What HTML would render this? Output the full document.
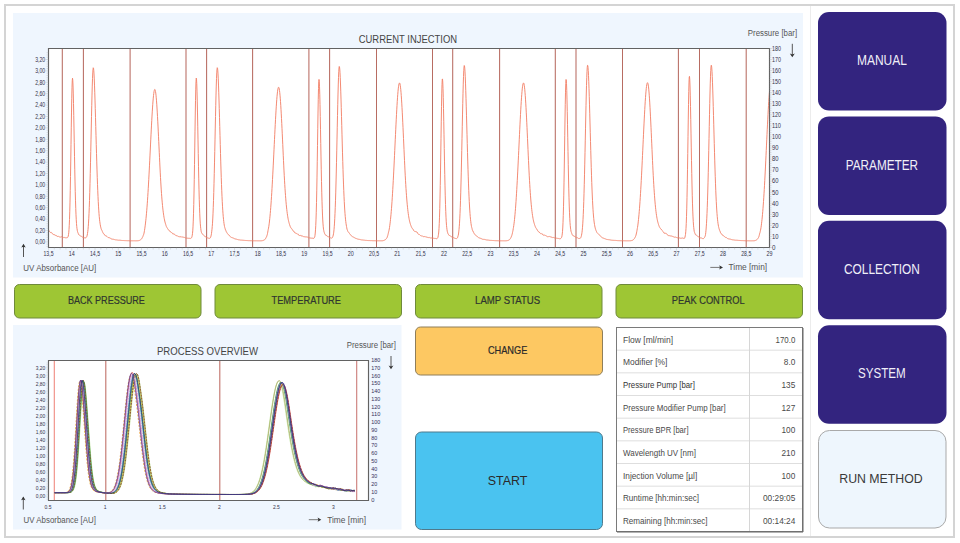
<!DOCTYPE html><html><head><meta charset="utf-8"><style>
html,body{margin:0;padding:0;background:#fff;width:960px;height:543px;overflow:hidden}
svg{position:absolute;left:0;top:0;display:block}
text{font-family:"Liberation Sans", sans-serif}
</style></head><body>
<svg width="960" height="543" viewBox="0 0 960 543">
<rect x="5" y="5" width="949" height="532" fill="#fff" stroke="#d4d4d4" stroke-width="2"/>
<line x1="810.5" y1="6" x2="810.5" y2="536" stroke="#ececec" stroke-width="1"/>
<rect x="13" y="13" width="790" height="264.5" fill="#eff6fe"/>
<rect x="13" y="325" width="388.5" height="204.5" fill="#eff6fe"/>
<rect x="48.5" y="48.5" width="721.0" height="199.0" fill="#fff"/>
<clipPath id="ct"><rect x="48.5" y="48.5" width="721.0" height="199.0"/></clipPath>
<line x1="62.3" y1="48.5" x2="62.3" y2="247.5" stroke="#b86c62" stroke-width="1.05"/>
<line x1="83.4" y1="48.5" x2="83.4" y2="247.5" stroke="#b86c62" stroke-width="1.05"/>
<line x1="130.1" y1="48.5" x2="130.1" y2="247.5" stroke="#b86c62" stroke-width="1.05"/>
<line x1="186.0" y1="48.5" x2="186.0" y2="247.5" stroke="#b86c62" stroke-width="1.05"/>
<line x1="206.6" y1="48.5" x2="206.6" y2="247.5" stroke="#b86c62" stroke-width="1.05"/>
<line x1="252.6" y1="48.5" x2="252.6" y2="247.5" stroke="#b86c62" stroke-width="1.05"/>
<line x1="308.9" y1="48.5" x2="308.9" y2="247.5" stroke="#b86c62" stroke-width="1.05"/>
<line x1="329.6" y1="48.5" x2="329.6" y2="247.5" stroke="#b86c62" stroke-width="1.05"/>
<line x1="376.5" y1="48.5" x2="376.5" y2="247.5" stroke="#b86c62" stroke-width="1.05"/>
<line x1="432.5" y1="48.5" x2="432.5" y2="247.5" stroke="#b86c62" stroke-width="1.05"/>
<line x1="452.7" y1="48.5" x2="452.7" y2="247.5" stroke="#b86c62" stroke-width="1.05"/>
<line x1="499.6" y1="48.5" x2="499.6" y2="247.5" stroke="#b86c62" stroke-width="1.05"/>
<line x1="555.3" y1="48.5" x2="555.3" y2="247.5" stroke="#b86c62" stroke-width="1.05"/>
<line x1="576.0" y1="48.5" x2="576.0" y2="247.5" stroke="#b86c62" stroke-width="1.05"/>
<line x1="622.5" y1="48.5" x2="622.5" y2="247.5" stroke="#b86c62" stroke-width="1.05"/>
<line x1="678.4" y1="48.5" x2="678.4" y2="247.5" stroke="#b86c62" stroke-width="1.05"/>
<line x1="699.5" y1="48.5" x2="699.5" y2="247.5" stroke="#b86c62" stroke-width="1.05"/>
<line x1="746.2" y1="48.5" x2="746.2" y2="247.5" stroke="#b86c62" stroke-width="1.05"/>
<path d="M48.50,229.82 L48.75,230.36 L49.00,230.67 L49.25,230.99 L49.50,231.52 L49.75,231.92 L50.00,232.17 L50.25,232.19 L50.50,232.56 L50.75,232.58 L51.00,232.64 L51.25,232.48 L51.50,232.66 L51.75,232.83 L52.00,232.90 L52.25,233.43 L52.50,233.58 L52.75,234.12 L53.00,234.43 L53.25,234.55 L53.50,234.42 L53.75,234.34 L54.00,234.72 L54.25,234.80 L54.50,234.71 L54.75,234.83 L55.00,235.20 L55.25,235.36 L55.50,235.28 L55.75,235.10 L56.00,235.40 L56.25,235.55 L56.50,235.65 L56.75,235.96 L57.00,236.21 L57.25,236.58 L57.50,236.43 L57.75,236.46 L58.00,236.61 L58.25,236.41 L58.50,236.43 L58.75,236.57 L59.00,236.78 L59.25,236.89 L59.50,236.89 L59.75,237.00 L60.00,237.21 L60.25,237.15 L60.50,237.08 L60.75,237.03 L61.00,236.94 L61.25,236.91 L61.50,236.70 L61.75,236.82 L62.00,236.89 L62.25,237.13 L62.50,237.31 L62.75,237.56 L63.00,237.64 L63.25,237.52 L63.50,237.63 L63.75,237.44 L64.00,237.49 L64.25,237.40 L64.50,237.51 L64.75,237.70 L65.00,237.70 L65.25,237.73 L65.50,237.79 L65.75,237.79 L66.00,237.84 L66.25,237.71 L66.50,237.72 L66.75,237.80 L67.00,237.68 L67.25,237.64 L67.50,237.55 L67.75,237.27 L68.00,236.87 L68.25,236.06 L68.50,234.71 L68.75,232.82 L69.00,229.58 L69.25,225.33 L69.50,219.50 L69.75,211.83 L70.00,202.13 L70.25,190.31 L70.50,176.50 L70.75,161.04 L71.00,144.56 L71.25,127.89 L71.50,112.07 L71.75,98.23 L72.00,87.42 L72.25,80.55 L72.50,78.21 L72.75,79.96 L73.00,85.05 L73.25,93.07 L73.50,103.46 L73.75,115.62 L74.00,128.91 L74.25,142.65 L74.50,156.25 L74.75,169.20 L75.00,181.09 L75.25,191.68 L75.50,200.81 L75.75,208.48 L76.00,214.74 L76.25,219.72 L76.50,223.64 L76.75,226.62 L77.00,228.69 L77.25,230.22 L77.50,231.47 L77.75,232.26 L78.00,232.92 L78.25,233.44 L78.50,234.05 L78.75,234.65 L79.00,234.79 L79.25,235.14 L79.50,235.29 L79.75,235.51 L80.00,235.68 L80.25,235.77 L80.50,235.98 L80.75,236.00 L81.00,236.08 L81.25,236.31 L81.50,236.37 L81.75,236.50 L82.00,236.67 L82.25,236.88 L82.50,237.11 L82.75,237.32 L83.00,237.53 L83.25,237.60 L83.50,237.66 L83.75,237.73 L84.00,237.84 L84.25,237.77 L84.50,237.77 L84.75,237.84 L85.00,237.84 L85.25,237.89 L85.50,237.87 L85.75,237.77 L86.00,237.71 L86.25,237.46 L86.50,237.15 L86.75,236.63 L87.00,235.88 L87.25,235.00 L87.50,233.54 L87.75,231.65 L88.00,229.51 L88.25,226.68 L88.50,223.11 L88.75,218.81 L89.00,213.65 L89.25,207.57 L89.50,200.51 L89.75,192.46 L90.00,183.45 L90.25,173.53 L90.50,162.84 L90.75,151.54 L91.00,139.85 L91.25,128.04 L91.50,116.43 L91.75,105.34 L92.00,95.12 L92.25,86.11 L92.50,78.63 L92.75,72.94 L93.00,69.27 L93.25,67.75 L93.50,68.24 L93.75,70.31 L94.00,73.90 L94.25,78.91 L94.50,85.12 L94.75,92.23 L95.00,100.08 L95.25,108.50 L95.50,117.33 L95.75,126.40 L96.00,135.53 L96.25,144.58 L96.50,153.40 L96.75,161.88 L97.00,169.92 L97.25,177.44 L97.50,184.38 L97.75,190.73 L98.00,196.47 L98.25,201.60 L98.50,206.15 L98.75,210.14 L99.00,213.61 L99.25,216.62 L99.50,219.20 L99.75,221.39 L100.00,223.15 L100.25,224.71 L100.50,226.11 L100.75,227.18 L101.00,228.31 L101.25,228.90 L101.50,229.70 L101.75,230.23 L102.00,230.53 L102.25,231.32 L102.50,231.65 L102.75,232.39 L103.00,232.79 L103.25,233.21 L103.50,233.79 L103.75,233.88 L104.00,234.24 L104.25,234.28 L104.50,234.81 L104.75,235.04 L105.00,235.15 L105.25,235.58 L105.50,235.67 L105.75,235.98 L106.00,235.96 L106.25,236.12 L106.50,236.12 L106.75,236.27 L107.00,236.51 L107.25,236.77 L107.50,236.90 L107.75,237.18 L108.00,237.53 L108.25,237.52 L108.50,237.60 L108.75,237.67 L109.00,237.74 L109.25,237.69 L109.50,237.77 L109.75,237.91 L110.00,238.02 L110.25,238.16 L110.50,238.23 L110.75,238.52 L111.00,238.66 L111.25,238.82 L111.50,238.98 L111.75,239.06 L112.00,239.22 L112.25,239.22 L112.50,239.17 L112.75,239.22 L113.00,239.26 L113.25,239.27 L113.50,239.32 L113.75,239.34 L114.00,239.46 L114.25,239.48 L114.50,239.57 L114.75,239.63 L115.00,239.67 L115.25,239.76 L115.50,239.79 L115.75,239.88 L116.00,239.85 L116.25,239.89 L116.50,239.92 L116.75,239.93 L117.00,239.97 L117.25,240.02 L117.50,240.07 L117.75,240.12 L118.00,240.15 L118.25,240.18 L118.50,240.21 L118.75,240.22 L119.00,240.22 L119.25,240.20 L119.50,240.23 L119.75,240.25 L120.00,240.27 L120.25,240.27 L120.50,240.29 L120.75,240.35 L121.00,240.37 L121.25,240.40 L121.50,240.43 L121.75,240.48 L122.00,240.51 L122.25,240.52 L122.50,240.51 L122.75,240.50 L123.00,240.52 L123.25,240.52 L123.50,240.54 L123.75,240.53 L124.00,240.56 L124.25,240.59 L124.50,240.59 L124.75,240.59 L125.00,240.60 L125.25,240.61 L125.50,240.61 L125.75,240.61 L126.00,240.62 L126.25,240.63 L126.50,240.64 L126.75,240.67 L127.00,240.67 L127.25,240.70 L127.50,240.70 L127.75,240.71 L128.00,240.70 L128.25,240.70 L128.50,240.70 L128.75,240.69 L129.00,240.70 L129.25,240.71 L129.50,240.73 L129.75,240.73 L130.00,240.74 L130.25,240.75 L130.50,240.74 L130.75,240.74 L131.00,240.74 L131.25,240.74 L131.50,240.75 L131.75,240.77 L132.00,240.77 L132.25,240.77 L132.50,240.78 L132.75,240.79 L133.00,240.79 L133.25,240.80 L133.50,240.79 L133.75,240.79 L134.00,240.79 L134.25,240.79 L134.50,240.79 L134.75,240.80 L135.00,240.80 L135.25,240.81 L135.50,240.82 L135.75,240.81 L136.00,240.81 L136.25,240.79 L136.50,240.78 L136.75,240.77 L137.00,240.77 L137.25,240.76 L137.50,240.75 L137.75,240.73 L138.00,240.71 L138.25,240.68 L138.50,240.63 L138.75,240.58 L139.00,240.52 L139.25,240.46 L139.50,240.37 L139.75,240.30 L140.00,240.16 L140.25,240.02 L140.50,239.85 L140.75,239.65 L141.00,239.40 L141.25,239.16 L141.50,238.89 L141.75,238.55 L142.00,238.20 L142.25,237.67 L142.50,237.33 L142.75,236.75 L143.00,236.24 L143.25,235.45 L143.50,234.89 L143.75,234.15 L144.00,233.15 L144.25,231.92 L144.50,230.42 L144.75,228.84 L145.00,227.00 L145.25,225.16 L145.50,223.05 L145.75,220.84 L146.00,218.50 L146.25,215.97 L146.50,213.24 L146.75,210.31 L147.00,207.17 L147.25,203.82 L147.50,200.26 L147.75,196.49 L148.00,192.53 L148.25,188.38 L148.50,184.04 L148.75,179.54 L149.00,174.88 L149.25,170.09 L149.50,165.19 L149.75,160.20 L150.00,155.14 L150.25,150.04 L150.50,144.94 L150.75,139.86 L151.00,134.85 L151.25,129.93 L151.50,125.13 L151.75,120.51 L152.00,116.08 L152.25,111.89 L152.50,107.97 L152.75,104.35 L153.00,101.07 L153.25,98.15 L153.50,95.61 L153.75,93.49 L154.00,91.80 L154.25,90.55 L154.50,89.76 L154.75,89.44 L155.00,89.59 L155.25,90.25 L155.50,91.42 L155.75,93.08 L156.00,95.22 L156.25,97.80 L156.50,100.82 L156.75,104.24 L157.00,108.02 L157.25,112.13 L157.50,116.54 L157.75,121.20 L158.00,126.08 L158.25,131.13 L158.50,136.31 L158.75,141.59 L159.00,146.91 L159.25,152.25 L159.50,157.57 L159.75,162.84 L160.00,167.97 L160.25,172.87 L160.50,177.50 L160.75,181.89 L161.00,186.01 L161.25,189.88 L161.50,193.49 L161.75,196.85 L162.00,199.96 L162.25,202.84 L162.50,205.50 L162.75,207.93 L163.00,210.16 L163.25,212.20 L163.50,214.06 L163.75,215.74 L164.00,217.27 L164.25,218.66 L164.50,219.91 L164.75,221.05 L165.00,222.07 L165.25,223.00 L165.50,223.82 L165.75,224.59 L166.00,225.43 L166.25,226.21 L166.50,226.74 L166.75,227.24 L167.00,227.61 L167.25,228.00 L167.50,228.46 L167.75,228.76 L168.00,229.27 L168.25,229.58 L168.50,229.89 L168.75,230.08 L169.00,230.22 L169.25,230.75 L169.50,230.73 L169.75,230.93 L170.00,231.48 L170.25,231.80 L170.50,231.80 L170.75,231.90 L171.00,231.99 L171.25,232.43 L171.50,232.57 L171.75,232.57 L172.00,232.89 L172.25,233.01 L172.50,233.31 L172.75,233.71 L173.00,233.47 L173.25,233.92 L173.50,234.07 L173.75,234.19 L174.00,234.38 L174.25,234.17 L174.50,234.62 L174.75,234.56 L175.00,234.75 L175.25,234.91 L175.50,235.10 L175.75,235.42 L176.00,235.52 L176.25,235.60 L176.50,235.68 L176.75,235.59 L177.00,235.62 L177.25,235.72 L177.50,235.91 L177.75,236.16 L178.00,236.20 L178.25,236.38 L178.50,236.57 L178.75,236.46 L179.00,236.52 L179.25,236.64 L179.50,236.72 L179.75,236.60 L180.00,236.57 L180.25,236.79 L180.50,236.67 L180.75,236.58 L181.00,236.58 L181.25,236.85 L181.50,237.00 L181.75,236.97 L182.00,237.04 L182.25,237.03 L182.50,237.00 L182.75,237.08 L183.00,237.11 L183.25,237.17 L183.50,237.27 L183.75,237.39 L184.00,237.54 L184.25,237.52 L184.50,237.45 L184.75,237.50 L185.00,237.59 L185.25,237.76 L185.50,237.89 L185.75,238.01 L186.00,238.24 L186.25,238.22 L186.50,238.19 L186.75,238.15 L187.00,238.18 L187.25,238.24 L187.50,238.22 L187.75,238.19 L188.00,238.35 L188.25,238.35 L188.50,238.30 L188.75,238.24 L189.00,238.24 L189.25,238.33 L189.50,238.30 L189.75,238.31 L190.00,238.30 L190.25,238.37 L190.50,238.40 L190.75,238.41 L191.00,238.23 L191.25,238.04 L191.50,237.81 L191.75,237.30 L192.00,236.51 L192.25,235.22 L192.50,233.34 L192.75,230.87 L193.00,226.82 L193.25,221.12 L193.50,213.81 L193.75,204.49 L194.00,193.05 L194.25,179.57 L194.50,164.35 L194.75,147.95 L195.00,131.19 L195.25,115.06 L195.50,100.68 L195.75,89.15 L196.00,81.40 L196.25,78.11 L196.50,79.15 L196.75,83.60 L197.00,91.10 L197.25,101.09 L197.50,112.98 L197.75,126.13 L198.00,139.88 L198.25,153.59 L198.50,166.75 L198.75,178.91 L199.00,189.80 L199.25,199.26 L199.50,207.24 L199.75,213.79 L200.00,219.03 L200.25,223.16 L200.50,226.14 L200.75,228.47 L201.00,230.32 L201.25,231.73 L201.50,232.56 L201.75,232.94 L202.00,233.52 L202.25,233.85 L202.50,234.04 L202.75,234.09 L203.00,234.44 L203.25,234.84 L203.50,235.15 L203.75,235.44 L204.00,235.71 L204.25,235.95 L204.50,236.19 L204.75,236.32 L205.00,236.53 L205.25,236.58 L205.50,236.80 L205.75,236.98 L206.00,237.14 L206.25,237.30 L206.50,237.40 L206.75,237.48 L207.00,237.55 L207.25,237.69 L207.50,237.80 L207.75,237.91 L208.00,237.93 L208.25,238.01 L208.50,238.18 L208.75,238.27 L209.00,238.26 L209.25,238.26 L209.50,238.35 L209.75,238.36 L210.00,238.10 L210.25,237.90 L210.50,237.53 L210.75,236.89 L211.00,235.92 L211.25,234.93 L211.50,233.34 L211.75,231.23 L212.00,229.19 L212.25,226.49 L212.50,223.22 L212.75,218.97 L213.00,213.80 L213.25,207.71 L213.50,200.64 L213.75,192.58 L214.00,183.55 L214.25,173.63 L214.50,162.92 L214.75,151.60 L215.00,139.90 L215.25,128.07 L215.50,116.44 L215.75,105.34 L216.00,95.10 L216.25,86.08 L216.50,78.59 L216.75,72.90 L217.00,69.22 L217.25,67.69 L217.50,68.18 L217.75,70.25 L218.00,73.84 L218.25,78.85 L218.50,85.07 L218.75,92.19 L219.00,100.04 L219.25,108.48 L219.50,117.32 L219.75,126.40 L220.00,135.54 L220.25,144.60 L220.50,153.43 L220.75,161.92 L221.00,169.96 L221.25,177.49 L221.50,184.45 L221.75,190.80 L222.00,196.54 L222.25,201.68 L222.50,206.23 L222.75,210.23 L223.00,213.70 L223.25,216.71 L223.50,219.29 L223.75,221.53 L224.00,223.44 L224.25,225.12 L224.50,226.41 L224.75,227.48 L225.00,228.27 L225.25,229.06 L225.50,229.91 L225.75,230.36 L226.00,230.98 L226.25,231.60 L226.50,232.05 L226.75,232.51 L227.00,232.82 L227.25,233.30 L227.50,233.64 L227.75,234.07 L228.00,234.33 L228.25,234.44 L228.50,234.92 L228.75,235.01 L229.00,235.26 L229.25,235.37 L229.50,235.80 L229.75,236.03 L230.00,236.20 L230.25,236.57 L230.50,236.72 L230.75,236.96 L231.00,237.05 L231.25,237.37 L231.50,237.46 L231.75,237.52 L232.00,237.66 L232.25,237.70 L232.50,237.79 L232.75,237.84 L233.00,237.99 L233.25,238.03 L233.50,238.16 L233.75,238.38 L234.00,238.52 L234.25,238.54 L234.50,238.66 L234.75,238.86 L235.00,238.93 L235.25,238.97 L235.50,238.96 L235.75,239.04 L236.00,239.09 L236.25,239.11 L236.50,239.22 L236.75,239.28 L237.00,239.36 L237.25,239.47 L237.50,239.51 L237.75,239.57 L238.00,239.64 L238.25,239.68 L238.50,239.76 L238.75,239.79 L239.00,239.80 L239.25,239.85 L239.50,239.88 L239.75,239.90 L240.00,239.90 L240.25,239.99 L240.50,240.05 L240.75,240.08 L241.00,240.08 L241.25,240.10 L241.50,240.13 L241.75,240.13 L242.00,240.14 L242.25,240.18 L242.50,240.23 L242.75,240.26 L243.00,240.29 L243.25,240.29 L243.50,240.31 L243.75,240.33 L244.00,240.34 L244.25,240.36 L244.50,240.38 L244.75,240.41 L245.00,240.43 L245.25,240.44 L245.50,240.46 L245.75,240.47 L246.00,240.47 L246.25,240.50 L246.50,240.52 L246.75,240.53 L247.00,240.54 L247.25,240.56 L247.50,240.59 L247.75,240.59 L248.00,240.61 L248.25,240.63 L248.50,240.63 L248.75,240.65 L249.00,240.64 L249.25,240.65 L249.50,240.65 L249.75,240.65 L250.00,240.67 L250.25,240.68 L250.50,240.68 L250.75,240.69 L251.00,240.71 L251.25,240.70 L251.50,240.71 L251.75,240.70 L252.00,240.72 L252.25,240.72 L252.50,240.73 L252.75,240.75 L253.00,240.74 L253.25,240.74 L253.50,240.76 L253.75,240.77 L254.00,240.77 L254.25,240.77 L254.50,240.79 L254.75,240.79 L255.00,240.79 L255.25,240.78 L255.50,240.78 L255.75,240.78 L256.00,240.79 L256.25,240.79 L256.50,240.79 L256.75,240.80 L257.00,240.80 L257.25,240.80 L257.50,240.81 L257.75,240.81 L258.00,240.81 L258.25,240.80 L258.50,240.81 L258.75,240.81 L259.00,240.80 L259.25,240.81 L259.50,240.81 L259.75,240.82 L260.00,240.81 L260.25,240.80 L260.50,240.80 L260.75,240.79 L261.00,240.78 L261.25,240.76 L261.50,240.74 L261.75,240.73 L262.00,240.70 L262.25,240.66 L262.50,240.62 L262.75,240.57 L263.00,240.50 L263.25,240.41 L263.50,240.32 L263.75,240.16 L264.00,240.02 L264.25,239.91 L264.50,239.75 L264.75,239.57 L265.00,239.28 L265.25,239.12 L265.50,238.74 L265.75,238.18 L266.00,237.76 L266.25,237.30 L266.50,236.91 L266.75,236.16 L267.00,235.40 L267.25,234.68 L267.50,233.52 L267.75,232.13 L268.00,230.67 L268.25,229.32 L268.50,228.16 L268.75,226.75 L269.00,225.05 L269.25,223.19 L269.50,221.01 L269.75,218.68 L270.00,216.15 L270.25,213.43 L270.50,210.49 L270.75,207.34 L271.00,203.99 L271.25,200.42 L271.50,196.64 L271.75,192.66 L272.00,188.49 L272.25,184.12 L272.50,179.59 L272.75,174.89 L273.00,170.06 L273.25,165.10 L273.50,160.05 L273.75,154.93 L274.00,149.77 L274.25,144.59 L274.50,139.43 L274.75,134.33 L275.00,129.32 L275.25,124.42 L275.50,119.69 L275.75,115.16 L276.00,110.86 L276.25,106.82 L276.50,103.09 L276.75,99.68 L277.00,96.65 L277.25,93.99 L277.50,91.76 L277.75,89.95 L278.00,88.59 L278.25,87.70 L278.50,87.27 L278.75,87.33 L279.00,87.90 L279.25,88.98 L279.50,90.57 L279.75,92.64 L280.00,95.17 L280.25,98.15 L280.50,101.54 L280.75,105.30 L281.00,109.41 L281.25,113.83 L281.50,118.51 L281.75,123.42 L282.00,128.51 L282.25,133.74 L282.50,139.08 L282.75,144.47 L283.00,149.89 L283.25,155.29 L283.50,160.65 L283.75,165.90 L284.00,170.91 L284.25,175.68 L284.50,180.18 L284.75,184.42 L285.00,188.40 L285.25,192.13 L285.50,195.59 L285.75,198.81 L286.00,201.79 L286.25,204.54 L286.50,207.06 L286.75,209.37 L287.00,211.49 L287.25,213.41 L287.50,215.17 L287.75,216.76 L288.00,218.20 L288.25,219.50 L288.50,220.68 L288.75,221.73 L289.00,222.67 L289.25,223.53 L289.50,224.41 L289.75,225.14 L290.00,225.94 L290.25,226.55 L290.50,227.04 L290.75,227.62 L291.00,228.07 L291.25,228.36 L291.50,228.45 L291.75,228.74 L292.00,229.25 L292.25,229.60 L292.50,229.72 L292.75,230.08 L293.00,230.60 L293.25,230.95 L293.50,231.25 L293.75,231.32 L294.00,232.06 L294.25,231.99 L294.50,232.21 L294.75,232.61 L295.00,232.61 L295.25,233.20 L295.50,232.98 L295.75,233.27 L296.00,233.46 L296.25,233.51 L296.50,233.58 L296.75,233.59 L297.00,233.82 L297.25,234.03 L297.50,233.90 L297.75,234.06 L298.00,234.32 L298.25,234.24 L298.50,234.68 L298.75,234.87 L299.00,235.39 L299.25,235.64 L299.50,235.53 L299.75,235.74 L300.00,235.41 L300.25,235.50 L300.50,235.35 L300.75,235.31 L301.00,235.66 L301.25,235.78 L301.50,235.99 L301.75,235.91 L302.00,236.06 L302.25,236.07 L302.50,236.13 L302.75,236.18 L303.00,236.38 L303.25,236.49 L303.50,236.59 L303.75,236.68 L304.00,236.74 L304.25,236.74 L304.50,236.66 L304.75,236.81 L305.00,236.81 L305.25,236.85 L305.50,236.84 L305.75,236.93 L306.00,236.93 L306.25,236.87 L306.50,236.90 L306.75,237.07 L307.00,237.05 L307.25,236.99 L307.50,237.16 L307.75,237.34 L308.00,237.56 L308.25,237.47 L308.50,237.69 L308.75,237.75 L309.00,237.92 L309.25,237.93 L309.50,237.80 L309.75,237.91 L310.00,237.94 L310.25,238.07 L310.50,237.99 L310.75,238.05 L311.00,238.12 L311.25,238.17 L311.50,238.17 L311.75,238.17 L312.00,238.20 L312.25,238.20 L312.50,238.27 L312.75,238.22 L313.00,238.29 L313.25,238.28 L313.50,238.39 L313.75,238.37 L314.00,238.27 L314.25,237.99 L314.50,237.41 L314.75,236.81 L315.00,235.32 L315.25,233.05 L315.50,229.83 L315.75,225.65 L316.00,219.87 L316.25,212.25 L316.50,202.60 L316.75,190.86 L317.00,177.13 L317.25,161.76 L317.50,145.38 L317.75,128.81 L318.00,113.09 L318.25,99.33 L318.50,88.58 L318.75,81.75 L319.00,79.42 L319.25,81.16 L319.50,86.22 L319.75,94.19 L320.00,104.51 L320.25,116.59 L320.50,129.78 L320.75,143.44 L321.00,156.95 L321.25,169.81 L321.50,181.63 L321.75,192.14 L322.00,201.21 L322.25,208.82 L322.50,215.04 L322.75,219.99 L323.00,223.92 L323.25,226.81 L323.50,229.18 L323.75,230.57 L324.00,231.72 L324.25,232.42 L324.50,233.21 L324.75,233.86 L325.00,234.39 L325.25,234.52 L325.50,235.02 L325.75,235.30 L326.00,235.25 L326.25,235.35 L326.50,235.44 L326.75,235.83 L327.00,235.95 L327.25,236.06 L327.50,236.35 L327.75,236.57 L328.00,236.48 L328.25,236.64 L328.50,236.77 L328.75,237.00 L329.00,237.14 L329.25,237.24 L329.50,237.55 L329.75,237.55 L330.00,237.59 L330.25,237.67 L330.50,237.91 L330.75,237.94 L331.00,238.03 L331.25,238.12 L331.50,238.14 L331.75,238.13 L332.00,237.89 L332.25,237.72 L332.50,237.33 L332.75,236.76 L333.00,236.12 L333.25,235.06 L333.50,233.80 L333.75,232.11 L334.00,229.70 L334.25,226.78 L334.50,223.09 L334.75,218.66 L335.00,213.47 L335.25,207.34 L335.50,200.23 L335.75,192.12 L336.00,183.04 L336.25,173.06 L336.50,162.29 L336.75,150.90 L337.00,139.12 L337.25,127.23 L337.50,115.53 L337.75,104.35 L338.00,94.06 L338.25,84.98 L338.50,77.44 L338.75,71.72 L339.00,68.02 L339.25,66.48 L339.50,66.98 L339.75,69.07 L340.00,72.68 L340.25,77.73 L340.50,83.99 L340.75,91.15 L341.00,99.07 L341.25,107.56 L341.50,116.46 L341.75,125.61 L342.00,134.82 L342.25,143.94 L342.50,152.83 L342.75,161.38 L343.00,169.49 L343.25,177.07 L343.50,184.07 L343.75,190.47 L344.00,196.26 L344.25,201.43 L344.50,206.01 L344.75,210.04 L345.00,213.54 L345.25,216.57 L345.50,219.17 L345.75,221.40 L346.00,223.37 L346.25,225.03 L346.50,226.41 L346.75,227.82 L347.00,229.08 L347.25,229.82 L347.50,230.47 L347.75,231.20 L348.00,231.81 L348.25,231.95 L348.50,232.21 L348.75,232.47 L349.00,232.75 L349.25,233.15 L349.50,233.54 L349.75,233.88 L350.00,234.25 L350.25,234.51 L350.50,234.77 L350.75,234.94 L351.00,235.08 L351.25,235.55 L351.50,235.79 L351.75,236.13 L352.00,236.27 L352.25,236.52 L352.50,236.71 L352.75,236.79 L353.00,236.91 L353.25,236.97 L353.50,237.20 L353.75,237.30 L354.00,237.45 L354.25,237.51 L354.50,237.69 L354.75,237.86 L355.00,237.99 L355.25,238.16 L355.50,238.27 L355.75,238.39 L356.00,238.51 L356.25,238.53 L356.50,238.64 L356.75,238.65 L357.00,238.73 L357.25,238.90 L357.50,238.95 L357.75,239.14 L358.00,239.18 L358.25,239.25 L358.50,239.27 L358.75,239.25 L359.00,239.36 L359.25,239.38 L359.50,239.39 L359.75,239.46 L360.00,239.51 L360.25,239.60 L360.50,239.63 L360.75,239.70 L361.00,239.79 L361.25,239.80 L361.50,239.90 L361.75,239.91 L362.00,239.92 L362.25,239.91 L362.50,239.95 L362.75,240.00 L363.00,239.98 L363.25,240.05 L363.50,240.07 L363.75,240.09 L364.00,240.11 L364.25,240.11 L364.50,240.21 L364.75,240.22 L365.00,240.27 L365.25,240.32 L365.50,240.35 L365.75,240.38 L366.00,240.38 L366.25,240.38 L366.50,240.40 L366.75,240.40 L367.00,240.42 L367.25,240.46 L367.50,240.49 L367.75,240.53 L368.00,240.53 L368.25,240.55 L368.50,240.55 L368.75,240.54 L369.00,240.55 L369.25,240.56 L369.50,240.57 L369.75,240.59 L370.00,240.61 L370.25,240.64 L370.50,240.61 L370.75,240.62 L371.00,240.62 L371.25,240.61 L371.50,240.62 L371.75,240.63 L372.00,240.64 L372.25,240.65 L372.50,240.68 L372.75,240.70 L373.00,240.70 L373.25,240.70 L373.50,240.72 L373.75,240.70 L374.00,240.70 L374.25,240.70 L374.50,240.71 L374.75,240.71 L375.00,240.71 L375.25,240.73 L375.50,240.73 L375.75,240.73 L376.00,240.72 L376.25,240.74 L376.50,240.75 L376.75,240.75 L377.00,240.77 L377.25,240.78 L377.50,240.79 L377.75,240.78 L378.00,240.79 L378.25,240.79 L378.50,240.79 L378.75,240.79 L379.00,240.80 L379.25,240.80 L379.50,240.79 L379.75,240.80 L380.00,240.80 L380.25,240.79 L380.50,240.79 L380.75,240.79 L381.00,240.78 L381.25,240.77 L381.50,240.77 L381.75,240.77 L382.00,240.76 L382.25,240.74 L382.50,240.73 L382.75,240.71 L383.00,240.67 L383.25,240.62 L383.50,240.54 L383.75,240.48 L384.00,240.38 L384.25,240.27 L384.50,240.14 L384.75,240.03 L385.00,239.94 L385.25,239.75 L385.50,239.56 L385.75,239.38 L386.00,239.16 L386.25,238.83 L386.50,238.39 L386.75,238.05 L387.00,237.70 L387.25,236.98 L387.50,236.20 L387.75,235.47 L388.00,234.59 L388.25,233.48 L388.50,232.25 L388.75,231.31 L389.00,230.35 L389.25,229.03 L389.50,227.56 L389.75,225.75 L390.00,223.86 L390.25,221.77 L390.50,219.51 L390.75,217.03 L391.00,214.35 L391.25,211.46 L391.50,208.36 L391.75,205.04 L392.00,201.50 L392.25,197.75 L392.50,193.78 L392.75,189.61 L393.00,185.24 L393.25,180.68 L393.50,175.95 L393.75,171.06 L394.00,166.04 L394.25,160.91 L394.50,155.68 L394.75,150.40 L395.00,145.08 L395.25,139.76 L395.50,134.48 L395.75,129.26 L396.00,124.15 L396.25,119.19 L396.50,114.40 L396.75,109.83 L397.00,105.51 L397.25,101.49 L397.50,97.78 L397.75,94.43 L398.00,91.46 L398.25,88.90 L398.50,86.78 L398.75,85.10 L399.00,83.90 L399.25,83.17 L399.50,82.93 L399.75,83.19 L400.00,83.99 L400.25,85.31 L400.50,87.15 L400.75,89.47 L401.00,92.26 L401.25,95.49 L401.50,99.13 L401.75,103.15 L402.00,107.50 L402.25,112.16 L402.50,117.07 L402.75,122.19 L403.00,127.49 L403.25,132.92 L403.50,138.43 L403.75,143.99 L404.00,149.56 L404.25,155.10 L404.50,160.58 L404.75,165.89 L405.00,170.95 L405.25,175.74 L405.50,180.28 L405.75,184.54 L406.00,188.55 L406.25,192.28 L406.50,195.76 L406.75,198.99 L407.00,201.97 L407.25,204.72 L407.50,207.24 L407.75,209.55 L408.00,211.66 L408.25,213.59 L408.50,215.33 L408.75,216.92 L409.00,218.35 L409.25,219.65 L409.50,220.83 L409.75,221.87 L410.00,222.84 L410.25,223.71 L410.50,224.53 L410.75,225.26 L411.00,225.84 L411.25,226.53 L411.50,226.99 L411.75,227.60 L412.00,227.83 L412.25,228.37 L412.50,228.79 L412.75,228.84 L413.00,229.28 L413.25,229.57 L413.50,230.37 L413.75,230.52 L414.00,230.73 L414.25,231.08 L414.50,231.26 L414.75,231.39 L415.00,231.33 L415.25,231.38 L415.50,231.78 L415.75,231.58 L416.00,231.89 L416.25,231.82 L416.50,231.80 L416.75,232.07 L417.00,232.11 L417.25,232.71 L417.50,232.65 L417.75,233.36 L418.00,233.71 L418.25,234.04 L418.50,234.31 L418.75,234.53 L419.00,234.80 L419.25,234.55 L419.50,234.80 L419.75,234.75 L420.00,235.03 L420.25,235.26 L420.50,235.52 L420.75,235.67 L421.00,235.76 L421.25,235.92 L421.50,235.88 L421.75,235.75 L422.00,235.65 L422.25,235.80 L422.50,236.00 L422.75,236.25 L423.00,236.40 L423.25,236.48 L423.50,236.55 L423.75,236.68 L424.00,236.44 L424.25,236.44 L424.50,236.57 L424.75,236.65 L425.00,236.67 L425.25,236.63 L425.50,236.91 L425.75,236.85 L426.00,236.78 L426.25,236.92 L426.50,237.04 L426.75,237.07 L427.00,237.10 L427.25,237.31 L427.50,237.27 L427.75,237.47 L428.00,237.53 L428.25,237.58 L428.50,237.56 L428.75,237.56 L429.00,237.64 L429.25,237.49 L429.50,237.62 L429.75,237.67 L430.00,237.72 L430.25,237.82 L430.50,237.93 L430.75,237.92 L431.00,237.84 L431.25,237.92 L431.50,237.94 L431.75,237.88 L432.00,237.79 L432.25,237.85 L432.50,238.07 L432.75,238.08 L433.00,238.08 L433.25,238.05 L433.50,238.19 L433.75,238.35 L434.00,238.24 L434.25,238.29 L434.50,238.39 L434.75,238.56 L435.00,238.52 L435.25,238.46 L435.50,238.48 L435.75,238.52 L436.00,238.62 L436.25,238.64 L436.50,238.66 L436.75,238.76 L437.00,238.71 L437.25,238.46 L437.50,238.20 L437.75,237.76 L438.00,237.08 L438.25,235.77 L438.50,234.20 L438.75,232.01 L439.00,228.45 L439.25,223.66 L439.50,217.16 L439.75,208.70 L440.00,198.14 L440.25,185.49 L440.50,170.96 L440.75,154.99 L441.00,138.32 L441.25,121.85 L441.50,106.68 L441.75,93.92 L442.00,84.59 L442.25,79.48 L442.50,78.92 L442.75,82.03 L443.00,88.36 L443.25,97.39 L443.50,108.55 L443.75,121.24 L444.00,134.78 L444.25,148.53 L444.50,161.92 L444.75,174.48 L445.00,185.87 L445.25,195.88 L445.50,204.42 L445.75,211.51 L446.00,217.23 L446.25,221.77 L446.50,225.29 L446.75,227.77 L447.00,229.72 L447.25,231.24 L447.50,232.15 L447.75,232.92 L448.00,233.78 L448.25,234.26 L448.50,234.47 L448.75,235.03 L449.00,235.13 L449.25,235.54 L449.50,235.44 L449.75,235.69 L450.00,235.88 L450.25,235.88 L450.50,236.24 L450.75,236.17 L451.00,236.32 L451.25,236.56 L451.50,236.72 L451.75,236.86 L452.00,236.96 L452.25,237.28 L452.50,237.39 L452.75,237.47 L453.00,237.56 L453.25,237.59 L453.50,237.63 L453.75,237.72 L454.00,237.84 L454.25,237.99 L454.50,238.17 L454.75,238.20 L455.00,238.34 L455.25,238.35 L455.50,238.50 L455.75,238.48 L456.00,238.45 L456.25,238.70 L456.50,238.65 L456.75,238.55 L457.00,238.29 L457.25,238.01 L457.50,237.70 L457.75,236.94 L458.00,236.15 L458.25,235.24 L458.50,233.99 L458.75,231.92 L459.00,229.63 L459.25,226.72 L459.50,223.19 L459.75,218.90 L460.00,213.66 L460.25,207.48 L460.50,200.31 L460.75,192.14 L461.00,182.98 L461.25,172.92 L461.50,162.06 L461.75,150.59 L462.00,138.72 L462.25,126.74 L462.50,114.95 L462.75,103.69 L463.00,93.31 L463.25,84.17 L463.50,76.57 L463.75,70.80 L464.00,67.07 L464.25,65.52 L464.50,66.01 L464.75,68.11 L465.00,71.74 L465.25,76.82 L465.50,83.12 L465.75,90.33 L466.00,98.29 L466.25,106.85 L466.50,115.82 L466.75,125.02 L467.00,134.30 L467.25,143.49 L467.50,152.45 L467.75,161.06 L468.00,169.22 L468.25,176.85 L468.50,183.91 L468.75,190.35 L469.00,196.18 L469.25,201.39 L469.50,206.00 L469.75,210.05 L470.00,213.57 L470.25,216.62 L470.50,219.23 L470.75,221.48 L471.00,223.45 L471.25,225.11 L471.50,226.61 L471.75,227.56 L472.00,228.37 L472.25,229.51 L472.50,230.17 L472.75,230.80 L473.00,230.98 L473.25,231.99 L473.50,232.30 L473.75,232.79 L474.00,233.23 L474.25,233.67 L474.50,234.12 L474.75,234.35 L475.00,234.77 L475.25,234.89 L475.50,235.16 L475.75,235.38 L476.00,235.62 L476.25,235.70 L476.50,235.89 L476.75,236.15 L477.00,236.37 L477.25,236.44 L477.50,236.74 L477.75,237.05 L478.00,237.15 L478.25,237.40 L478.50,237.55 L478.75,237.75 L479.00,237.77 L479.25,237.82 L479.50,238.00 L479.75,238.07 L480.00,238.11 L480.25,238.23 L480.50,238.37 L480.75,238.38 L481.00,238.47 L481.25,238.56 L481.50,238.71 L481.75,238.81 L482.00,238.95 L482.25,239.12 L482.50,239.21 L482.75,239.25 L483.00,239.27 L483.25,239.32 L483.50,239.33 L483.75,239.40 L484.00,239.38 L484.25,239.37 L484.50,239.45 L484.75,239.48 L485.00,239.54 L485.25,239.54 L485.50,239.66 L485.75,239.80 L486.00,239.82 L486.25,239.89 L486.50,239.93 L486.75,240.00 L487.00,240.03 L487.25,240.02 L487.50,240.04 L487.75,240.05 L488.00,240.10 L488.25,240.11 L488.50,240.13 L488.75,240.20 L489.00,240.25 L489.25,240.31 L489.50,240.32 L489.75,240.35 L490.00,240.36 L490.25,240.38 L490.50,240.40 L490.75,240.39 L491.00,240.40 L491.25,240.40 L491.50,240.42 L491.75,240.43 L492.00,240.43 L492.25,240.45 L492.50,240.49 L492.75,240.50 L493.00,240.52 L493.25,240.51 L493.50,240.53 L493.75,240.55 L494.00,240.56 L494.25,240.59 L494.50,240.60 L494.75,240.63 L495.00,240.64 L495.25,240.65 L495.50,240.67 L495.75,240.67 L496.00,240.67 L496.25,240.68 L496.50,240.68 L496.75,240.68 L497.00,240.69 L497.25,240.69 L497.50,240.71 L497.75,240.72 L498.00,240.73 L498.25,240.74 L498.50,240.74 L498.75,240.74 L499.00,240.74 L499.25,240.74 L499.50,240.74 L499.75,240.75 L500.00,240.77 L500.25,240.77 L500.50,240.78 L500.75,240.78 L501.00,240.78 L501.25,240.78 L501.50,240.78 L501.75,240.79 L502.00,240.79 L502.25,240.79 L502.50,240.80 L502.75,240.80 L503.00,240.80 L503.25,240.80 L503.50,240.81 L503.75,240.81 L504.00,240.82 L504.25,240.82 L504.50,240.82 L504.75,240.81 L505.00,240.81 L505.25,240.80 L505.50,240.80 L505.75,240.78 L506.00,240.77 L506.25,240.74 L506.50,240.72 L506.75,240.70 L507.00,240.66 L507.25,240.62 L507.50,240.59 L507.75,240.53 L508.00,240.46 L508.25,240.36 L508.50,240.28 L508.75,240.14 L509.00,239.98 L509.25,239.85 L509.50,239.62 L509.75,239.37 L510.00,239.09 L510.25,238.77 L510.50,238.31 L510.75,237.81 L511.00,237.44 L511.25,236.92 L511.50,236.10 L511.75,235.55 L512.00,234.72 L512.25,233.86 L512.50,232.63 L512.75,231.41 L513.00,230.27 L513.25,228.61 L513.50,227.30 L513.75,225.58 L514.00,223.75 L514.25,221.77 L514.50,219.52 L514.75,217.04 L515.00,214.36 L515.25,211.47 L515.50,208.37 L515.75,205.05 L516.00,201.51 L516.25,197.76 L516.50,193.79 L516.75,189.62 L517.00,185.25 L517.25,180.69 L517.50,175.96 L517.75,171.07 L518.00,166.05 L518.25,160.92 L518.50,155.69 L518.75,150.41 L519.00,145.09 L519.25,139.77 L519.50,134.49 L519.75,129.27 L520.00,124.16 L520.25,119.20 L520.50,114.41 L520.75,109.84 L521.00,105.52 L521.25,101.49 L521.50,97.79 L521.75,94.44 L522.00,91.47 L522.25,88.91 L522.50,86.79 L522.75,85.11 L523.00,83.91 L523.25,83.18 L523.50,82.94 L523.75,83.20 L524.00,84.00 L524.25,85.32 L524.50,87.15 L524.75,89.48 L525.00,92.27 L525.25,95.50 L525.50,99.14 L525.75,103.16 L526.00,107.51 L526.25,112.16 L526.50,117.08 L526.75,122.20 L527.00,127.50 L527.25,132.92 L527.50,138.44 L527.75,144.00 L528.00,149.57 L528.25,155.11 L528.50,160.59 L528.75,165.90 L529.00,170.95 L529.25,175.75 L529.50,180.28 L529.75,184.55 L530.00,188.55 L530.25,192.29 L530.50,195.77 L530.75,199.00 L531.00,201.98 L531.25,204.73 L531.50,207.25 L531.75,209.56 L532.00,211.67 L532.25,213.59 L532.50,215.34 L532.75,216.92 L533.00,218.36 L533.25,219.66 L533.50,220.83 L533.75,221.89 L534.00,222.77 L534.25,223.61 L534.50,224.44 L534.75,225.23 L535.00,225.86 L535.25,226.50 L535.50,227.16 L535.75,227.70 L536.00,228.09 L536.25,228.55 L536.50,228.76 L536.75,228.95 L537.00,229.49 L537.25,230.10 L537.50,230.52 L537.75,230.63 L538.00,230.94 L538.25,231.38 L538.50,231.82 L538.75,231.76 L539.00,231.84 L539.25,232.04 L539.50,232.59 L539.75,232.61 L540.00,232.78 L540.25,233.17 L540.50,233.43 L540.75,233.81 L541.00,233.79 L541.25,233.79 L541.50,233.88 L541.75,233.64 L542.00,233.83 L542.25,233.97 L542.50,234.04 L542.75,234.64 L543.00,234.77 L543.25,235.20 L543.50,235.22 L543.75,235.16 L544.00,235.27 L544.25,235.21 L544.50,235.08 L544.75,235.15 L545.00,235.11 L545.25,235.35 L545.50,235.46 L545.75,235.57 L546.00,235.66 L546.25,235.84 L546.50,236.06 L546.75,236.26 L547.00,236.45 L547.25,236.50 L547.50,236.73 L547.75,236.66 L548.00,236.67 L548.25,236.59 L548.50,236.61 L548.75,236.56 L549.00,236.45 L549.25,236.45 L549.50,236.55 L549.75,236.47 L550.00,236.59 L550.25,236.65 L550.50,236.88 L550.75,236.84 L551.00,236.95 L551.25,237.13 L551.50,237.05 L551.75,237.17 L552.00,237.20 L552.25,237.54 L552.50,237.59 L552.75,237.51 L553.00,237.63 L553.25,237.55 L553.50,237.49 L553.75,237.45 L554.00,237.56 L554.25,237.74 L554.50,237.75 L554.75,237.91 L555.00,237.98 L555.25,237.96 L555.50,237.94 L555.75,238.05 L556.00,238.14 L556.25,238.13 L556.50,238.22 L556.75,238.34 L557.00,238.40 L557.25,238.37 L557.50,238.39 L557.75,238.45 L558.00,238.51 L558.25,238.48 L558.50,238.49 L558.75,238.55 L559.00,238.67 L559.25,238.74 L559.50,238.73 L559.75,238.75 L560.00,238.72 L560.25,238.67 L560.50,238.56 L560.75,238.50 L561.00,238.31 L561.25,238.03 L561.50,237.59 L561.75,236.90 L562.00,235.79 L562.25,233.95 L562.50,231.65 L562.75,227.97 L563.00,222.67 L563.25,215.68 L563.50,206.83 L563.75,195.88 L564.00,182.87 L564.25,168.06 L564.50,151.94 L564.75,135.27 L565.00,119.03 L565.25,104.30 L565.50,92.19 L565.75,83.68 L566.00,79.48 L566.25,79.75 L566.50,83.51 L566.75,90.41 L567.00,99.88 L567.25,111.37 L567.50,124.23 L567.75,137.82 L568.00,151.50 L568.25,164.72 L568.50,177.03 L568.75,188.12 L569.00,197.80 L569.25,206.02 L569.50,212.80 L569.75,218.26 L570.00,222.54 L570.25,225.57 L570.50,228.06 L570.75,229.68 L571.00,231.23 L571.25,232.23 L571.50,232.57 L571.75,233.51 L572.00,234.13 L572.25,234.76 L572.50,235.10 L572.75,235.24 L573.00,235.62 L573.25,235.96 L573.50,235.92 L573.75,235.87 L574.00,235.82 L574.25,236.24 L574.50,236.39 L574.75,236.29 L575.00,236.66 L575.25,236.97 L575.50,237.21 L575.75,237.35 L576.00,237.46 L576.25,237.60 L576.50,237.60 L576.75,237.56 L577.00,237.65 L577.25,237.64 L577.50,237.77 L577.75,237.96 L578.00,238.14 L578.25,238.34 L578.50,238.42 L578.75,238.50 L579.00,238.53 L579.25,238.52 L579.50,238.44 L579.75,238.40 L580.00,238.42 L580.25,238.30 L580.50,237.97 L580.75,237.58 L581.00,237.15 L581.25,236.42 L581.50,235.26 L581.75,233.87 L582.00,232.39 L582.25,230.20 L582.50,227.26 L582.75,223.90 L583.00,219.74 L583.25,214.67 L583.50,208.67 L583.75,201.69 L584.00,193.71 L584.25,184.73 L584.50,174.83 L584.75,164.10 L585.00,152.72 L585.25,140.89 L585.50,128.89 L585.75,117.01 L586.00,105.60 L586.25,95.00 L586.50,85.57 L586.75,77.63 L587.00,71.46 L587.25,67.30 L587.50,65.31 L587.75,65.44 L588.00,67.22 L588.25,70.57 L588.50,75.37 L588.75,81.47 L589.00,88.52 L589.25,96.37 L589.50,104.83 L589.75,113.75 L590.00,122.94 L590.25,132.23 L590.50,141.47 L590.75,150.50 L591.00,159.21 L591.25,167.48 L591.50,175.24 L591.75,182.43 L592.00,189.02 L592.25,194.98 L592.50,200.32 L592.75,205.06 L593.00,209.22 L593.25,212.85 L593.50,216.00 L593.75,218.70 L594.00,221.01 L594.25,222.91 L594.50,224.53 L594.75,225.87 L595.00,227.12 L595.25,228.16 L595.50,229.09 L595.75,229.76 L596.00,230.50 L596.25,231.15 L596.50,231.59 L596.75,232.29 L597.00,232.50 L597.25,232.96 L597.50,233.23 L597.75,233.39 L598.00,233.73 L598.25,233.92 L598.50,234.20 L598.75,234.24 L599.00,234.51 L599.25,234.74 L599.50,234.94 L599.75,235.26 L600.00,235.54 L600.25,235.87 L600.50,236.07 L600.75,236.36 L601.00,236.64 L601.25,236.93 L601.50,237.11 L601.75,237.45 L602.00,237.61 L602.25,237.82 L602.50,237.87 L602.75,237.81 L603.00,238.05 L603.25,238.10 L603.50,238.22 L603.75,238.23 L604.00,238.34 L604.25,238.52 L604.50,238.57 L604.75,238.58 L605.00,238.70 L605.25,238.84 L605.50,238.91 L605.75,239.00 L606.00,239.08 L606.25,239.29 L606.50,239.35 L606.75,239.39 L607.00,239.45 L607.25,239.53 L607.50,239.52 L607.75,239.55 L608.00,239.61 L608.25,239.63 L608.50,239.67 L608.75,239.68 L609.00,239.72 L609.25,239.74 L609.50,239.75 L609.75,239.84 L610.00,239.89 L610.25,239.93 L610.50,239.97 L610.75,240.02 L611.00,240.06 L611.25,240.12 L611.50,240.17 L611.75,240.19 L612.00,240.24 L612.25,240.26 L612.50,240.27 L612.75,240.27 L613.00,240.27 L613.25,240.30 L613.50,240.34 L613.75,240.35 L614.00,240.36 L614.25,240.36 L614.50,240.38 L614.75,240.39 L615.00,240.39 L615.25,240.40 L615.50,240.42 L615.75,240.45 L616.00,240.47 L616.25,240.48 L616.50,240.51 L616.75,240.54 L617.00,240.56 L617.25,240.59 L617.50,240.60 L617.75,240.61 L618.00,240.63 L618.25,240.63 L618.50,240.65 L618.75,240.63 L619.00,240.65 L619.25,240.66 L619.50,240.65 L619.75,240.67 L620.00,240.68 L620.25,240.69 L620.50,240.69 L620.75,240.71 L621.00,240.72 L621.25,240.72 L621.50,240.71 L621.75,240.72 L622.00,240.73 L622.25,240.72 L622.50,240.71 L622.75,240.73 L623.00,240.74 L623.25,240.74 L623.50,240.73 L623.75,240.74 L624.00,240.75 L624.25,240.75 L624.50,240.75 L624.75,240.76 L625.00,240.77 L625.25,240.77 L625.50,240.78 L625.75,240.79 L626.00,240.80 L626.25,240.80 L626.50,240.80 L626.75,240.80 L627.00,240.81 L627.25,240.81 L627.50,240.81 L627.75,240.81 L628.00,240.81 L628.25,240.81 L628.50,240.80 L628.75,240.80 L629.00,240.79 L629.25,240.79 L629.50,240.78 L629.75,240.77 L630.00,240.76 L630.25,240.75 L630.50,240.71 L630.75,240.67 L631.00,240.64 L631.25,240.61 L631.50,240.57 L631.75,240.50 L632.00,240.46 L632.25,240.39 L632.50,240.30 L632.75,240.12 L633.00,239.96 L633.25,239.80 L633.50,239.53 L633.75,239.28 L634.00,238.97 L634.25,238.74 L634.50,238.33 L634.75,237.89 L635.00,237.50 L635.25,237.01 L635.50,236.50 L635.75,235.84 L636.00,235.10 L636.25,233.97 L636.50,232.94 L636.75,231.76 L637.00,230.28 L637.25,228.78 L637.50,227.50 L637.75,225.90 L638.00,224.03 L638.25,221.82 L638.50,219.48 L638.75,217.00 L639.00,214.32 L639.25,211.42 L639.50,208.31 L639.75,204.98 L640.00,201.44 L640.25,197.68 L640.50,193.70 L640.75,189.52 L641.00,185.14 L641.25,180.58 L641.50,175.84 L641.75,170.94 L642.00,165.91 L642.25,160.77 L642.50,155.53 L642.75,150.24 L643.00,144.91 L643.25,139.58 L643.50,134.29 L643.75,129.06 L644.00,123.94 L644.25,118.97 L644.50,114.17 L644.75,109.59 L645.00,105.27 L645.25,101.23 L645.50,97.52 L645.75,94.16 L646.00,91.19 L646.25,88.62 L646.50,86.49 L646.75,84.82 L647.00,83.61 L647.25,82.88 L647.50,82.64 L647.75,82.90 L648.00,83.70 L648.25,85.03 L648.50,86.86 L648.75,89.19 L649.00,91.98 L649.25,95.22 L649.50,98.87 L649.75,102.89 L650.00,107.26 L650.25,111.92 L650.50,116.84 L650.75,121.98 L651.00,127.28 L651.25,132.72 L651.50,138.24 L651.75,143.82 L652.00,149.40 L652.25,154.95 L652.50,160.43 L652.75,165.75 L653.00,170.82 L653.25,175.63 L653.50,180.17 L653.75,184.45 L654.00,188.46 L654.25,192.20 L654.50,195.69 L654.75,198.92 L655.00,201.91 L655.25,204.67 L655.50,207.20 L655.75,209.51 L656.00,211.63 L656.25,213.56 L656.50,215.31 L656.75,216.89 L657.00,218.33 L657.25,219.63 L657.50,220.81 L657.75,221.86 L658.00,222.76 L658.25,223.60 L658.50,224.47 L658.75,225.21 L659.00,225.88 L659.25,226.52 L659.50,227.21 L659.75,227.48 L660.00,227.86 L660.25,228.23 L660.50,228.59 L660.75,228.89 L661.00,228.97 L661.25,229.46 L661.50,229.49 L661.75,229.91 L662.00,230.15 L662.25,230.48 L662.50,230.82 L662.75,231.30 L663.00,231.80 L663.25,231.98 L663.50,232.23 L663.75,232.72 L664.00,233.19 L664.25,233.27 L664.50,233.19 L664.75,233.33 L665.00,233.44 L665.25,233.42 L665.50,233.39 L665.75,233.33 L666.00,233.57 L666.25,233.48 L666.50,233.80 L666.75,233.91 L667.00,234.33 L667.25,234.63 L667.50,234.78 L667.75,235.23 L668.00,235.27 L668.25,235.51 L668.50,235.39 L668.75,235.69 L669.00,235.79 L669.25,235.68 L669.50,235.79 L669.75,235.72 L670.00,235.92 L670.25,235.94 L670.50,235.85 L670.75,235.97 L671.00,235.99 L671.25,236.12 L671.50,236.02 L671.75,236.02 L672.00,236.16 L672.25,236.26 L672.50,236.48 L672.75,236.43 L673.00,236.58 L673.25,236.55 L673.50,236.78 L673.75,236.98 L674.00,237.01 L674.25,237.13 L674.50,237.11 L674.75,237.19 L675.00,237.15 L675.25,237.08 L675.50,237.12 L675.75,237.19 L676.00,237.30 L676.25,237.41 L676.50,237.43 L676.75,237.60 L677.00,237.68 L677.25,237.69 L677.50,237.80 L677.75,237.77 L678.00,237.82 L678.25,237.79 L678.50,237.69 L678.75,237.74 L679.00,237.78 L679.25,237.87 L679.50,237.92 L679.75,238.02 L680.00,238.08 L680.25,238.14 L680.50,238.24 L680.75,238.29 L681.00,238.26 L681.25,238.20 L681.50,238.19 L681.75,238.21 L682.00,238.14 L682.25,238.03 L682.50,238.02 L682.75,238.11 L683.00,238.20 L683.25,238.27 L683.50,238.32 L683.75,238.48 L684.00,238.51 L684.25,238.41 L684.50,238.29 L684.75,237.76 L685.00,237.02 L685.25,235.83 L685.50,234.44 L685.75,231.81 L686.00,228.44 L686.25,223.51 L686.50,216.73 L686.75,208.13 L687.00,197.41 L687.25,184.57 L687.50,169.81 L687.75,153.60 L688.00,136.66 L688.25,119.94 L688.50,104.54 L688.75,91.58 L689.00,82.11 L689.25,76.91 L689.50,76.34 L689.75,79.50 L690.00,85.93 L690.25,95.10 L690.50,106.45 L690.75,119.34 L691.00,133.10 L691.25,147.07 L691.50,160.68 L691.75,173.45 L692.00,185.02 L692.25,195.20 L692.50,203.88 L692.75,211.08 L693.00,216.90 L693.25,221.51 L693.50,225.14 L693.75,227.72 L694.00,229.87 L694.25,231.46 L694.50,232.28 L694.75,232.86 L695.00,233.59 L695.25,234.34 L695.50,234.65 L695.75,234.78 L696.00,234.78 L696.25,235.17 L696.50,235.28 L696.75,235.48 L697.00,235.61 L697.25,235.79 L697.50,236.22 L697.75,236.41 L698.00,236.67 L698.25,236.71 L698.50,236.84 L698.75,237.00 L699.00,237.11 L699.25,237.23 L699.50,237.20 L699.75,237.44 L700.00,237.64 L700.25,237.82 L700.50,237.97 L700.75,237.87 L701.00,238.03 L701.25,238.06 L701.50,238.01 L701.75,238.07 L702.00,238.21 L702.25,238.44 L702.50,238.51 L702.75,238.64 L703.00,238.74 L703.25,238.72 L703.50,238.51 L703.75,238.35 L704.00,238.16 L704.25,237.84 L704.50,237.47 L704.75,237.05 L705.00,236.48 L705.25,235.83 L705.50,234.65 L705.75,232.63 L706.00,230.20 L706.25,226.95 L706.50,223.29 L706.75,218.83 L707.00,213.58 L707.25,207.39 L707.50,200.21 L707.75,192.02 L708.00,182.85 L708.25,172.77 L708.50,161.90 L708.75,150.40 L709.00,138.52 L709.25,126.51 L709.50,114.70 L709.75,103.42 L710.00,93.03 L710.25,83.87 L710.50,76.26 L710.75,70.48 L711.00,66.74 L711.25,65.19 L711.50,65.68 L711.75,67.78 L712.00,71.42 L712.25,76.51 L712.50,82.82 L712.75,90.04 L713.00,98.02 L713.25,106.59 L713.50,115.58 L713.75,124.80 L714.00,134.09 L714.25,143.30 L714.50,152.28 L714.75,160.90 L715.00,169.08 L715.25,176.73 L715.50,183.80 L715.75,190.26 L716.00,196.09 L716.25,201.31 L716.50,205.93 L716.75,209.99 L717.00,213.52 L717.25,216.57 L717.50,219.19 L717.75,221.44 L718.00,223.36 L718.25,224.95 L718.50,226.41 L718.75,227.43 L719.00,228.46 L719.25,229.19 L719.50,230.10 L719.75,230.65 L720.00,231.01 L720.25,231.88 L720.50,232.77 L720.75,232.94 L721.00,233.31 L721.25,233.55 L721.50,234.03 L721.75,234.30 L722.00,234.26 L722.25,234.88 L722.50,235.02 L722.75,235.39 L723.00,235.42 L723.25,235.51 L723.50,235.81 L723.75,236.03 L724.00,236.10 L724.25,236.32 L724.50,236.58 L724.75,236.97 L725.00,237.16 L725.25,237.18 L725.50,237.44 L725.75,237.51 L726.00,237.58 L726.25,237.50 L726.50,237.66 L726.75,237.91 L727.00,238.14 L727.25,238.30 L727.50,238.55 L727.75,238.70 L728.00,238.86 L728.25,238.82 L728.50,238.80 L728.75,238.93 L729.00,238.93 L729.25,239.01 L729.50,238.98 L729.75,239.10 L730.00,239.15 L730.25,239.15 L730.50,239.24 L730.75,239.31 L731.00,239.43 L731.25,239.47 L731.50,239.57 L731.75,239.64 L732.00,239.71 L732.25,239.74 L732.50,239.75 L732.75,239.83 L733.00,239.84 L733.25,239.88 L733.50,239.88 L733.75,239.94 L734.00,239.98 L734.25,240.00 L734.50,240.06 L734.75,240.08 L735.00,240.11 L735.25,240.16 L735.50,240.18 L735.75,240.18 L736.00,240.17 L736.25,240.19 L736.50,240.21 L736.75,240.22 L737.00,240.23 L737.25,240.26 L737.50,240.30 L737.75,240.32 L738.00,240.36 L738.25,240.36 L738.50,240.41 L738.75,240.42 L739.00,240.42 L739.25,240.45 L739.50,240.45 L739.75,240.47 L740.00,240.48 L740.25,240.50 L740.50,240.52 L740.75,240.54 L741.00,240.56 L741.25,240.58 L741.50,240.58 L741.75,240.59 L742.00,240.60 L742.25,240.60 L742.50,240.60 L742.75,240.60 L743.00,240.62 L743.25,240.63 L743.50,240.64 L743.75,240.66 L744.00,240.65 L744.25,240.67 L744.50,240.68 L744.75,240.69 L745.00,240.69 L745.25,240.69 L745.50,240.71 L745.75,240.72 L746.00,240.72 L746.25,240.73 L746.50,240.73 L746.75,240.74 L747.00,240.74 L747.25,240.74 L747.50,240.75 L747.75,240.75 L748.00,240.76 L748.25,240.76 L748.50,240.78 L748.75,240.78 L749.00,240.78 L749.25,240.79 L749.50,240.80 L749.75,240.82 L750.00,240.81 L750.25,240.82 L750.50,240.82 L750.75,240.82 L751.00,240.82 L751.25,240.82 L751.50,240.82 L751.75,240.82 L752.00,240.81 L752.25,240.80 L752.50,240.79 L752.75,240.79 L753.00,240.78 L753.25,240.78 L753.50,240.77 L753.75,240.75 L754.00,240.73 L754.25,240.70 L754.50,240.68 L754.75,240.63 L755.00,240.56 L755.25,240.49 L755.50,240.42 L755.75,240.32 L756.00,240.19 L756.25,240.07 L756.50,239.90 L756.75,239.72 L757.00,239.52 L757.25,239.23 L757.50,239.01 L757.75,238.69 L758.00,238.48 L758.25,238.10 L758.50,237.52 L758.75,237.13 L759.00,236.22 L759.25,235.32 L759.50,234.21 L759.75,233.15 L760.00,232.49 L760.25,231.39 L760.50,230.29 L760.75,229.06 L761.00,227.61 L761.25,225.85 L761.50,223.79 L761.75,221.74 L762.00,219.52 L762.25,217.04 L762.50,214.36 L762.75,211.47 L763.00,208.37 L763.25,205.05 L763.50,201.51 L763.75,197.76 L764.00,193.79 L764.25,189.62 L764.50,185.25 L764.75,180.69 L765.00,175.96 L765.25,171.07 L765.50,166.05 L765.75,160.92 L766.00,155.69 L766.25,150.41 L766.50,145.09 L766.75,139.77 L767.00,134.49 L767.25,129.27 L767.50,124.16 L767.75,119.20 L768.00,114.41 L768.25,109.84 L768.50,105.52 L768.75,101.49 L769.00,97.79 L769.25,94.44 L769.50,91.47 L769.75,88.91" fill="none" stroke="#f2836a" stroke-width="0.95" clip-path="url(#ct)"/>
<path d="M48.5,247.5 L48.5,48.5 L769.5,48.5 L769.5,247.5 Z" fill="none" stroke="#626262" stroke-width="1.15"/>
<path d="M46.5,246.46 H48.5 M46.5,244.18 H48.5 M45.5,241.90 H48.5 M46.5,239.62 H48.5 M46.5,237.34 H48.5 M46.5,235.06 H48.5 M46.5,232.78 H48.5 M45.5,230.50 H48.5 M46.5,228.22 H48.5 M46.5,225.94 H48.5 M46.5,223.66 H48.5 M46.5,221.38 H48.5 M45.5,219.10 H48.5 M46.5,216.82 H48.5 M46.5,214.54 H48.5 M46.5,212.26 H48.5 M46.5,209.98 H48.5 M45.5,207.70 H48.5 M46.5,205.42 H48.5 M46.5,203.14 H48.5 M46.5,200.86 H48.5 M46.5,198.58 H48.5 M45.5,196.30 H48.5 M46.5,194.02 H48.5 M46.5,191.74 H48.5 M46.5,189.46 H48.5 M46.5,187.18 H48.5 M45.5,184.90 H48.5 M46.5,182.62 H48.5 M46.5,180.34 H48.5 M46.5,178.06 H48.5 M46.5,175.78 H48.5 M45.5,173.50 H48.5 M46.5,171.22 H48.5 M46.5,168.94 H48.5 M46.5,166.66 H48.5 M46.5,164.38 H48.5 M45.5,162.10 H48.5 M46.5,159.82 H48.5 M46.5,157.54 H48.5 M46.5,155.26 H48.5 M46.5,152.98 H48.5 M45.5,150.70 H48.5 M46.5,148.42 H48.5 M46.5,146.14 H48.5 M46.5,143.86 H48.5 M46.5,141.58 H48.5 M45.5,139.30 H48.5 M46.5,137.02 H48.5 M46.5,134.74 H48.5 M46.5,132.46 H48.5 M46.5,130.18 H48.5 M45.5,127.90 H48.5 M46.5,125.62 H48.5 M46.5,123.34 H48.5 M46.5,121.06 H48.5 M46.5,118.78 H48.5 M45.5,116.50 H48.5 M46.5,114.22 H48.5 M46.5,111.94 H48.5 M46.5,109.66 H48.5 M46.5,107.38 H48.5 M45.5,105.10 H48.5 M46.5,102.82 H48.5 M46.5,100.54 H48.5 M46.5,98.26 H48.5 M46.5,95.98 H48.5 M45.5,93.70 H48.5 M46.5,91.42 H48.5 M46.5,89.14 H48.5 M46.5,86.86 H48.5 M46.5,84.58 H48.5 M45.5,82.30 H48.5 M46.5,80.02 H48.5 M46.5,77.74 H48.5 M46.5,75.46 H48.5 M46.5,73.18 H48.5 M45.5,70.90 H48.5 M46.5,68.62 H48.5 M46.5,66.34 H48.5 M46.5,64.06 H48.5 M46.5,61.78 H48.5 M45.5,59.50 H48.5 M46.5,57.22 H48.5 M46.5,54.94 H48.5 M46.5,52.66 H48.5 M769.5,247.50 h3 M769.5,245.29 h2 M769.5,243.08 h2 M769.5,240.87 h2 M769.5,238.66 h2 M769.5,236.44 h3 M769.5,234.23 h2 M769.5,232.02 h2 M769.5,229.81 h2 M769.5,227.60 h2 M769.5,225.39 h3 M769.5,223.18 h2 M769.5,220.97 h2 M769.5,218.76 h2 M769.5,216.54 h2 M769.5,214.33 h3 M769.5,212.12 h2 M769.5,209.91 h2 M769.5,207.70 h2 M769.5,205.49 h2 M769.5,203.28 h3 M769.5,201.07 h2 M769.5,198.86 h2 M769.5,196.64 h2 M769.5,194.43 h2 M769.5,192.22 h3 M769.5,190.01 h2 M769.5,187.80 h2 M769.5,185.59 h2 M769.5,183.38 h2 M769.5,181.17 h3 M769.5,178.96 h2 M769.5,176.74 h2 M769.5,174.53 h2 M769.5,172.32 h2 M769.5,170.11 h3 M769.5,167.90 h2 M769.5,165.69 h2 M769.5,163.48 h2 M769.5,161.27 h2 M769.5,159.06 h3 M769.5,156.84 h2 M769.5,154.63 h2 M769.5,152.42 h2 M769.5,150.21 h2 M769.5,148.00 h3 M769.5,145.79 h2 M769.5,143.58 h2 M769.5,141.37 h2 M769.5,139.16 h2 M769.5,136.94 h3 M769.5,134.73 h2 M769.5,132.52 h2 M769.5,130.31 h2 M769.5,128.10 h2 M769.5,125.89 h3 M769.5,123.68 h2 M769.5,121.47 h2 M769.5,119.26 h2 M769.5,117.04 h2 M769.5,114.83 h3 M769.5,112.62 h2 M769.5,110.41 h2 M769.5,108.20 h2 M769.5,105.99 h2 M769.5,103.78 h3 M769.5,101.57 h2 M769.5,99.36 h2 M769.5,97.14 h2 M769.5,94.93 h2 M769.5,92.72 h3 M769.5,90.51 h2 M769.5,88.30 h2 M769.5,86.09 h2 M769.5,83.88 h2 M769.5,81.67 h3 M769.5,79.46 h2 M769.5,77.24 h2 M769.5,75.03 h2 M769.5,72.82 h2 M769.5,70.61 h3 M769.5,68.40 h2 M769.5,66.19 h2 M769.5,63.98 h2 M769.5,61.77 h2 M769.5,59.56 h3 M769.5,57.34 h2 M769.5,55.13 h2 M769.5,52.92 h2 M769.5,50.71 h2 M769.5,48.50 h3 M48.50,247.5 v3 M54.31,247.5 v2 M60.13,247.5 v2 M65.94,247.5 v2 M71.76,247.5 v3 M77.57,247.5 v2 M83.39,247.5 v2 M89.20,247.5 v2 M95.02,247.5 v3 M100.83,247.5 v2 M106.65,247.5 v2 M112.46,247.5 v2 M118.27,247.5 v3 M124.09,247.5 v2 M129.90,247.5 v2 M135.72,247.5 v2 M141.53,247.5 v3 M147.35,247.5 v2 M153.16,247.5 v2 M158.98,247.5 v2 M164.79,247.5 v3 M170.60,247.5 v2 M176.42,247.5 v2 M182.23,247.5 v2 M188.05,247.5 v3 M193.86,247.5 v2 M199.68,247.5 v2 M205.49,247.5 v2 M211.31,247.5 v3 M217.12,247.5 v2 M222.94,247.5 v2 M228.75,247.5 v2 M234.56,247.5 v3 M240.38,247.5 v2 M246.19,247.5 v2 M252.01,247.5 v2 M257.82,247.5 v3 M263.64,247.5 v2 M269.45,247.5 v2 M275.27,247.5 v2 M281.08,247.5 v3 M286.90,247.5 v2 M292.71,247.5 v2 M298.52,247.5 v2 M304.34,247.5 v3 M310.15,247.5 v2 M315.97,247.5 v2 M321.78,247.5 v2 M327.60,247.5 v3 M333.41,247.5 v2 M339.23,247.5 v2 M345.04,247.5 v2 M350.85,247.5 v3 M356.67,247.5 v2 M362.48,247.5 v2 M368.30,247.5 v2 M374.11,247.5 v3 M379.93,247.5 v2 M385.74,247.5 v2 M391.56,247.5 v2 M397.37,247.5 v3 M403.19,247.5 v2 M409.00,247.5 v2 M414.81,247.5 v2 M420.63,247.5 v3 M426.44,247.5 v2 M432.26,247.5 v2 M438.07,247.5 v2 M443.89,247.5 v3 M449.70,247.5 v2 M455.52,247.5 v2 M461.33,247.5 v2 M467.15,247.5 v3 M472.96,247.5 v2 M478.77,247.5 v2 M484.59,247.5 v2 M490.40,247.5 v3 M496.22,247.5 v2 M502.03,247.5 v2 M507.85,247.5 v2 M513.66,247.5 v3 M519.48,247.5 v2 M525.29,247.5 v2 M531.10,247.5 v2 M536.92,247.5 v3 M542.73,247.5 v2 M548.55,247.5 v2 M554.36,247.5 v2 M560.18,247.5 v3 M565.99,247.5 v2 M571.81,247.5 v2 M577.62,247.5 v2 M583.44,247.5 v3 M589.25,247.5 v2 M595.06,247.5 v2 M600.88,247.5 v2 M606.69,247.5 v3 M612.51,247.5 v2 M618.32,247.5 v2 M624.14,247.5 v2 M629.95,247.5 v3 M635.77,247.5 v2 M641.58,247.5 v2 M647.40,247.5 v2 M653.21,247.5 v3 M659.02,247.5 v2 M664.84,247.5 v2 M670.65,247.5 v2 M676.47,247.5 v3 M682.28,247.5 v2 M688.10,247.5 v2 M693.91,247.5 v2 M699.73,247.5 v3 M705.54,247.5 v2 M711.35,247.5 v2 M717.17,247.5 v2 M722.98,247.5 v3 M728.80,247.5 v2 M734.61,247.5 v2 M740.43,247.5 v2 M746.24,247.5 v3 M752.06,247.5 v2 M757.87,247.5 v2 M763.69,247.5 v2 M769.50,247.5 v3" stroke="#a0a0a0" stroke-width="0.5" fill="none" opacity="0.6"/>
<text x="45.20" y="244.20" font-size="6.5" fill="#34324a" text-anchor="end" textLength="10.00" lengthAdjust="spacingAndGlyphs" >0,00</text>
<text x="45.20" y="232.80" font-size="6.5" fill="#34324a" text-anchor="end" textLength="10.00" lengthAdjust="spacingAndGlyphs" >0,20</text>
<text x="45.20" y="221.40" font-size="6.5" fill="#34324a" text-anchor="end" textLength="10.00" lengthAdjust="spacingAndGlyphs" >0,40</text>
<text x="45.20" y="210.00" font-size="6.5" fill="#34324a" text-anchor="end" textLength="10.00" lengthAdjust="spacingAndGlyphs" >0,60</text>
<text x="45.20" y="198.60" font-size="6.5" fill="#34324a" text-anchor="end" textLength="10.00" lengthAdjust="spacingAndGlyphs" >0,80</text>
<text x="45.20" y="187.20" font-size="6.5" fill="#34324a" text-anchor="end" textLength="10.00" lengthAdjust="spacingAndGlyphs" >1,00</text>
<text x="45.20" y="175.80" font-size="6.5" fill="#34324a" text-anchor="end" textLength="10.00" lengthAdjust="spacingAndGlyphs" >1,20</text>
<text x="45.20" y="164.40" font-size="6.5" fill="#34324a" text-anchor="end" textLength="10.00" lengthAdjust="spacingAndGlyphs" >1,40</text>
<text x="45.20" y="153.00" font-size="6.5" fill="#34324a" text-anchor="end" textLength="10.00" lengthAdjust="spacingAndGlyphs" >1,60</text>
<text x="45.20" y="141.60" font-size="6.5" fill="#34324a" text-anchor="end" textLength="10.00" lengthAdjust="spacingAndGlyphs" >1,80</text>
<text x="45.20" y="130.20" font-size="6.5" fill="#34324a" text-anchor="end" textLength="10.00" lengthAdjust="spacingAndGlyphs" >2,00</text>
<text x="45.20" y="118.80" font-size="6.5" fill="#34324a" text-anchor="end" textLength="10.00" lengthAdjust="spacingAndGlyphs" >2,20</text>
<text x="45.20" y="107.40" font-size="6.5" fill="#34324a" text-anchor="end" textLength="10.00" lengthAdjust="spacingAndGlyphs" >2,40</text>
<text x="45.20" y="96.00" font-size="6.5" fill="#34324a" text-anchor="end" textLength="10.00" lengthAdjust="spacingAndGlyphs" >2,60</text>
<text x="45.20" y="84.60" font-size="6.5" fill="#34324a" text-anchor="end" textLength="10.00" lengthAdjust="spacingAndGlyphs" >2,80</text>
<text x="45.20" y="73.20" font-size="6.5" fill="#34324a" text-anchor="end" textLength="10.00" lengthAdjust="spacingAndGlyphs" >3,00</text>
<text x="45.20" y="61.80" font-size="6.5" fill="#34324a" text-anchor="end" textLength="10.00" lengthAdjust="spacingAndGlyphs" >3,20</text>
<text x="48.50" y="256.40" font-size="6.5" fill="#34324a" text-anchor="middle" textLength="10.00" lengthAdjust="spacingAndGlyphs" >13,5</text>
<text x="71.76" y="256.40" font-size="6.5" fill="#34324a" text-anchor="middle" textLength="6.00" lengthAdjust="spacingAndGlyphs" >14</text>
<text x="95.02" y="256.40" font-size="6.5" fill="#34324a" text-anchor="middle" textLength="10.00" lengthAdjust="spacingAndGlyphs" >14,5</text>
<text x="118.27" y="256.40" font-size="6.5" fill="#34324a" text-anchor="middle" textLength="6.00" lengthAdjust="spacingAndGlyphs" >15</text>
<text x="141.53" y="256.40" font-size="6.5" fill="#34324a" text-anchor="middle" textLength="10.00" lengthAdjust="spacingAndGlyphs" >15,5</text>
<text x="164.79" y="256.40" font-size="6.5" fill="#34324a" text-anchor="middle" textLength="6.00" lengthAdjust="spacingAndGlyphs" >16</text>
<text x="188.05" y="256.40" font-size="6.5" fill="#34324a" text-anchor="middle" textLength="10.00" lengthAdjust="spacingAndGlyphs" >16,5</text>
<text x="211.31" y="256.40" font-size="6.5" fill="#34324a" text-anchor="middle" textLength="6.00" lengthAdjust="spacingAndGlyphs" >17</text>
<text x="234.56" y="256.40" font-size="6.5" fill="#34324a" text-anchor="middle" textLength="10.00" lengthAdjust="spacingAndGlyphs" >17,5</text>
<text x="257.82" y="256.40" font-size="6.5" fill="#34324a" text-anchor="middle" textLength="6.00" lengthAdjust="spacingAndGlyphs" >18</text>
<text x="281.08" y="256.40" font-size="6.5" fill="#34324a" text-anchor="middle" textLength="10.00" lengthAdjust="spacingAndGlyphs" >18,5</text>
<text x="304.34" y="256.40" font-size="6.5" fill="#34324a" text-anchor="middle" textLength="6.00" lengthAdjust="spacingAndGlyphs" >19</text>
<text x="327.60" y="256.40" font-size="6.5" fill="#34324a" text-anchor="middle" textLength="10.00" lengthAdjust="spacingAndGlyphs" >19,5</text>
<text x="350.85" y="256.40" font-size="6.5" fill="#34324a" text-anchor="middle" textLength="6.00" lengthAdjust="spacingAndGlyphs" >20</text>
<text x="374.11" y="256.40" font-size="6.5" fill="#34324a" text-anchor="middle" textLength="10.00" lengthAdjust="spacingAndGlyphs" >20,5</text>
<text x="397.37" y="256.40" font-size="6.5" fill="#34324a" text-anchor="middle" textLength="6.00" lengthAdjust="spacingAndGlyphs" >21</text>
<text x="420.63" y="256.40" font-size="6.5" fill="#34324a" text-anchor="middle" textLength="10.00" lengthAdjust="spacingAndGlyphs" >21,5</text>
<text x="443.89" y="256.40" font-size="6.5" fill="#34324a" text-anchor="middle" textLength="6.00" lengthAdjust="spacingAndGlyphs" >22</text>
<text x="467.15" y="256.40" font-size="6.5" fill="#34324a" text-anchor="middle" textLength="10.00" lengthAdjust="spacingAndGlyphs" >22,5</text>
<text x="490.40" y="256.40" font-size="6.5" fill="#34324a" text-anchor="middle" textLength="6.00" lengthAdjust="spacingAndGlyphs" >23</text>
<text x="513.66" y="256.40" font-size="6.5" fill="#34324a" text-anchor="middle" textLength="10.00" lengthAdjust="spacingAndGlyphs" >23,5</text>
<text x="536.92" y="256.40" font-size="6.5" fill="#34324a" text-anchor="middle" textLength="6.00" lengthAdjust="spacingAndGlyphs" >24</text>
<text x="560.18" y="256.40" font-size="6.5" fill="#34324a" text-anchor="middle" textLength="10.00" lengthAdjust="spacingAndGlyphs" >24,5</text>
<text x="583.44" y="256.40" font-size="6.5" fill="#34324a" text-anchor="middle" textLength="6.00" lengthAdjust="spacingAndGlyphs" >25</text>
<text x="606.69" y="256.40" font-size="6.5" fill="#34324a" text-anchor="middle" textLength="10.00" lengthAdjust="spacingAndGlyphs" >25,5</text>
<text x="629.95" y="256.40" font-size="6.5" fill="#34324a" text-anchor="middle" textLength="6.00" lengthAdjust="spacingAndGlyphs" >26</text>
<text x="653.21" y="256.40" font-size="6.5" fill="#34324a" text-anchor="middle" textLength="10.00" lengthAdjust="spacingAndGlyphs" >26,5</text>
<text x="676.47" y="256.40" font-size="6.5" fill="#34324a" text-anchor="middle" textLength="6.00" lengthAdjust="spacingAndGlyphs" >27</text>
<text x="699.73" y="256.40" font-size="6.5" fill="#34324a" text-anchor="middle" textLength="10.00" lengthAdjust="spacingAndGlyphs" >27,5</text>
<text x="722.98" y="256.40" font-size="6.5" fill="#34324a" text-anchor="middle" textLength="6.00" lengthAdjust="spacingAndGlyphs" >28</text>
<text x="746.24" y="256.40" font-size="6.5" fill="#34324a" text-anchor="middle" textLength="10.00" lengthAdjust="spacingAndGlyphs" >28,5</text>
<text x="769.50" y="256.40" font-size="6.5" fill="#34324a" text-anchor="middle" textLength="6.00" lengthAdjust="spacingAndGlyphs" >29</text>
<text x="772.00" y="249.80" font-size="6.5" fill="#34324a" text-anchor="start" textLength="3.50" lengthAdjust="spacingAndGlyphs" >0</text>
<text x="772.00" y="238.74" font-size="6.5" fill="#34324a" text-anchor="start" textLength="6.50" lengthAdjust="spacingAndGlyphs" >10</text>
<text x="772.00" y="227.69" font-size="6.5" fill="#34324a" text-anchor="start" textLength="6.50" lengthAdjust="spacingAndGlyphs" >20</text>
<text x="772.00" y="216.63" font-size="6.5" fill="#34324a" text-anchor="start" textLength="6.50" lengthAdjust="spacingAndGlyphs" >30</text>
<text x="772.00" y="205.58" font-size="6.5" fill="#34324a" text-anchor="start" textLength="6.50" lengthAdjust="spacingAndGlyphs" >40</text>
<text x="772.00" y="194.52" font-size="6.5" fill="#34324a" text-anchor="start" textLength="6.50" lengthAdjust="spacingAndGlyphs" >50</text>
<text x="772.00" y="183.47" font-size="6.5" fill="#34324a" text-anchor="start" textLength="6.50" lengthAdjust="spacingAndGlyphs" >60</text>
<text x="772.00" y="172.41" font-size="6.5" fill="#34324a" text-anchor="start" textLength="6.50" lengthAdjust="spacingAndGlyphs" >70</text>
<text x="772.00" y="161.36" font-size="6.5" fill="#34324a" text-anchor="start" textLength="6.50" lengthAdjust="spacingAndGlyphs" >80</text>
<text x="772.00" y="150.30" font-size="6.5" fill="#34324a" text-anchor="start" textLength="6.50" lengthAdjust="spacingAndGlyphs" >90</text>
<text x="772.00" y="139.24" font-size="6.5" fill="#34324a" text-anchor="start" textLength="9.00" lengthAdjust="spacingAndGlyphs" >100</text>
<text x="772.00" y="128.19" font-size="6.5" fill="#34324a" text-anchor="start" textLength="9.00" lengthAdjust="spacingAndGlyphs" >110</text>
<text x="772.00" y="117.13" font-size="6.5" fill="#34324a" text-anchor="start" textLength="9.00" lengthAdjust="spacingAndGlyphs" >120</text>
<text x="772.00" y="106.08" font-size="6.5" fill="#34324a" text-anchor="start" textLength="9.00" lengthAdjust="spacingAndGlyphs" >130</text>
<text x="772.00" y="95.02" font-size="6.5" fill="#34324a" text-anchor="start" textLength="9.00" lengthAdjust="spacingAndGlyphs" >140</text>
<text x="772.00" y="83.97" font-size="6.5" fill="#34324a" text-anchor="start" textLength="9.00" lengthAdjust="spacingAndGlyphs" >150</text>
<text x="772.00" y="72.91" font-size="6.5" fill="#34324a" text-anchor="start" textLength="9.00" lengthAdjust="spacingAndGlyphs" >160</text>
<text x="772.00" y="61.86" font-size="6.5" fill="#34324a" text-anchor="start" textLength="9.00" lengthAdjust="spacingAndGlyphs" >170</text>
<text x="772.00" y="50.80" font-size="6.5" fill="#34324a" text-anchor="start" textLength="9.00" lengthAdjust="spacingAndGlyphs" >180</text>
<text x="358.70" y="43.00" font-size="10.4" fill="#454545" text-anchor="start" textLength="98.40" lengthAdjust="spacingAndGlyphs" >CURRENT INJECTION</text>
<text x="747.80" y="36.10" font-size="8.5" fill="#555" text-anchor="start" textLength="49.30" lengthAdjust="spacingAndGlyphs" >Pressure [bar]</text>
<text x="23.30" y="270.60" font-size="9" fill="#555" text-anchor="start" textLength="73.00" lengthAdjust="spacingAndGlyphs" >UV Absorbance [AU]</text>
<text x="728.50" y="270.30" font-size="9" fill="#555" text-anchor="start" textLength="38.60" lengthAdjust="spacingAndGlyphs" >Time [min]</text>
<path d="M23.5,257 V245" stroke="#555" stroke-width="1"/><path d="M21.3,247.6 L23.5,243.8 L25.7,247.6 L23.5,246.8 Z" fill="#333"/>
<path d="M710.3,267.4 H721" stroke="#777" stroke-width="1"/><path d="M719.2,265.2 L723,267.4 L719.2,269.6 L720,267.4 Z" fill="#333"/>
<path d="M792.3,43.8 V56" stroke="#555" stroke-width="1"/><path d="M789.8,53.5 L792.3,57.3 L794.8,53.5 L792.3,54.5 Z" fill="#333"/>
<rect x="48.5" y="360.5" width="320.0" height="140.0" fill="#fff"/>
<clipPath id="cb"><rect x="48.5" y="360.5" width="320.0" height="140.0"/></clipPath>
<line x1="54.3" y1="360.5" x2="54.3" y2="500.5" stroke="#f08a80" stroke-width="1.1"/>
<line x1="105.8" y1="360.5" x2="105.8" y2="500.5" stroke="#c07068" stroke-width="1.1"/>
<line x1="219.8" y1="360.5" x2="219.8" y2="500.5" stroke="#c07068" stroke-width="1.1"/>
<line x1="356.7" y1="360.5" x2="356.7" y2="500.5" stroke="#cc7c78" stroke-width="1.1"/>
<path d="M54.5,492.70 L55.0,492.70 L55.5,492.70 L56.0,492.70 L56.5,492.70 L57.0,492.70 L57.5,492.70 L58.0,492.70 L58.5,492.70 L59.0,492.70 L59.5,492.70 L60.0,492.70 L60.5,492.70 L61.0,492.70 L61.5,492.70 L62.0,492.70 L62.5,492.70 L63.0,492.70 L63.5,492.70 L64.0,492.70 L64.5,492.70 L65.0,492.70 L65.5,492.70 L66.0,492.70 L66.5,492.70 L67.0,492.69 L67.5,492.69 L68.0,492.68 L68.5,492.66 L69.0,492.63 L69.5,492.59 L70.0,492.53 L70.5,492.43 L71.0,492.28 L71.5,492.05 L72.0,491.73 L72.5,491.27 L73.0,490.63 L73.5,489.76 L74.0,488.58 L74.5,487.02 L75.0,485.00 L75.5,482.43 L76.0,479.23 L76.5,475.32 L77.0,470.64 L77.5,465.15 L78.0,458.87 L78.5,451.83 L79.0,444.13 L79.5,435.92 L80.0,427.41 L80.5,418.84 L81.0,410.51 L81.5,402.74 L82.0,395.83 L82.5,390.10 L83.0,385.79 L83.5,383.13 L84.0,382.22 L84.5,383.01 L85.0,385.32 L85.5,389.06 L86.0,394.08 L86.5,399.89 L87.0,406.12 L87.5,412.70 L88.0,419.55 L88.5,426.56 L89.0,433.60 L89.5,440.54 L90.0,447.22 L90.5,453.53 L91.0,459.37 L91.5,464.66 L92.0,469.36 L92.5,473.45 L93.0,476.95 L93.5,479.90 L94.0,482.34 L94.5,484.34 L95.0,485.95 L95.5,487.25 L96.0,488.28 L96.5,489.09 L97.0,489.74 L97.5,490.25 L98.0,490.66 L98.5,490.99 L99.0,491.27 L99.5,491.49 L100.0,491.69 L100.5,491.85 L101.0,492.00 L101.5,492.13 L102.0,492.24 L102.5,492.35 L103.0,492.45 L103.5,492.54 L104.0,492.63 L104.5,492.71 L105.0,492.79 L105.5,492.87 L106.0,492.94 L106.5,493.00 L107.0,493.06 L107.5,493.12 L108.0,493.18 L108.5,493.23 L109.0,493.28 L109.5,493.32 L110.0,493.36 L110.5,493.39 L111.0,493.41 L111.5,493.42 L112.0,493.42 L112.5,493.41 L113.0,493.38 L113.5,493.32 L114.0,493.25 L114.5,493.14 L115.0,492.99 L115.5,492.81 L116.0,492.57 L116.5,492.28 L117.0,491.92 L117.5,491.48 L118.0,490.96 L118.5,490.33 L119.0,489.58 L119.5,488.71 L120.0,487.68 L120.5,486.50 L121.0,485.14 L121.5,483.58 L122.0,481.82 L122.5,479.82 L123.0,477.59 L123.5,475.11 L124.0,472.37 L124.5,469.35 L125.0,466.07 L125.5,462.51 L126.0,458.68 L126.5,454.59 L127.0,450.25 L127.5,445.69 L128.0,440.93 L128.5,436.01 L129.0,430.95 L129.5,425.80 L130.0,420.61 L130.5,415.43 L131.0,410.32 L131.5,405.33 L132.0,400.53 L132.5,395.97 L133.0,391.71 L133.5,387.82 L134.0,384.33 L134.5,381.32 L135.0,378.81 L135.5,376.85 L136.0,375.46 L136.5,374.67 L137.0,374.49 L137.5,374.91 L138.0,375.91 L138.5,377.49 L139.0,379.62 L139.5,382.27 L140.0,385.39 L140.5,388.71 L141.0,392.12 L141.5,395.65 L142.0,399.34 L142.5,403.18 L143.0,407.19 L143.5,411.36 L144.0,415.67 L144.5,420.10 L145.0,424.61 L145.5,429.16 L146.0,433.72 L146.5,438.24 L147.0,442.67 L147.5,446.99 L148.0,451.14 L148.5,455.11 L149.0,458.87 L149.5,462.40 L150.0,465.69 L150.5,468.73 L151.0,471.53 L151.5,474.08 L152.0,476.39 L152.5,478.47 L153.0,480.33 L153.5,482.00 L154.0,483.47 L154.5,484.78 L155.0,485.92 L155.5,486.93 L156.0,487.81 L156.5,488.57 L157.0,489.24 L157.5,489.81 L158.0,490.31 L158.5,490.75 L159.0,491.12 L159.5,491.45 L160.0,491.73 L160.5,491.97 L161.0,492.19 L161.5,492.37 L162.0,492.54 L162.5,492.68 L163.0,492.81 L163.5,492.93 L164.0,493.03 L164.5,493.12 L165.0,493.21 L165.5,493.28 L166.0,493.35 L166.5,493.41 L167.0,493.47 L167.5,493.53 L168.0,493.58 L168.5,493.62 L169.0,493.67 L169.5,493.71 L170.0,493.75 L170.5,493.78 L171.0,493.82 L171.5,493.85 L172.0,493.88 L172.5,493.91 L173.0,493.93 L173.5,493.96 L174.0,493.98 L174.5,494.00 L175.0,494.03 L175.5,494.05 L176.0,494.07 L176.5,494.08 L177.0,494.10 L177.5,494.12 L178.0,494.13 L178.5,494.15 L179.0,494.16 L179.5,494.17 L180.0,494.19 L180.5,494.20 L181.0,494.21 L181.5,494.22 L182.0,494.23 L182.5,494.24 L183.0,494.25 L183.5,494.26 L184.0,494.27 L184.5,494.28 L185.0,494.29 L185.5,494.29 L186.0,494.30 L186.5,494.31 L187.0,494.31 L187.5,494.32 L188.0,494.33 L188.5,494.33 L189.0,494.34 L189.5,494.34 L190.0,494.35 L190.5,494.35 L191.0,494.36 L191.5,494.36 L192.0,494.37 L192.5,494.37 L193.0,494.38 L193.5,494.38 L194.0,494.38 L194.5,494.39 L195.0,494.39 L195.5,494.39 L196.0,494.40 L196.5,494.40 L197.0,494.40 L197.5,494.41 L198.0,494.41 L198.5,494.41 L199.0,494.42 L199.5,494.42 L200.0,494.42 L200.5,494.42 L201.0,494.42 L201.5,494.43 L202.0,494.43 L202.5,494.43 L203.0,494.43 L203.5,494.44 L204.0,494.44 L204.5,494.44 L205.0,494.44 L205.5,494.44 L206.0,494.44 L206.5,494.45 L207.0,494.45 L207.5,494.45 L208.0,494.45 L208.5,494.45 L209.0,494.45 L209.5,494.45 L210.0,494.46 L210.5,494.46 L211.0,494.46 L211.5,494.46 L212.0,494.46 L212.5,494.46 L213.0,494.46 L213.5,494.46 L214.0,494.46 L214.5,494.47 L215.0,494.47 L215.5,494.47 L216.0,494.47 L216.5,494.47 L217.0,494.47 L217.5,494.47 L218.0,494.47 L218.5,494.47 L219.0,494.47 L219.5,494.47 L220.0,494.48 L220.5,494.48 L221.0,494.48 L221.5,494.48 L222.0,494.48 L222.5,494.48 L223.0,494.48 L223.5,494.48 L224.0,494.48 L224.5,494.48 L225.0,494.48 L225.5,494.48 L226.0,494.48 L226.5,494.48 L227.0,494.48 L227.5,494.48 L228.0,494.48 L228.5,494.48 L229.0,494.48 L229.5,494.49 L230.0,494.49 L230.5,494.49 L231.0,494.49 L231.5,494.49 L232.0,494.49 L232.5,494.49 L233.0,494.49 L233.5,494.49 L234.0,494.49 L234.5,494.49 L235.0,494.49 L235.5,494.49 L236.0,494.48 L236.5,494.48 L237.0,494.48 L237.5,494.48 L238.0,494.48 L238.5,494.48 L239.0,494.47 L239.5,494.47 L240.0,494.46 L240.5,494.46 L241.0,494.45 L241.5,494.44 L242.0,494.43 L242.5,494.41 L243.0,494.39 L243.5,494.37 L244.0,494.34 L244.5,494.31 L245.0,494.28 L245.5,494.23 L246.0,494.18 L246.5,494.12 L247.0,494.05 L247.5,493.96 L248.0,493.86 L248.5,493.75 L249.0,493.61 L249.5,493.46 L250.0,493.28 L250.5,493.07 L251.0,492.84 L251.5,492.56 L252.0,492.25 L252.5,491.90 L253.0,491.50 L253.5,491.05 L254.0,490.54 L254.5,489.97 L255.0,489.33 L255.5,488.62 L256.0,487.83 L256.5,486.95 L257.0,485.98 L257.5,484.91 L258.0,483.73 L258.5,482.45 L259.0,481.05 L259.5,479.52 L260.0,477.88 L260.5,476.10 L261.0,474.18 L261.5,472.13 L262.0,469.95 L262.5,467.62 L263.0,465.15 L263.5,462.55 L264.0,459.81 L264.5,456.94 L265.0,453.94 L265.5,450.83 L266.0,447.61 L266.5,444.29 L267.0,440.88 L267.5,437.40 L268.0,433.86 L268.5,430.28 L269.0,426.68 L269.5,423.08 L270.0,419.49 L270.5,415.94 L271.0,412.44 L271.5,409.03 L272.0,405.73 L272.5,402.55 L273.0,399.52 L273.5,396.66 L274.0,394.00 L274.5,391.55 L275.0,389.33 L275.5,387.36 L276.0,385.65 L276.5,384.23 L277.0,383.09 L277.5,382.25 L278.0,381.72 L278.5,381.51 L279.0,381.61 L279.5,382.06 L280.0,382.86 L280.5,383.99 L281.0,385.45 L281.5,387.22 L282.0,389.28 L282.5,391.63 L283.0,394.23 L283.5,397.07 L284.0,400.11 L284.5,403.35 L285.0,406.72 L285.5,410.14 L286.0,413.61 L286.5,417.12 L287.0,420.62 L287.5,424.06 L288.0,427.42 L288.5,430.70 L289.0,433.89 L289.5,436.98 L290.0,439.97 L290.5,442.86 L291.0,445.63 L291.5,448.29 L292.0,450.83 L292.5,453.25 L293.0,455.55 L293.5,457.73 L294.0,459.79 L294.5,461.72 L295.0,463.54 L295.5,465.25 L296.0,466.84 L296.5,468.33 L297.0,469.71 L297.5,471.00 L298.0,472.19 L298.5,473.29 L299.0,474.31 L299.5,475.24 L300.0,476.11 L300.5,476.91 L301.0,477.64 L301.5,478.30 L302.0,478.93 L302.5,479.46 L303.0,480.03 L303.5,480.51 L304.0,480.96 L304.5,481.39 L305.0,481.74 L305.5,482.15 L306.0,482.49 L306.5,482.80 L307.0,482.99 L307.5,483.20 L308.0,483.47 L308.5,483.59 L309.0,483.88 L309.5,484.00 L310.0,484.18 L310.5,484.26 L311.0,484.55 L311.5,484.67 L312.0,484.77 L312.5,485.22 L313.0,485.31 L313.5,485.67 L314.0,485.74 L314.5,486.10 L315.0,486.44 L315.5,486.82 L316.0,486.96 L316.5,486.63 L317.0,486.68 L317.5,486.61 L318.0,486.62 L318.5,486.50 L319.0,486.35 L319.5,486.10 L320.0,485.94 L320.5,486.48 L321.0,486.98 L321.5,486.91 L322.0,487.12 L322.5,487.43 L323.0,487.36 L323.5,487.53 L324.0,487.84 L324.5,487.66 L325.0,487.34 L325.5,487.81 L326.0,487.59 L326.5,487.88 L327.0,488.26 L327.5,488.37 L328.0,488.56 L328.5,488.82 L329.0,488.87 L329.5,488.60 L330.0,488.84 L330.5,488.86 L331.0,488.55 L331.5,488.52 L332.0,488.36 L332.5,488.29 L333.0,488.81 L333.5,488.88 L334.0,488.94 L334.5,488.66 L335.0,488.78 L335.5,488.73 L336.0,488.85 L336.5,488.89 L337.0,488.59 L337.5,488.89 L338.0,489.20 L338.5,489.48 L339.0,489.51 L339.5,489.85 L340.0,489.82 L340.5,489.93 L341.0,490.01 L341.5,489.80 L342.0,489.86 L342.5,489.69 L343.0,490.08 L343.5,490.20 L344.0,490.32 L344.5,490.48 L345.0,490.51 L345.5,490.59 L346.0,490.64 L346.5,490.76 L347.0,491.23 L347.5,491.04 L348.0,490.91 L348.5,491.07 L349.0,491.10 L349.5,491.09 L350.0,490.83 L350.5,490.88 L351.0,490.18 L351.5,490.50 L352.0,490.64 L352.5,490.48 L353.0,490.68 L353.5,490.85 L354.0,491.05 L354.5,491.14 L355.0,491.31" fill="none" stroke="#b8e090" stroke-width="0.8" clip-path="url(#cb)"/>
<path d="M54.5,492.70 L55.0,492.70 L55.5,492.70 L56.0,492.70 L56.5,492.70 L57.0,492.70 L57.5,492.70 L58.0,492.70 L58.5,492.70 L59.0,492.70 L59.5,492.70 L60.0,492.70 L60.5,492.70 L61.0,492.70 L61.5,492.70 L62.0,492.70 L62.5,492.70 L63.0,492.70 L63.5,492.70 L64.0,492.70 L64.5,492.70 L65.0,492.70 L65.5,492.69 L66.0,492.69 L66.5,492.67 L67.0,492.66 L67.5,492.63 L68.0,492.58 L68.5,492.51 L69.0,492.40 L69.5,492.23 L70.0,491.99 L70.5,491.64 L71.0,491.15 L71.5,490.46 L72.0,489.52 L72.5,488.26 L73.0,486.60 L73.5,484.45 L74.0,481.74 L74.5,478.37 L75.0,474.28 L75.5,469.39 L76.0,463.70 L76.5,457.20 L77.0,449.95 L77.5,442.07 L78.0,433.70 L78.5,425.08 L79.0,416.46 L79.5,408.14 L80.0,400.45 L80.5,393.69 L81.0,388.17 L81.5,384.15 L82.0,381.80 L82.5,381.25 L83.0,382.35 L83.5,384.98 L84.0,389.03 L84.5,394.31 L85.0,400.27 L85.5,406.64 L86.0,413.35 L86.5,420.31 L87.0,427.41 L87.5,434.51 L88.0,441.47 L88.5,448.15 L89.0,454.44 L89.5,460.22 L90.0,465.44 L90.5,470.05 L91.0,474.05 L91.5,477.46 L92.0,480.33 L92.5,482.69 L93.0,484.62 L93.5,486.18 L94.0,487.42 L94.5,488.41 L95.0,489.19 L95.5,489.80 L96.0,490.29 L96.5,490.69 L97.0,491.00 L97.5,491.26 L98.0,491.48 L98.5,491.66 L99.0,491.82 L99.5,491.96 L100.0,492.08 L100.5,492.19 L101.0,492.29 L101.5,492.39 L102.0,492.48 L102.5,492.56 L103.0,492.64 L103.5,492.71 L104.0,492.78 L104.5,492.85 L105.0,492.91 L105.5,492.97 L106.0,493.03 L106.5,493.09 L107.0,493.14 L107.5,493.19 L108.0,493.24 L108.5,493.28 L109.0,493.32 L109.5,493.35 L110.0,493.38 L110.5,493.39 L111.0,493.40 L111.5,493.40 L112.0,493.38 L112.5,493.34 L113.0,493.28 L113.5,493.19 L114.0,493.08 L114.5,492.93 L115.0,492.73 L115.5,492.48 L116.0,492.17 L116.5,491.80 L117.0,491.34 L117.5,490.79 L118.0,490.13 L118.5,489.35 L119.0,488.44 L119.5,487.38 L120.0,486.16 L120.5,484.75 L121.0,483.14 L121.5,481.31 L122.0,479.26 L122.5,476.96 L123.0,474.40 L123.5,471.58 L124.0,468.49 L124.5,465.12 L125.0,461.48 L125.5,457.56 L126.0,453.39 L126.5,448.97 L127.0,444.34 L127.5,439.50 L128.0,434.50 L128.5,429.38 L129.0,424.18 L129.5,418.94 L130.0,413.73 L130.5,408.60 L131.0,403.60 L131.5,398.80 L132.0,394.26 L132.5,390.03 L133.0,386.19 L133.5,382.77 L134.0,379.83 L134.5,377.40 L135.0,375.54 L135.5,374.26 L136.0,373.59 L136.5,373.53 L137.0,374.07 L137.5,375.20 L138.0,376.90 L138.5,379.16 L139.0,381.93 L139.5,385.14 L140.0,388.50 L140.5,391.97 L141.0,395.57 L141.5,399.33 L142.0,403.24 L142.5,407.33 L143.0,411.57 L143.5,415.95 L144.0,420.44 L144.5,425.00 L145.0,429.60 L145.5,434.20 L146.0,438.74 L146.5,443.19 L147.0,447.51 L147.5,451.66 L148.0,455.62 L148.5,459.37 L149.0,462.88 L149.5,466.14 L150.0,469.16 L150.5,471.92 L151.0,474.44 L151.5,476.72 L152.0,478.77 L152.5,480.61 L153.0,482.24 L153.5,483.69 L154.0,484.97 L154.5,486.10 L155.0,487.08 L155.5,487.94 L156.0,488.69 L156.5,489.34 L157.0,489.90 L157.5,490.39 L158.0,490.82 L158.5,491.18 L159.0,491.50 L159.5,491.78 L160.0,492.01 L160.5,492.22 L161.0,492.41 L161.5,492.57 L162.0,492.71 L162.5,492.84 L163.0,492.95 L163.5,493.05 L164.0,493.14 L164.5,493.22 L165.0,493.30 L165.5,493.36 L166.0,493.43 L166.5,493.48 L167.0,493.54 L167.5,493.59 L168.0,493.63 L168.5,493.68 L169.0,493.72 L169.5,493.75 L170.0,493.79 L170.5,493.82 L171.0,493.85 L171.5,493.88 L172.0,493.91 L172.5,493.94 L173.0,493.96 L173.5,493.99 L174.0,494.01 L174.5,494.03 L175.0,494.05 L175.5,494.07 L176.0,494.09 L176.5,494.10 L177.0,494.12 L177.5,494.14 L178.0,494.15 L178.5,494.16 L179.0,494.18 L179.5,494.19 L180.0,494.20 L180.5,494.21 L181.0,494.22 L181.5,494.23 L182.0,494.24 L182.5,494.25 L183.0,494.26 L183.5,494.27 L184.0,494.28 L184.5,494.29 L185.0,494.29 L185.5,494.30 L186.0,494.31 L186.5,494.32 L187.0,494.32 L187.5,494.33 L188.0,494.33 L188.5,494.34 L189.0,494.34 L189.5,494.35 L190.0,494.35 L190.5,494.36 L191.0,494.36 L191.5,494.37 L192.0,494.37 L192.5,494.38 L193.0,494.38 L193.5,494.38 L194.0,494.39 L194.5,494.39 L195.0,494.40 L195.5,494.40 L196.0,494.40 L196.5,494.40 L197.0,494.41 L197.5,494.41 L198.0,494.41 L198.5,494.42 L199.0,494.42 L199.5,494.42 L200.0,494.42 L200.5,494.43 L201.0,494.43 L201.5,494.43 L202.0,494.43 L202.5,494.43 L203.0,494.44 L203.5,494.44 L204.0,494.44 L204.5,494.44 L205.0,494.44 L205.5,494.44 L206.0,494.45 L206.5,494.45 L207.0,494.45 L207.5,494.45 L208.0,494.45 L208.5,494.45 L209.0,494.45 L209.5,494.46 L210.0,494.46 L210.5,494.46 L211.0,494.46 L211.5,494.46 L212.0,494.46 L212.5,494.46 L213.0,494.46 L213.5,494.47 L214.0,494.47 L214.5,494.47 L215.0,494.47 L215.5,494.47 L216.0,494.47 L216.5,494.47 L217.0,494.47 L217.5,494.47 L218.0,494.47 L218.5,494.47 L219.0,494.47 L219.5,494.48 L220.0,494.48 L220.5,494.48 L221.0,494.48 L221.5,494.48 L222.0,494.48 L222.5,494.48 L223.0,494.48 L223.5,494.48 L224.0,494.48 L224.5,494.48 L225.0,494.48 L225.5,494.48 L226.0,494.48 L226.5,494.48 L227.0,494.48 L227.5,494.48 L228.0,494.48 L228.5,494.48 L229.0,494.49 L229.5,494.49 L230.0,494.49 L230.5,494.49 L231.0,494.49 L231.5,494.49 L232.0,494.49 L232.5,494.49 L233.0,494.49 L233.5,494.49 L234.0,494.49 L234.5,494.49 L235.0,494.49 L235.5,494.49 L236.0,494.49 L236.5,494.49 L237.0,494.48 L237.5,494.48 L238.0,494.48 L238.5,494.48 L239.0,494.48 L239.5,494.47 L240.0,494.47 L240.5,494.46 L241.0,494.46 L241.5,494.45 L242.0,494.44 L242.5,494.42 L243.0,494.41 L243.5,494.39 L244.0,494.37 L244.5,494.34 L245.0,494.31 L245.5,494.28 L246.0,494.23 L246.5,494.18 L247.0,494.12 L247.5,494.04 L248.0,493.96 L248.5,493.86 L249.0,493.74 L249.5,493.61 L250.0,493.45 L250.5,493.27 L251.0,493.06 L251.5,492.82 L252.0,492.55 L252.5,492.23 L253.0,491.88 L253.5,491.48 L254.0,491.02 L254.5,490.51 L255.0,489.93 L255.5,489.29 L256.0,488.57 L256.5,487.77 L257.0,486.88 L257.5,485.90 L258.0,484.82 L258.5,483.64 L259.0,482.34 L259.5,480.93 L260.0,479.39 L260.5,477.73 L261.0,475.93 L261.5,474.00 L262.0,471.94 L262.5,469.73 L263.0,467.38 L263.5,464.89 L264.0,462.27 L264.5,459.50 L265.0,456.61 L265.5,453.58 L266.0,450.44 L266.5,447.19 L267.0,443.84 L267.5,440.40 L268.0,436.89 L268.5,433.33 L269.0,429.72 L269.5,426.08 L270.0,422.44 L270.5,418.82 L271.0,415.24 L271.5,411.72 L272.0,408.28 L272.5,404.94 L273.0,401.74 L273.5,398.68 L274.0,395.80 L274.5,393.11 L275.0,390.64 L275.5,388.40 L276.0,386.41 L276.5,384.69 L277.0,383.25 L277.5,382.10 L278.0,381.26 L278.5,380.73 L279.0,380.51 L279.5,380.61 L280.0,381.07 L280.5,381.87 L281.0,383.01 L281.5,384.48 L282.0,386.27 L282.5,388.35 L283.0,390.72 L283.5,393.34 L284.0,396.20 L284.5,399.28 L285.0,402.54 L285.5,405.94 L286.0,409.40 L286.5,412.90 L287.0,416.44 L287.5,419.97 L288.0,423.44 L288.5,426.84 L289.0,430.15 L289.5,433.38 L290.0,436.50 L290.5,439.53 L291.0,442.44 L291.5,445.24 L292.0,447.93 L292.5,450.50 L293.0,452.95 L293.5,455.27 L294.0,457.47 L294.5,459.55 L295.0,461.51 L295.5,463.35 L296.0,465.08 L296.5,466.69 L297.0,468.19 L297.5,469.59 L298.0,470.89 L298.5,472.09 L299.0,473.20 L299.5,474.23 L300.0,475.18 L300.5,476.07 L301.0,476.90 L301.5,477.67 L302.0,478.32 L302.5,478.97 L303.0,479.52 L303.5,480.06 L304.0,480.49 L304.5,480.88 L305.0,481.15 L305.5,481.43 L306.0,481.79 L306.5,482.19 L307.0,482.53 L307.5,482.78 L308.0,483.15 L308.5,483.35 L309.0,483.77 L309.5,484.00 L310.0,484.25 L310.5,484.33 L311.0,484.52 L311.5,484.68 L312.0,484.73 L312.5,484.97 L313.0,485.07 L313.5,485.07 L314.0,485.15 L314.5,485.42 L315.0,485.51 L315.5,485.81 L316.0,486.10 L316.5,486.08 L317.0,486.02 L317.5,486.50 L318.0,486.77 L318.5,486.81 L319.0,486.99 L319.5,486.59 L320.0,486.56 L320.5,486.56 L321.0,486.73 L321.5,486.60 L322.0,486.50 L322.5,486.60 L323.0,486.69 L323.5,486.96 L324.0,486.99 L324.5,487.48 L325.0,487.91 L325.5,487.84 L326.0,488.02 L326.5,488.20 L327.0,488.34 L327.5,488.58 L328.0,488.92 L328.5,489.14 L329.0,488.94 L329.5,489.06 L330.0,488.85 L330.5,488.87 L331.0,489.07 L331.5,489.14 L332.0,489.03 L332.5,488.79 L333.0,489.15 L333.5,489.20 L334.0,489.60 L334.5,489.46 L335.0,489.43 L335.5,489.61 L336.0,489.86 L336.5,489.93 L337.0,489.57 L337.5,489.70 L338.0,489.49 L338.5,489.79 L339.0,489.73 L339.5,489.46 L340.0,489.36 L340.5,489.37 L341.0,489.26 L341.5,489.34 L342.0,489.53 L342.5,489.33 L343.0,489.30 L343.5,489.42 L344.0,489.24 L344.5,489.65 L345.0,489.76 L345.5,489.94 L346.0,490.07 L346.5,490.21 L347.0,490.03 L347.5,490.43 L348.0,490.55 L348.5,490.63 L349.0,490.82 L349.5,490.60 L350.0,490.75 L350.5,490.74 L351.0,491.13 L351.5,491.15 L352.0,491.16 L352.5,490.68 L353.0,490.79 L353.5,491.16 L354.0,491.02 L354.5,491.13 L355.0,491.14" fill="none" stroke="#a8a860" stroke-width="0.8" clip-path="url(#cb)"/>
<path d="M54.5,492.70 L55.0,492.70 L55.5,492.70 L56.0,492.70 L56.5,492.70 L57.0,492.70 L57.5,492.70 L58.0,492.70 L58.5,492.70 L59.0,492.70 L59.5,492.70 L60.0,492.70 L60.5,492.70 L61.0,492.70 L61.5,492.70 L62.0,492.70 L62.5,492.69 L63.0,492.69 L63.5,492.68 L64.0,492.67 L64.5,492.65 L65.0,492.62 L65.5,492.57 L66.0,492.49 L66.5,492.37 L67.0,492.19 L67.5,491.93 L68.0,491.56 L68.5,491.03 L69.0,490.29 L69.5,489.29 L70.0,487.96 L70.5,486.21 L71.0,483.96 L71.5,481.12 L72.0,477.61 L72.5,473.36 L73.0,468.32 L73.5,462.46 L74.0,455.81 L74.5,448.42 L75.0,440.42 L75.5,431.99 L76.0,423.34 L76.5,414.76 L77.0,406.54 L77.5,399.01 L78.0,392.47 L78.5,387.23 L79.0,383.53 L79.5,381.54 L80.0,381.34 L80.5,382.75 L81.0,385.67 L81.5,389.98 L82.0,395.46 L82.5,401.51 L83.0,407.95 L83.5,414.72 L84.0,421.71 L84.5,428.82 L85.0,435.90 L85.5,442.82 L86.0,449.43 L86.5,455.62 L87.0,461.29 L87.5,466.38 L88.0,470.87 L88.5,474.75 L89.0,478.05 L89.5,480.81 L90.0,483.08 L90.5,484.92 L91.0,486.41 L91.5,487.59 L92.0,488.53 L92.5,489.28 L93.0,489.86 L93.5,490.33 L94.0,490.70 L94.5,491.00 L95.0,491.24 L95.5,491.45 L96.0,491.62 L96.5,491.77 L97.0,491.90 L97.5,492.01 L98.0,492.12 L98.5,492.21 L99.0,492.30 L99.5,492.38 L100.0,492.45 L100.5,492.52 L101.0,492.58 L101.5,492.64 L102.0,492.70 L102.5,492.75 L103.0,492.80 L103.5,492.84 L104.0,492.87 L104.5,492.90 L105.0,492.92 L105.5,492.94 L106.0,492.94 L106.5,492.93 L107.0,492.90 L107.5,492.85 L108.0,492.78 L108.5,492.68 L109.0,492.55 L109.5,492.37 L110.0,492.15 L110.5,491.87 L111.0,491.52 L111.5,491.10 L112.0,490.59 L112.5,489.98 L113.0,489.26 L113.5,488.40 L114.0,487.40 L114.5,486.24 L115.0,484.91 L115.5,483.38 L116.0,481.64 L116.5,479.68 L117.0,477.48 L117.5,475.04 L118.0,472.33 L118.5,469.35 L119.0,466.11 L119.5,462.59 L120.0,458.80 L120.5,454.76 L121.0,450.47 L121.5,445.96 L122.0,441.25 L122.5,436.37 L123.0,431.36 L123.5,426.27 L124.0,421.13 L124.5,416.00 L125.0,410.94 L125.5,406.00 L126.0,401.24 L126.5,396.72 L127.0,392.51 L127.5,388.65 L128.0,385.20 L128.5,382.21 L129.0,379.73 L129.5,377.79 L130.0,376.42 L130.5,375.64 L131.0,375.46 L131.5,375.87 L132.0,376.87 L132.5,378.44 L133.0,380.55 L133.5,383.18 L134.0,386.28 L134.5,389.57 L135.0,392.95 L135.5,396.45 L136.0,400.09 L136.5,403.90 L137.0,407.87 L137.5,412.00 L138.0,416.26 L138.5,420.65 L139.0,425.12 L139.5,429.63 L140.0,434.15 L140.5,438.63 L141.0,443.03 L141.5,447.31 L142.0,451.43 L142.5,455.37 L143.0,459.10 L143.5,462.61 L144.0,465.87 L144.5,468.89 L145.0,471.66 L145.5,474.19 L146.0,476.49 L146.5,478.56 L147.0,480.41 L147.5,482.06 L148.0,483.53 L148.5,484.82 L149.0,485.96 L149.5,486.96 L150.0,487.83 L150.5,488.59 L151.0,489.25 L151.5,489.83 L152.0,490.32 L152.5,490.75 L153.0,491.13 L153.5,491.45 L154.0,491.73 L154.5,491.98 L155.0,492.19 L155.5,492.38 L156.0,492.54 L156.5,492.69 L157.0,492.81 L157.5,492.93 L158.0,493.03 L158.5,493.12 L159.0,493.21 L159.5,493.28 L160.0,493.35 L160.5,493.41 L161.0,493.47 L161.5,493.53 L162.0,493.58 L162.5,493.62 L163.0,493.67 L163.5,493.71 L164.0,493.75 L164.5,493.78 L165.0,493.82 L165.5,493.85 L166.0,493.88 L166.5,493.91 L167.0,493.93 L167.5,493.96 L168.0,493.98 L168.5,494.00 L169.0,494.03 L169.5,494.05 L170.0,494.07 L170.5,494.08 L171.0,494.10 L171.5,494.12 L172.0,494.13 L172.5,494.15 L173.0,494.16 L173.5,494.17 L174.0,494.19 L174.5,494.20 L175.0,494.21 L175.5,494.22 L176.0,494.23 L176.5,494.24 L177.0,494.25 L177.5,494.26 L178.0,494.27 L178.5,494.28 L179.0,494.29 L179.5,494.29 L180.0,494.30 L180.5,494.31 L181.0,494.31 L181.5,494.32 L182.0,494.33 L182.5,494.33 L183.0,494.34 L183.5,494.34 L184.0,494.35 L184.5,494.35 L185.0,494.36 L185.5,494.36 L186.0,494.37 L186.5,494.37 L187.0,494.38 L187.5,494.38 L188.0,494.38 L188.5,494.39 L189.0,494.39 L189.5,494.39 L190.0,494.40 L190.5,494.40 L191.0,494.40 L191.5,494.41 L192.0,494.41 L192.5,494.41 L193.0,494.42 L193.5,494.42 L194.0,494.42 L194.5,494.42 L195.0,494.42 L195.5,494.43 L196.0,494.43 L196.5,494.43 L197.0,494.43 L197.5,494.44 L198.0,494.44 L198.5,494.44 L199.0,494.44 L199.5,494.44 L200.0,494.44 L200.5,494.45 L201.0,494.45 L201.5,494.45 L202.0,494.45 L202.5,494.45 L203.0,494.45 L203.5,494.45 L204.0,494.46 L204.5,494.46 L205.0,494.46 L205.5,494.46 L206.0,494.46 L206.5,494.46 L207.0,494.46 L207.5,494.46 L208.0,494.46 L208.5,494.47 L209.0,494.47 L209.5,494.47 L210.0,494.47 L210.5,494.47 L211.0,494.47 L211.5,494.47 L212.0,494.47 L212.5,494.47 L213.0,494.47 L213.5,494.47 L214.0,494.48 L214.5,494.48 L215.0,494.48 L215.5,494.48 L216.0,494.48 L216.5,494.48 L217.0,494.48 L217.5,494.48 L218.0,494.48 L218.5,494.48 L219.0,494.48 L219.5,494.48 L220.0,494.48 L220.5,494.48 L221.0,494.48 L221.5,494.48 L222.0,494.48 L222.5,494.48 L223.0,494.48 L223.5,494.49 L224.0,494.49 L224.5,494.49 L225.0,494.49 L225.5,494.49 L226.0,494.49 L226.5,494.49 L227.0,494.49 L227.5,494.49 L228.0,494.49 L228.5,494.49 L229.0,494.49 L229.5,494.49 L230.0,494.49 L230.5,494.49 L231.0,494.49 L231.5,494.49 L232.0,494.49 L232.5,494.49 L233.0,494.49 L233.5,494.49 L234.0,494.49 L234.5,494.49 L235.0,494.49 L235.5,494.49 L236.0,494.49 L236.5,494.49 L237.0,494.49 L237.5,494.49 L238.0,494.49 L238.5,494.49 L239.0,494.49 L239.5,494.49 L240.0,494.49 L240.5,494.49 L241.0,494.49 L241.5,494.48 L242.0,494.48 L242.5,494.48 L243.0,494.48 L243.5,494.47 L244.0,494.47 L244.5,494.46 L245.0,494.45 L245.5,494.44 L246.0,494.43 L246.5,494.41 L247.0,494.39 L247.5,494.37 L248.0,494.35 L248.5,494.31 L249.0,494.28 L249.5,494.23 L250.0,494.18 L250.5,494.12 L251.0,494.05 L251.5,493.96 L252.0,493.86 L252.5,493.75 L253.0,493.61 L253.5,493.46 L254.0,493.28 L254.5,493.07 L255.0,492.83 L255.5,492.56 L256.0,492.25 L256.5,491.90 L257.0,491.50 L257.5,491.05 L258.0,490.54 L258.5,489.97 L259.0,489.34 L259.5,488.63 L260.0,487.84 L260.5,486.97 L261.0,486.00 L261.5,484.94 L262.0,483.78 L262.5,482.50 L263.0,481.12 L263.5,479.61 L264.0,477.98 L264.5,476.22 L265.0,474.34 L265.5,472.31 L266.0,470.16 L266.5,467.86 L267.0,465.44 L267.5,462.87 L268.0,460.18 L268.5,457.36 L269.0,454.42 L269.5,451.37 L270.0,448.21 L270.5,444.96 L271.0,441.63 L271.5,438.23 L272.0,434.78 L272.5,431.29 L273.0,427.78 L273.5,424.27 L274.0,420.78 L274.5,417.34 L275.0,413.95 L275.5,410.65 L276.0,407.46 L276.5,404.39 L277.0,401.47 L277.5,398.73 L278.0,396.17 L278.5,393.83 L279.0,391.72 L279.5,389.85 L280.0,388.24 L280.5,386.91 L281.0,385.86 L281.5,385.11 L282.0,384.65 L282.5,384.50 L283.0,384.67 L283.5,385.18 L284.0,386.02 L284.5,387.18 L285.0,388.66 L285.5,390.44 L286.0,392.51 L286.5,394.84 L287.0,397.42 L287.5,400.23 L288.0,403.24 L288.5,406.42 L289.0,409.71 L289.5,413.05 L290.0,416.43 L290.5,419.84 L291.0,423.23 L291.5,426.56 L292.0,429.80 L292.5,432.96 L293.0,436.03 L293.5,439.01 L294.0,441.89 L294.5,444.66 L295.0,447.32 L295.5,449.86 L296.0,452.30 L296.5,454.62 L297.0,456.82 L297.5,458.90 L298.0,460.86 L298.5,462.71 L299.0,464.45 L299.5,466.08 L300.0,467.60 L300.5,469.02 L301.0,470.36 L301.5,471.58 L302.0,472.72 L302.5,473.80 L303.0,474.77 L303.5,475.67 L304.0,476.42 L304.5,477.15 L305.0,477.85 L305.5,478.48 L306.0,479.12 L306.5,479.56 L307.0,480.12 L307.5,480.60 L308.0,481.10 L308.5,481.55 L309.0,481.75 L309.5,482.18 L310.0,482.44 L310.5,482.70 L311.0,482.96 L311.5,483.22 L312.0,483.44 L312.5,483.77 L313.0,484.13 L313.5,484.38 L314.0,484.49 L314.5,484.87 L315.0,485.03 L315.5,485.09 L316.0,485.14 L316.5,485.02 L317.0,485.01 L317.5,484.78 L318.0,485.06 L318.5,485.14 L319.0,485.01 L319.5,485.26 L320.0,485.30 L320.5,485.74 L321.0,486.04 L321.5,486.25 L322.0,486.29 L322.5,486.26 L323.0,486.84 L323.5,487.05 L324.0,487.45 L324.5,487.40 L325.0,487.48 L325.5,487.71 L326.0,487.96 L326.5,488.09 L327.0,487.90 L327.5,488.07 L328.0,487.75 L328.5,487.96 L329.0,488.28 L329.5,488.18 L330.0,488.11 L330.5,488.32 L331.0,488.24 L331.5,488.16 L332.0,488.23 L332.5,487.95 L333.0,487.68 L333.5,487.77 L334.0,487.99 L334.5,488.10 L335.0,488.55 L335.5,488.42 L336.0,488.55 L336.5,488.90 L337.0,488.67 L337.5,488.94 L338.0,488.98 L338.5,489.13 L339.0,489.05 L339.5,489.09 L340.0,489.44 L340.5,489.29 L341.0,489.73 L341.5,489.70 L342.0,489.36 L342.5,489.21 L343.0,489.33 L343.5,489.63 L344.0,489.59 L344.5,489.57 L345.0,489.60 L345.5,489.59 L346.0,489.87 L346.5,490.07 L347.0,489.89 L347.5,490.03 L348.0,490.06 L348.5,490.10 L349.0,489.98 L349.5,489.99 L350.0,490.01 L350.5,489.98 L351.0,490.36 L351.5,490.46 L352.0,490.41 L352.5,490.83 L353.0,490.90 L353.5,491.06 L354.0,491.21 L354.5,491.21 L355.0,491.11" fill="none" stroke="#f0a030" stroke-width="0.9" stroke-dasharray="2,1.5" clip-path="url(#cb)"/>
<path d="M54.5,492.70 L55.0,492.70 L55.5,492.70 L56.0,492.70 L56.5,492.70 L57.0,492.70 L57.5,492.70 L58.0,492.70 L58.5,492.70 L59.0,492.70 L59.5,492.70 L60.0,492.70 L60.5,492.70 L61.0,492.70 L61.5,492.70 L62.0,492.70 L62.5,492.70 L63.0,492.70 L63.5,492.70 L64.0,492.69 L64.5,492.69 L65.0,492.68 L65.5,492.67 L66.0,492.64 L66.5,492.61 L67.0,492.55 L67.5,492.47 L68.0,492.34 L68.5,492.14 L69.0,491.86 L69.5,491.45 L70.0,490.88 L70.5,490.09 L71.0,489.02 L71.5,487.60 L72.0,485.74 L72.5,483.36 L73.0,480.37 L73.5,476.68 L74.0,472.24 L74.5,466.98 L75.0,460.91 L75.5,454.04 L76.0,446.46 L76.5,438.28 L77.0,429.71 L77.5,420.98 L78.0,412.36 L78.5,404.18 L79.0,396.76 L79.5,390.41 L80.0,385.41 L80.5,382.01 L81.0,380.36 L81.5,380.50 L82.0,382.24 L82.5,385.48 L83.0,390.09 L83.5,395.78 L84.0,401.97 L84.5,408.55 L85.0,415.44 L85.5,422.55 L86.0,429.73 L86.5,436.86 L87.0,443.79 L87.5,450.39 L88.0,456.53 L88.5,462.15 L89.0,467.16 L89.5,471.57 L90.0,475.36 L90.5,478.57 L91.0,481.25 L91.5,483.45 L92.0,485.23 L92.5,486.66 L93.0,487.80 L93.5,488.70 L94.0,489.42 L94.5,489.98 L95.0,490.43 L95.5,490.79 L96.0,491.08 L96.5,491.32 L97.0,491.52 L97.5,491.69 L98.0,491.83 L98.5,491.96 L99.0,492.08 L99.5,492.18 L100.0,492.28 L100.5,492.37 L101.0,492.45 L101.5,492.53 L102.0,492.60 L102.5,492.67 L103.0,492.73 L103.5,492.79 L104.0,492.85 L104.5,492.90 L105.0,492.95 L105.5,492.99 L106.0,493.03 L106.5,493.07 L107.0,493.09 L107.5,493.11 L108.0,493.12 L108.5,493.11 L109.0,493.09 L109.5,493.05 L110.0,492.99 L110.5,492.90 L111.0,492.78 L111.5,492.61 L112.0,492.41 L112.5,492.15 L113.0,491.82 L113.5,491.43 L114.0,490.95 L114.5,490.37 L115.0,489.68 L115.5,488.87 L116.0,487.92 L116.5,486.81 L117.0,485.53 L117.5,484.06 L118.0,482.39 L118.5,480.50 L119.0,478.37 L119.5,476.00 L120.0,473.37 L120.5,470.47 L121.0,467.30 L121.5,463.86 L122.0,460.14 L122.5,456.16 L123.0,451.93 L123.5,447.47 L124.0,442.79 L124.5,437.93 L125.0,432.92 L125.5,427.81 L126.0,422.64 L126.5,417.45 L127.0,412.31 L127.5,407.27 L128.0,402.38 L128.5,397.72 L129.0,393.34 L129.5,389.30 L130.0,385.65 L130.5,382.44 L131.0,379.73 L131.5,377.54 L132.0,375.93 L132.5,374.90 L133.0,374.47 L133.5,374.65 L134.0,375.43 L134.5,376.78 L135.0,378.69 L135.5,381.14 L136.0,384.08 L136.5,387.36 L137.0,390.73 L137.5,394.21 L138.0,397.84 L138.5,401.61 L139.0,405.56 L139.5,409.67 L140.0,413.92 L140.5,418.31 L141.0,422.79 L141.5,427.33 L142.0,431.90 L142.5,436.44 L143.0,440.91 L143.5,445.28 L144.0,449.50 L144.5,453.55 L145.0,457.39 L145.5,461.02 L146.0,464.40 L146.5,467.55 L147.0,470.44 L147.5,473.08 L148.0,475.49 L148.5,477.66 L149.0,479.61 L149.5,481.35 L150.0,482.90 L150.5,484.27 L151.0,485.48 L151.5,486.54 L152.0,487.47 L152.5,488.28 L153.0,488.98 L153.5,489.59 L154.0,490.12 L154.5,490.58 L155.0,490.98 L155.5,491.32 L156.0,491.62 L156.5,491.88 L157.0,492.11 L157.5,492.30 L158.0,492.48 L158.5,492.63 L159.0,492.76 L159.5,492.88 L160.0,492.99 L160.5,493.09 L161.0,493.17 L161.5,493.25 L162.0,493.32 L162.5,493.39 L163.0,493.45 L163.5,493.51 L164.0,493.56 L164.5,493.61 L165.0,493.65 L165.5,493.69 L166.0,493.73 L166.5,493.77 L167.0,493.80 L167.5,493.84 L168.0,493.87 L168.5,493.90 L169.0,493.92 L169.5,493.95 L170.0,493.97 L170.5,494.00 L171.0,494.02 L171.5,494.04 L172.0,494.06 L172.5,494.08 L173.0,494.09 L173.5,494.11 L174.0,494.13 L174.5,494.14 L175.0,494.16 L175.5,494.17 L176.0,494.18 L176.5,494.19 L177.0,494.21 L177.5,494.22 L178.0,494.23 L178.5,494.24 L179.0,494.25 L179.5,494.26 L180.0,494.27 L180.5,494.27 L181.0,494.28 L181.5,494.29 L182.0,494.30 L182.5,494.30 L183.0,494.31 L183.5,494.32 L184.0,494.32 L184.5,494.33 L185.0,494.34 L185.5,494.34 L186.0,494.35 L186.5,494.35 L187.0,494.36 L187.5,494.36 L188.0,494.37 L188.5,494.37 L189.0,494.37 L189.5,494.38 L190.0,494.38 L190.5,494.39 L191.0,494.39 L191.5,494.39 L192.0,494.40 L192.5,494.40 L193.0,494.40 L193.5,494.41 L194.0,494.41 L194.5,494.41 L195.0,494.41 L195.5,494.42 L196.0,494.42 L196.5,494.42 L197.0,494.42 L197.5,494.43 L198.0,494.43 L198.5,494.43 L199.0,494.43 L199.5,494.43 L200.0,494.44 L200.5,494.44 L201.0,494.44 L201.5,494.44 L202.0,494.44 L202.5,494.45 L203.0,494.45 L203.5,494.45 L204.0,494.45 L204.5,494.45 L205.0,494.45 L205.5,494.45 L206.0,494.46 L206.5,494.46 L207.0,494.46 L207.5,494.46 L208.0,494.46 L208.5,494.46 L209.0,494.46 L209.5,494.46 L210.0,494.46 L210.5,494.47 L211.0,494.47 L211.5,494.47 L212.0,494.47 L212.5,494.47 L213.0,494.47 L213.5,494.47 L214.0,494.47 L214.5,494.47 L215.0,494.47 L215.5,494.47 L216.0,494.47 L216.5,494.48 L217.0,494.48 L217.5,494.48 L218.0,494.48 L218.5,494.48 L219.0,494.48 L219.5,494.48 L220.0,494.48 L220.5,494.48 L221.0,494.48 L221.5,494.48 L222.0,494.48 L222.5,494.48 L223.0,494.48 L223.5,494.48 L224.0,494.48 L224.5,494.48 L225.0,494.48 L225.5,494.49 L226.0,494.49 L226.5,494.49 L227.0,494.49 L227.5,494.49 L228.0,494.49 L228.5,494.49 L229.0,494.49 L229.5,494.49 L230.0,494.49 L230.5,494.49 L231.0,494.49 L231.5,494.49 L232.0,494.49 L232.5,494.49 L233.0,494.49 L233.5,494.49 L234.0,494.49 L234.5,494.49 L235.0,494.49 L235.5,494.49 L236.0,494.49 L236.5,494.49 L237.0,494.49 L237.5,494.49 L238.0,494.49 L238.5,494.49 L239.0,494.49 L239.5,494.49 L240.0,494.49 L240.5,494.49 L241.0,494.48 L241.5,494.48 L242.0,494.48 L242.5,494.47 L243.0,494.47 L243.5,494.46 L244.0,494.46 L244.5,494.45 L245.0,494.44 L245.5,494.42 L246.0,494.41 L246.5,494.39 L247.0,494.37 L247.5,494.34 L248.0,494.31 L248.5,494.27 L249.0,494.22 L249.5,494.17 L250.0,494.10 L250.5,494.03 L251.0,493.94 L251.5,493.83 L252.0,493.71 L252.5,493.57 L253.0,493.41 L253.5,493.22 L254.0,493.01 L254.5,492.76 L255.0,492.48 L255.5,492.16 L256.0,491.80 L256.5,491.39 L257.0,490.92 L257.5,490.40 L258.0,489.81 L258.5,489.15 L259.0,488.42 L259.5,487.61 L260.0,486.71 L260.5,485.72 L261.0,484.63 L261.5,483.43 L262.0,482.12 L262.5,480.70 L263.0,479.16 L263.5,477.49 L264.0,475.69 L264.5,473.76 L265.0,471.69 L265.5,469.48 L266.0,467.14 L266.5,464.67 L267.0,462.05 L267.5,459.31 L268.0,456.44 L268.5,453.45 L269.0,450.35 L269.5,447.14 L270.0,443.85 L270.5,440.47 L271.0,437.03 L271.5,433.53 L272.0,430.01 L272.5,426.47 L273.0,422.93 L273.5,419.41 L274.0,415.95 L274.5,412.55 L275.0,409.23 L275.5,406.03 L276.0,402.97 L276.5,400.06 L277.0,397.32 L277.5,394.79 L278.0,392.47 L278.5,390.39 L279.0,388.55 L279.5,386.99 L280.0,385.70 L280.5,384.70 L281.0,384.00 L281.5,383.60 L282.0,383.51 L282.5,383.75 L283.0,384.33 L283.5,385.24 L284.0,386.48 L284.5,388.04 L285.0,389.89 L285.5,392.03 L286.0,394.44 L286.5,397.09 L287.0,399.96 L287.5,403.04 L288.0,406.28 L288.5,409.61 L289.0,412.99 L289.5,416.41 L290.0,419.86 L290.5,423.27 L291.0,426.61 L291.5,429.87 L292.0,433.05 L292.5,436.14 L293.0,439.13 L293.5,442.01 L294.0,444.79 L294.5,447.46 L295.0,450.01 L295.5,452.45 L296.0,454.77 L296.5,456.97 L297.0,459.06 L297.5,461.02 L298.0,462.87 L298.5,464.60 L299.0,466.23 L299.5,467.75 L300.0,469.16 L300.5,470.47 L301.0,471.68 L301.5,472.83 L302.0,473.91 L302.5,474.91 L303.0,475.82 L303.5,476.69 L304.0,477.43 L304.5,478.13 L305.0,478.74 L305.5,479.24 L306.0,479.75 L306.5,480.14 L307.0,480.58 L307.5,480.88 L308.0,481.33 L308.5,481.88 L309.0,482.32 L309.5,482.56 L310.0,482.91 L310.5,483.29 L311.0,483.61 L311.5,483.90 L312.0,484.12 L312.5,484.21 L313.0,484.50 L313.5,485.07 L314.0,485.02 L314.5,485.09 L315.0,485.18 L315.5,485.17 L316.0,485.36 L316.5,485.57 L317.0,485.66 L317.5,485.66 L318.0,486.05 L318.5,486.19 L319.0,486.26 L319.5,486.54 L320.0,486.60 L320.5,486.68 L321.0,486.61 L321.5,486.60 L322.0,486.71 L322.5,486.70 L323.0,486.79 L323.5,486.87 L324.0,486.76 L324.5,486.79 L325.0,486.97 L325.5,486.75 L326.0,486.77 L326.5,486.90 L327.0,486.76 L327.5,486.74 L328.0,487.12 L328.5,487.44 L329.0,487.51 L329.5,487.89 L330.0,487.88 L330.5,487.86 L331.0,488.07 L331.5,488.19 L332.0,488.22 L332.5,488.34 L333.0,488.36 L333.5,488.37 L334.0,488.75 L334.5,488.82 L335.0,489.30 L335.5,489.58 L336.0,489.61 L336.5,489.46 L337.0,489.68 L337.5,489.77 L338.0,489.71 L338.5,490.09 L339.0,489.90 L339.5,489.66 L340.0,489.59 L340.5,489.57 L341.0,489.41 L341.5,489.58 L342.0,489.44 L342.5,489.35 L343.0,489.35 L343.5,489.51 L344.0,489.70 L344.5,489.57 L345.0,489.79 L345.5,489.99 L346.0,490.35 L346.5,490.78 L347.0,490.53 L347.5,490.67 L348.0,490.67 L348.5,491.04 L349.0,491.18 L349.5,490.88 L350.0,490.85 L350.5,490.41 L351.0,490.62 L351.5,490.58 L352.0,490.59 L352.5,490.22 L353.0,490.29 L353.5,490.26 L354.0,490.25 L354.5,490.43 L355.0,490.56" fill="none" stroke="#e8a0d0" stroke-width="0.9" stroke-dasharray="1.5,1" clip-path="url(#cb)"/>
<path d="M54.5,492.70 L55.0,492.70 L55.5,492.70 L56.0,492.70 L56.5,492.70 L57.0,492.70 L57.5,492.70 L58.0,492.70 L58.5,492.70 L59.0,492.70 L59.5,492.70 L60.0,492.70 L60.5,492.70 L61.0,492.70 L61.5,492.70 L62.0,492.70 L62.5,492.70 L63.0,492.70 L63.5,492.70 L64.0,492.70 L64.5,492.70 L65.0,492.70 L65.5,492.70 L66.0,492.69 L66.5,492.68 L67.0,492.67 L67.5,492.65 L68.0,492.62 L68.5,492.57 L69.0,492.49 L69.5,492.37 L70.0,492.19 L70.5,491.92 L71.0,491.55 L71.5,491.01 L72.0,490.27 L72.5,489.26 L73.0,487.92 L73.5,486.15 L74.0,483.88 L74.5,481.02 L75.0,477.48 L75.5,473.19 L76.0,468.10 L76.5,462.19 L77.0,455.48 L77.5,448.03 L78.0,439.96 L78.5,431.45 L79.0,422.73 L79.5,414.06 L80.0,405.77 L80.5,398.17 L81.0,391.58 L81.5,386.29 L82.0,382.56 L82.5,380.55 L83.0,380.35 L83.5,381.77 L84.0,384.72 L84.5,389.07 L85.0,394.60 L85.5,400.70 L86.0,407.21 L86.5,414.05 L87.0,421.12 L87.5,428.30 L88.0,435.46 L88.5,442.44 L89.0,449.11 L89.5,455.36 L90.0,461.08 L90.5,466.22 L91.0,470.75 L91.5,474.67 L92.0,477.99 L92.5,480.77 L93.0,483.06 L93.5,484.93 L94.0,486.43 L94.5,487.62 L95.0,488.57 L95.5,489.32 L96.0,489.91 L96.5,490.38 L97.0,490.76 L97.5,491.07 L98.0,491.32 L98.5,491.53 L99.0,491.71 L99.5,491.86 L100.0,492.00 L100.5,492.12 L101.0,492.23 L101.5,492.33 L102.0,492.42 L102.5,492.51 L103.0,492.59 L103.5,492.67 L104.0,492.74 L104.5,492.81 L105.0,492.87 L105.5,492.93 L106.0,492.98 L106.5,493.03 L107.0,493.08 L107.5,493.11 L108.0,493.14 L108.5,493.16 L109.0,493.17 L109.5,493.17 L110.0,493.15 L110.5,493.11 L111.0,493.05 L111.5,492.96 L112.0,492.83 L112.5,492.67 L113.0,492.46 L113.5,492.20 L114.0,491.87 L114.5,491.47 L115.0,490.98 L115.5,490.40 L116.0,489.70 L116.5,488.88 L117.0,487.92 L117.5,486.80 L118.0,485.51 L118.5,484.02 L119.0,482.34 L119.5,480.43 L120.0,478.28 L120.5,475.89 L121.0,473.23 L121.5,470.31 L122.0,467.11 L122.5,463.64 L123.0,459.89 L123.5,455.87 L124.0,451.60 L124.5,447.10 L125.0,442.38 L125.5,437.48 L126.0,432.43 L126.5,427.27 L127.0,422.05 L127.5,416.82 L128.0,411.64 L128.5,406.55 L129.0,401.63 L129.5,396.93 L130.0,392.51 L130.5,388.43 L131.0,384.75 L131.5,381.51 L132.0,378.78 L132.5,376.58 L133.0,374.95 L133.5,373.91 L134.0,373.48 L134.5,373.66 L135.0,374.44 L135.5,375.80 L136.0,377.73 L136.5,380.20 L137.0,383.16 L137.5,386.47 L138.0,389.87 L138.5,393.39 L139.0,397.05 L139.5,400.87 L140.0,404.85 L140.5,409.00 L141.0,413.30 L141.5,417.73 L142.0,422.25 L142.5,426.84 L143.0,431.44 L143.5,436.02 L144.0,440.53 L144.5,444.93 L145.0,449.19 L145.5,453.27 L146.0,457.15 L146.5,460.80 L147.0,464.21 L147.5,467.38 L148.0,470.29 L148.5,472.96 L149.0,475.38 L149.5,477.57 L150.0,479.53 L150.5,481.29 L151.0,482.84 L151.5,484.22 L152.0,485.44 L152.5,486.51 L153.0,487.44 L153.5,488.25 L154.0,488.96 L154.5,489.57 L155.0,490.11 L155.5,490.57 L156.0,490.97 L156.5,491.31 L157.0,491.61 L157.5,491.87 L158.0,492.10 L158.5,492.30 L159.0,492.47 L159.5,492.63 L160.0,492.76 L160.5,492.88 L161.0,492.99 L161.5,493.09 L162.0,493.17 L162.5,493.25 L163.0,493.32 L163.5,493.39 L164.0,493.45 L164.5,493.51 L165.0,493.56 L165.5,493.61 L166.0,493.65 L166.5,493.69 L167.0,493.73 L167.5,493.77 L168.0,493.80 L168.5,493.84 L169.0,493.87 L169.5,493.90 L170.0,493.92 L170.5,493.95 L171.0,493.97 L171.5,494.00 L172.0,494.02 L172.5,494.04 L173.0,494.06 L173.5,494.08 L174.0,494.09 L174.5,494.11 L175.0,494.13 L175.5,494.14 L176.0,494.16 L176.5,494.17 L177.0,494.18 L177.5,494.19 L178.0,494.21 L178.5,494.22 L179.0,494.23 L179.5,494.24 L180.0,494.25 L180.5,494.26 L181.0,494.27 L181.5,494.27 L182.0,494.28 L182.5,494.29 L183.0,494.30 L183.5,494.30 L184.0,494.31 L184.5,494.32 L185.0,494.32 L185.5,494.33 L186.0,494.34 L186.5,494.34 L187.0,494.35 L187.5,494.35 L188.0,494.36 L188.5,494.36 L189.0,494.37 L189.5,494.37 L190.0,494.37 L190.5,494.38 L191.0,494.38 L191.5,494.39 L192.0,494.39 L192.5,494.39 L193.0,494.40 L193.5,494.40 L194.0,494.40 L194.5,494.41 L195.0,494.41 L195.5,494.41 L196.0,494.41 L196.5,494.42 L197.0,494.42 L197.5,494.42 L198.0,494.42 L198.5,494.43 L199.0,494.43 L199.5,494.43 L200.0,494.43 L200.5,494.43 L201.0,494.44 L201.5,494.44 L202.0,494.44 L202.5,494.44 L203.0,494.44 L203.5,494.45 L204.0,494.45 L204.5,494.45 L205.0,494.45 L205.5,494.45 L206.0,494.45 L206.5,494.45 L207.0,494.46 L207.5,494.46 L208.0,494.46 L208.5,494.46 L209.0,494.46 L209.5,494.46 L210.0,494.46 L210.5,494.46 L211.0,494.46 L211.5,494.47 L212.0,494.47 L212.5,494.47 L213.0,494.47 L213.5,494.47 L214.0,494.47 L214.5,494.47 L215.0,494.47 L215.5,494.47 L216.0,494.47 L216.5,494.47 L217.0,494.47 L217.5,494.48 L218.0,494.48 L218.5,494.48 L219.0,494.48 L219.5,494.48 L220.0,494.48 L220.5,494.48 L221.0,494.48 L221.5,494.48 L222.0,494.48 L222.5,494.48 L223.0,494.48 L223.5,494.48 L224.0,494.48 L224.5,494.48 L225.0,494.48 L225.5,494.48 L226.0,494.48 L226.5,494.49 L227.0,494.49 L227.5,494.49 L228.0,494.49 L228.5,494.49 L229.0,494.49 L229.5,494.49 L230.0,494.49 L230.5,494.49 L231.0,494.49 L231.5,494.49 L232.0,494.49 L232.5,494.49 L233.0,494.49 L233.5,494.49 L234.0,494.49 L234.5,494.49 L235.0,494.49 L235.5,494.49 L236.0,494.49 L236.5,494.49 L237.0,494.49 L237.5,494.49 L238.0,494.49 L238.5,494.49 L239.0,494.49 L239.5,494.49 L240.0,494.48 L240.5,494.48 L241.0,494.48 L241.5,494.48 L242.0,494.47 L242.5,494.47 L243.0,494.46 L243.5,494.45 L244.0,494.44 L244.5,494.43 L245.0,494.42 L245.5,494.40 L246.0,494.38 L246.5,494.35 L247.0,494.32 L247.5,494.29 L248.0,494.25 L248.5,494.20 L249.0,494.14 L249.5,494.07 L250.0,493.99 L250.5,493.89 L251.0,493.78 L251.5,493.65 L252.0,493.50 L252.5,493.33 L253.0,493.13 L253.5,492.90 L254.0,492.64 L254.5,492.34 L255.0,492.00 L255.5,491.61 L256.0,491.18 L256.5,490.68 L257.0,490.13 L257.5,489.51 L258.0,488.82 L258.5,488.05 L259.0,487.20 L259.5,486.25 L260.0,485.21 L260.5,484.07 L261.0,482.82 L261.5,481.45 L262.0,479.97 L262.5,478.36 L263.0,476.62 L263.5,474.75 L264.0,472.75 L264.5,470.61 L265.0,468.33 L265.5,465.91 L266.0,463.36 L266.5,460.67 L267.0,457.85 L267.5,454.90 L268.0,451.84 L268.5,448.67 L269.0,445.40 L269.5,442.04 L270.0,438.60 L270.5,435.10 L271.0,431.56 L271.5,428.00 L272.0,424.42 L272.5,420.86 L273.0,417.33 L273.5,413.86 L274.0,410.46 L274.5,407.16 L275.0,403.98 L275.5,400.95 L276.0,398.08 L276.5,395.40 L277.0,392.93 L277.5,390.68 L278.0,388.68 L278.5,386.93 L279.0,385.46 L279.5,384.28 L280.0,383.39 L280.5,382.80 L281.0,382.52 L281.5,382.56 L282.0,382.94 L282.5,383.66 L283.0,384.72 L283.5,386.10 L284.0,387.79 L284.5,389.78 L285.0,392.05 L285.5,394.58 L286.0,397.35 L286.5,400.33 L287.0,403.50 L287.5,406.82 L288.0,410.20 L288.5,413.63 L289.0,417.10 L289.5,420.58 L290.0,424.00 L290.5,427.34 L291.0,430.60 L291.5,433.78 L292.0,436.86 L292.5,439.84 L293.0,442.71 L293.5,445.48 L294.0,448.13 L294.5,450.67 L295.0,453.09 L295.5,455.38 L296.0,457.56 L296.5,459.62 L297.0,461.56 L297.5,463.38 L298.0,465.09 L298.5,466.69 L299.0,468.18 L299.5,469.57 L300.0,470.86 L300.5,472.08 L301.0,473.21 L301.5,474.23 L302.0,475.15 L302.5,476.05 L303.0,476.90 L303.5,477.63 L304.0,478.34 L304.5,478.94 L305.0,479.53 L305.5,480.09 L306.0,480.67 L306.5,481.09 L307.0,481.45 L307.5,481.92 L308.0,482.29 L308.5,482.69 L309.0,482.80 L309.5,483.10 L310.0,483.27 L310.5,483.50 L311.0,483.58 L311.5,483.65 L312.0,483.85 L312.5,484.03 L313.0,484.64 L313.5,484.81 L314.0,485.04 L314.5,485.41 L315.0,485.58 L315.5,485.82 L316.0,485.75 L316.5,485.87 L317.0,485.72 L317.5,485.70 L318.0,485.81 L318.5,485.63 L319.0,485.69 L319.5,485.61 L320.0,485.77 L320.5,486.00 L321.0,486.05 L321.5,485.89 L322.0,486.01 L322.5,486.13 L323.0,486.63 L323.5,486.75 L324.0,486.70 L324.5,486.53 L325.0,486.78 L325.5,487.26 L326.0,487.41 L326.5,487.79 L327.0,487.71 L327.5,488.00 L328.0,488.49 L328.5,488.34 L329.0,488.27 L329.5,488.19 L330.0,488.12 L330.5,488.18 L331.0,488.10 L331.5,488.16 L332.0,487.96 L332.5,488.57 L333.0,488.76 L333.5,488.75 L334.0,488.87 L334.5,488.79 L335.0,489.10 L335.5,489.26 L336.0,489.41 L336.5,489.49 L337.0,489.48 L337.5,489.91 L338.0,489.87 L338.5,490.20 L339.0,490.01 L339.5,489.81 L340.0,490.07 L340.5,489.99 L341.0,490.31 L341.5,490.09 L342.0,490.38 L342.5,490.29 L343.0,490.37 L343.5,490.58 L344.0,490.41 L344.5,490.32 L345.0,489.98 L345.5,490.10 L346.0,489.97 L346.5,490.03 L347.0,490.24 L347.5,490.00 L348.0,489.92 L348.5,489.77 L349.0,489.84 L349.5,490.21 L350.0,490.27 L350.5,490.09 L351.0,489.83 L351.5,490.04 L352.0,490.04 L352.5,490.62 L353.0,490.69 L353.5,490.45 L354.0,490.55 L354.5,490.75 L355.0,490.99" fill="none" stroke="#40a8c0" stroke-width="0.8" clip-path="url(#cb)"/>
<path d="M54.5,492.70 L55.0,492.70 L55.5,492.70 L56.0,492.70 L56.5,492.70 L57.0,492.70 L57.5,492.70 L58.0,492.70 L58.5,492.70 L59.0,492.70 L59.5,492.70 L60.0,492.70 L60.5,492.70 L61.0,492.70 L61.5,492.70 L62.0,492.70 L62.5,492.70 L63.0,492.70 L63.5,492.70 L64.0,492.70 L64.5,492.70 L65.0,492.70 L65.5,492.70 L66.0,492.70 L66.5,492.69 L67.0,492.69 L67.5,492.68 L68.0,492.66 L68.5,492.64 L69.0,492.60 L69.5,492.54 L70.0,492.45 L70.5,492.31 L71.0,492.10 L71.5,491.80 L72.0,491.37 L72.5,490.76 L73.0,489.93 L73.5,488.81 L74.0,487.32 L74.5,485.38 L75.0,482.90 L75.5,479.81 L76.0,476.01 L76.5,471.45 L77.0,466.08 L77.5,459.90 L78.0,452.94 L78.5,445.29 L79.0,437.10 L79.5,428.55 L80.0,419.89 L80.5,411.42 L81.0,403.43 L81.5,396.26 L82.0,390.22 L82.5,385.57 L83.0,382.53 L83.5,381.26 L84.0,381.73 L84.5,383.76 L85.0,387.25 L85.5,392.07 L86.0,397.84 L86.5,404.05 L87.0,410.64 L87.5,417.51 L88.0,424.57 L88.5,431.69 L89.0,438.72 L89.5,445.53 L90.0,451.99 L90.5,457.98 L91.0,463.43 L91.5,468.29 L92.0,472.54 L92.5,476.18 L93.0,479.26 L93.5,481.82 L94.0,483.92 L94.5,485.62 L95.0,486.98 L95.5,488.06 L96.0,488.92 L96.5,489.60 L97.0,490.14 L97.5,490.57 L98.0,490.92 L98.5,491.20 L99.0,491.43 L99.5,491.63 L100.0,491.80 L100.5,491.95 L101.0,492.08 L101.5,492.20 L102.0,492.31 L102.5,492.41 L103.0,492.50 L103.5,492.59 L104.0,492.67 L104.5,492.75 L105.0,492.82 L105.5,492.89 L106.0,492.95 L106.5,493.01 L107.0,493.07 L107.5,493.12 L108.0,493.16 L108.5,493.20 L109.0,493.24 L109.5,493.26 L110.0,493.27 L110.5,493.27 L111.0,493.26 L111.5,493.23 L112.0,493.17 L112.5,493.10 L113.0,492.99 L113.5,492.84 L114.0,492.65 L114.5,492.41 L115.0,492.11 L115.5,491.74 L116.0,491.29 L116.5,490.75 L117.0,490.10 L117.5,489.33 L118.0,488.43 L118.5,487.38 L119.0,486.17 L119.5,484.78 L120.0,483.18 L120.5,481.38 L121.0,479.34 L121.5,477.07 L122.0,474.53 L122.5,471.74 L123.0,468.67 L123.5,465.34 L124.0,461.72 L124.5,457.85 L125.0,453.71 L125.5,449.33 L126.0,444.73 L126.5,439.94 L127.0,434.98 L127.5,429.90 L128.0,424.74 L128.5,419.55 L129.0,414.39 L129.5,409.30 L130.0,404.34 L130.5,399.58 L131.0,395.08 L131.5,390.89 L132.0,387.07 L132.5,383.68 L133.0,380.77 L133.5,378.37 L134.0,376.52 L134.5,375.25 L135.0,374.58 L135.5,374.52 L136.0,375.06 L136.5,376.18 L137.0,377.87 L137.5,380.11 L138.0,382.85 L138.5,386.04 L139.0,389.38 L139.5,392.81 L140.0,396.37 L140.5,400.09 L141.0,403.97 L141.5,408.01 L142.0,412.21 L142.5,416.54 L143.0,420.99 L143.5,425.51 L144.0,430.07 L144.5,434.63 L145.0,439.13 L145.5,443.55 L146.0,447.83 L146.5,451.95 L147.0,455.88 L147.5,459.60 L148.0,463.08 L148.5,466.32 L149.0,469.31 L149.5,472.06 L150.0,474.56 L150.5,476.82 L151.0,478.86 L151.5,480.68 L152.0,482.31 L152.5,483.75 L153.0,485.02 L153.5,486.13 L154.0,487.11 L154.5,487.97 L155.0,488.71 L155.5,489.36 L156.0,489.92 L156.5,490.40 L157.0,490.82 L157.5,491.19 L158.0,491.51 L158.5,491.78 L159.0,492.02 L159.5,492.23 L160.0,492.41 L160.5,492.57 L161.0,492.71 L161.5,492.84 L162.0,492.95 L162.5,493.05 L163.0,493.14 L163.5,493.22 L164.0,493.30 L164.5,493.36 L165.0,493.43 L165.5,493.48 L166.0,493.54 L166.5,493.59 L167.0,493.63 L167.5,493.68 L168.0,493.72 L168.5,493.75 L169.0,493.79 L169.5,493.82 L170.0,493.85 L170.5,493.88 L171.0,493.91 L171.5,493.94 L172.0,493.96 L172.5,493.99 L173.0,494.01 L173.5,494.03 L174.0,494.05 L174.5,494.07 L175.0,494.09 L175.5,494.10 L176.0,494.12 L176.5,494.14 L177.0,494.15 L177.5,494.16 L178.0,494.18 L178.5,494.19 L179.0,494.20 L179.5,494.21 L180.0,494.22 L180.5,494.23 L181.0,494.24 L181.5,494.25 L182.0,494.26 L182.5,494.27 L183.0,494.28 L183.5,494.29 L184.0,494.29 L184.5,494.30 L185.0,494.31 L185.5,494.32 L186.0,494.32 L186.5,494.33 L187.0,494.33 L187.5,494.34 L188.0,494.34 L188.5,494.35 L189.0,494.35 L189.5,494.36 L190.0,494.36 L190.5,494.37 L191.0,494.37 L191.5,494.38 L192.0,494.38 L192.5,494.38 L193.0,494.39 L193.5,494.39 L194.0,494.40 L194.5,494.40 L195.0,494.40 L195.5,494.40 L196.0,494.41 L196.5,494.41 L197.0,494.41 L197.5,494.42 L198.0,494.42 L198.5,494.42 L199.0,494.42 L199.5,494.43 L200.0,494.43 L200.5,494.43 L201.0,494.43 L201.5,494.43 L202.0,494.44 L202.5,494.44 L203.0,494.44 L203.5,494.44 L204.0,494.44 L204.5,494.44 L205.0,494.45 L205.5,494.45 L206.0,494.45 L206.5,494.45 L207.0,494.45 L207.5,494.45 L208.0,494.45 L208.5,494.46 L209.0,494.46 L209.5,494.46 L210.0,494.46 L210.5,494.46 L211.0,494.46 L211.5,494.46 L212.0,494.46 L212.5,494.47 L213.0,494.47 L213.5,494.47 L214.0,494.47 L214.5,494.47 L215.0,494.47 L215.5,494.47 L216.0,494.47 L216.5,494.47 L217.0,494.47 L217.5,494.47 L218.0,494.47 L218.5,494.48 L219.0,494.48 L219.5,494.48 L220.0,494.48 L220.5,494.48 L221.0,494.48 L221.5,494.48 L222.0,494.48 L222.5,494.48 L223.0,494.48 L223.5,494.48 L224.0,494.48 L224.5,494.48 L225.0,494.48 L225.5,494.48 L226.0,494.48 L226.5,494.48 L227.0,494.48 L227.5,494.49 L228.0,494.49 L228.5,494.49 L229.0,494.49 L229.5,494.49 L230.0,494.49 L230.5,494.49 L231.0,494.49 L231.5,494.49 L232.0,494.49 L232.5,494.49 L233.0,494.49 L233.5,494.49 L234.0,494.49 L234.5,494.49 L235.0,494.49 L235.5,494.49 L236.0,494.49 L236.5,494.49 L237.0,494.49 L237.5,494.49 L238.0,494.49 L238.5,494.49 L239.0,494.49 L239.5,494.48 L240.0,494.48 L240.5,494.48 L241.0,494.48 L241.5,494.47 L242.0,494.47 L242.5,494.46 L243.0,494.45 L243.5,494.44 L244.0,494.43 L244.5,494.42 L245.0,494.40 L245.5,494.38 L246.0,494.36 L246.5,494.33 L247.0,494.30 L247.5,494.25 L248.0,494.21 L248.5,494.15 L249.0,494.08 L249.5,494.00 L250.0,493.91 L250.5,493.80 L251.0,493.68 L251.5,493.53 L252.0,493.36 L252.5,493.17 L253.0,492.95 L253.5,492.69 L254.0,492.40 L254.5,492.07 L255.0,491.69 L255.5,491.27 L256.0,490.79 L256.5,490.25 L257.0,489.64 L257.5,488.96 L258.0,488.21 L258.5,487.37 L259.0,486.45 L259.5,485.43 L260.0,484.31 L260.5,483.08 L261.0,481.73 L261.5,480.28 L262.0,478.69 L262.5,476.98 L263.0,475.14 L263.5,473.16 L264.0,471.05 L264.5,468.80 L265.0,466.41 L265.5,463.88 L266.0,461.22 L266.5,458.42 L267.0,455.50 L267.5,452.46 L268.0,449.31 L268.5,446.06 L269.0,442.71 L269.5,439.29 L270.0,435.81 L270.5,432.27 L271.0,428.71 L271.5,425.14 L272.0,421.57 L272.5,418.03 L273.0,414.55 L273.5,411.13 L274.0,407.81 L274.5,404.61 L275.0,401.54 L275.5,398.64 L276.0,395.92 L276.5,393.40 L277.0,391.11 L277.5,389.06 L278.0,387.26 L278.5,385.73 L279.0,384.49 L279.5,383.54 L280.0,382.90 L280.5,382.56 L281.0,382.53 L281.5,382.84 L282.0,383.49 L282.5,384.48 L283.0,385.80 L283.5,387.43 L284.0,389.36 L284.5,391.58 L285.0,394.05 L285.5,396.78 L286.0,399.72 L286.5,402.85 L287.0,406.15 L287.5,409.52 L288.0,412.94 L288.5,416.40 L289.0,419.89 L289.5,423.32 L290.0,426.68 L290.5,429.96 L291.0,433.15 L291.5,436.25 L292.0,439.25 L292.5,442.15 L293.0,444.93 L293.5,447.61 L294.0,450.17 L294.5,452.61 L295.0,454.93 L295.5,457.14 L296.0,459.22 L296.5,461.18 L297.0,463.03 L297.5,464.76 L298.0,466.38 L298.5,467.89 L299.0,469.30 L299.5,470.61 L300.0,471.82 L300.5,472.96 L301.0,474.01 L301.5,474.97 L302.0,475.87 L302.5,476.68 L303.0,477.44 L303.5,478.11 L304.0,478.72 L304.5,479.28 L305.0,479.78 L305.5,480.43 L306.0,480.97 L306.5,481.28 L307.0,481.70 L307.5,482.03 L308.0,482.54 L308.5,482.92 L309.0,483.23 L309.5,483.33 L310.0,483.49 L310.5,483.94 L311.0,484.25 L311.5,484.45 L312.0,484.61 L312.5,484.67 L313.0,484.58 L313.5,484.59 L314.0,484.81 L314.5,484.95 L315.0,484.79 L315.5,485.18 L316.0,484.95 L316.5,484.76 L317.0,485.32 L317.5,485.67 L318.0,485.76 L318.5,485.63 L319.0,486.01 L319.5,485.87 L320.0,486.05 L320.5,486.43 L321.0,486.64 L321.5,486.89 L322.0,486.90 L322.5,486.86 L323.0,486.81 L323.5,487.07 L324.0,487.04 L324.5,487.26 L325.0,487.26 L325.5,487.18 L326.0,487.61 L326.5,487.81 L327.0,487.81 L327.5,487.61 L328.0,487.84 L328.5,487.88 L329.0,487.63 L329.5,487.90 L330.0,487.45 L330.5,487.90 L331.0,488.26 L331.5,488.46 L332.0,488.27 L332.5,488.56 L333.0,488.94 L333.5,489.07 L334.0,489.33 L334.5,489.31 L335.0,489.08 L335.5,488.88 L336.0,489.22 L336.5,488.93 L337.0,488.97 L337.5,489.08 L338.0,488.95 L338.5,488.88 L339.0,489.03 L339.5,489.68 L340.0,489.60 L340.5,489.93 L341.0,489.73 L341.5,489.68 L342.0,490.03 L342.5,490.22 L343.0,490.51 L343.5,490.36 L344.0,490.74 L344.5,490.68 L345.0,490.80 L345.5,490.82 L346.0,490.85 L346.5,491.02 L347.0,491.01 L347.5,490.82 L348.0,490.87 L348.5,490.77 L349.0,491.02 L349.5,491.05 L350.0,490.97 L350.5,490.98 L351.0,490.84 L351.5,491.13 L352.0,490.92 L352.5,491.05 L353.0,491.14 L353.5,491.11 L354.0,491.11 L354.5,491.00 L355.0,491.14" fill="none" stroke="#2e8b3a" stroke-width="0.8" clip-path="url(#cb)"/>
<path d="M54.5,492.70 L55.0,492.70 L55.5,492.70 L56.0,492.70 L56.5,492.70 L57.0,492.70 L57.5,492.70 L58.0,492.70 L58.5,492.70 L59.0,492.70 L59.5,492.70 L60.0,492.70 L60.5,492.70 L61.0,492.70 L61.5,492.70 L62.0,492.70 L62.5,492.70 L63.0,492.70 L63.5,492.69 L64.0,492.69 L64.5,492.68 L65.0,492.67 L65.5,492.65 L66.0,492.62 L66.5,492.57 L67.0,492.49 L67.5,492.37 L68.0,492.19 L68.5,491.92 L69.0,491.55 L69.5,491.01 L70.0,490.27 L70.5,489.26 L71.0,487.92 L71.5,486.15 L72.0,483.88 L72.5,481.02 L73.0,477.48 L73.5,473.19 L74.0,468.10 L74.5,462.19 L75.0,455.48 L75.5,448.02 L76.0,439.96 L76.5,431.45 L77.0,422.72 L77.5,414.06 L78.0,405.77 L78.5,398.17 L79.0,391.58 L79.5,386.29 L80.0,382.55 L80.5,380.55 L81.0,380.34 L81.5,381.77 L82.0,384.72 L82.5,389.07 L83.0,394.59 L83.5,400.70 L84.0,407.20 L84.5,414.04 L85.0,421.11 L85.5,428.29 L86.0,435.45 L86.5,442.43 L87.0,449.10 L87.5,455.34 L88.0,461.07 L88.5,466.21 L89.0,470.73 L89.5,474.65 L90.0,477.97 L90.5,480.75 L91.0,483.04 L91.5,484.90 L92.0,486.39 L92.5,487.59 L93.0,488.53 L93.5,489.28 L94.0,489.87 L94.5,490.34 L95.0,490.71 L95.5,491.02 L96.0,491.26 L96.5,491.47 L97.0,491.64 L97.5,491.79 L98.0,491.93 L98.5,492.04 L99.0,492.15 L99.5,492.25 L100.0,492.33 L100.5,492.42 L101.0,492.49 L101.5,492.56 L102.0,492.63 L102.5,492.69 L103.0,492.75 L103.5,492.81 L104.0,492.86 L104.5,492.90 L105.0,492.94 L105.5,492.97 L106.0,493.00 L106.5,493.02 L107.0,493.02 L107.5,493.02 L108.0,493.00 L108.5,492.96 L109.0,492.89 L109.5,492.80 L110.0,492.68 L110.5,492.51 L111.0,492.31 L111.5,492.04 L112.0,491.71 L112.5,491.31 L113.0,490.82 L113.5,490.24 L114.0,489.54 L114.5,488.72 L115.0,487.75 L115.5,486.63 L116.0,485.33 L116.5,483.84 L117.0,482.14 L117.5,480.22 L118.0,478.06 L118.5,475.65 L119.0,472.98 L119.5,470.04 L120.0,466.82 L120.5,463.32 L121.0,459.54 L121.5,455.50 L122.0,451.20 L122.5,446.66 L123.0,441.90 L123.5,436.96 L124.0,431.88 L124.5,426.68 L125.0,421.42 L125.5,416.15 L126.0,410.92 L126.5,405.80 L127.0,400.84 L127.5,396.10 L128.0,391.64 L128.5,387.53 L129.0,383.82 L129.5,380.56 L130.0,377.80 L130.5,375.59 L131.0,373.94 L131.5,372.90 L132.0,372.47 L132.5,372.65 L133.0,373.44 L133.5,374.81 L134.0,376.76 L134.5,379.24 L135.0,382.24 L135.5,385.57 L136.0,389.01 L136.5,392.56 L137.0,396.26 L137.5,400.11 L138.0,404.14 L138.5,408.33 L139.0,412.67 L139.5,417.14 L140.0,421.71 L140.5,426.34 L141.0,430.98 L141.5,435.60 L142.0,440.15 L142.5,444.59 L143.0,448.88 L143.5,452.99 L144.0,456.90 L144.5,460.58 L145.0,464.02 L145.5,467.21 L146.0,470.14 L146.5,472.83 L147.0,475.27 L147.5,477.47 L148.0,479.45 L148.5,481.21 L149.0,482.78 L149.5,484.17 L150.0,485.40 L150.5,486.47 L151.0,487.41 L151.5,488.23 L152.0,488.94 L152.5,489.56 L153.0,490.09 L153.5,490.56 L154.0,490.96 L154.5,491.31 L155.0,491.61 L155.5,491.87 L156.0,492.10 L156.5,492.30 L157.0,492.47 L157.5,492.62 L158.0,492.76 L158.5,492.88 L159.0,492.99 L159.5,493.08 L160.0,493.17 L160.5,493.25 L161.0,493.32 L161.5,493.39 L162.0,493.45 L162.5,493.51 L163.0,493.56 L163.5,493.61 L164.0,493.65 L164.5,493.69 L165.0,493.73 L165.5,493.77 L166.0,493.80 L166.5,493.84 L167.0,493.87 L167.5,493.90 L168.0,493.92 L168.5,493.95 L169.0,493.97 L169.5,494.00 L170.0,494.02 L170.5,494.04 L171.0,494.06 L171.5,494.08 L172.0,494.09 L172.5,494.11 L173.0,494.13 L173.5,494.14 L174.0,494.16 L174.5,494.17 L175.0,494.18 L175.5,494.19 L176.0,494.21 L176.5,494.22 L177.0,494.23 L177.5,494.24 L178.0,494.25 L178.5,494.26 L179.0,494.27 L179.5,494.27 L180.0,494.28 L180.5,494.29 L181.0,494.30 L181.5,494.30 L182.0,494.31 L182.5,494.32 L183.0,494.32 L183.5,494.33 L184.0,494.34 L184.5,494.34 L185.0,494.35 L185.5,494.35 L186.0,494.36 L186.5,494.36 L187.0,494.37 L187.5,494.37 L188.0,494.37 L188.5,494.38 L189.0,494.38 L189.5,494.39 L190.0,494.39 L190.5,494.39 L191.0,494.40 L191.5,494.40 L192.0,494.40 L192.5,494.41 L193.0,494.41 L193.5,494.41 L194.0,494.41 L194.5,494.42 L195.0,494.42 L195.5,494.42 L196.0,494.42 L196.5,494.43 L197.0,494.43 L197.5,494.43 L198.0,494.43 L198.5,494.43 L199.0,494.44 L199.5,494.44 L200.0,494.44 L200.5,494.44 L201.0,494.44 L201.5,494.45 L202.0,494.45 L202.5,494.45 L203.0,494.45 L203.5,494.45 L204.0,494.45 L204.5,494.45 L205.0,494.46 L205.5,494.46 L206.0,494.46 L206.5,494.46 L207.0,494.46 L207.5,494.46 L208.0,494.46 L208.5,494.46 L209.0,494.46 L209.5,494.47 L210.0,494.47 L210.5,494.47 L211.0,494.47 L211.5,494.47 L212.0,494.47 L212.5,494.47 L213.0,494.47 L213.5,494.47 L214.0,494.47 L214.5,494.47 L215.0,494.47 L215.5,494.48 L216.0,494.48 L216.5,494.48 L217.0,494.48 L217.5,494.48 L218.0,494.48 L218.5,494.48 L219.0,494.48 L219.5,494.48 L220.0,494.48 L220.5,494.48 L221.0,494.48 L221.5,494.48 L222.0,494.48 L222.5,494.48 L223.0,494.48 L223.5,494.48 L224.0,494.48 L224.5,494.49 L225.0,494.49 L225.5,494.49 L226.0,494.49 L226.5,494.49 L227.0,494.49 L227.5,494.49 L228.0,494.49 L228.5,494.49 L229.0,494.49 L229.5,494.49 L230.0,494.49 L230.5,494.49 L231.0,494.49 L231.5,494.49 L232.0,494.49 L232.5,494.49 L233.0,494.49 L233.5,494.49 L234.0,494.49 L234.5,494.49 L235.0,494.49 L235.5,494.49 L236.0,494.49 L236.5,494.49 L237.0,494.49 L237.5,494.49 L238.0,494.49 L238.5,494.49 L239.0,494.49 L239.5,494.49 L240.0,494.49 L240.5,494.49 L241.0,494.49 L241.5,494.49 L242.0,494.48 L242.5,494.48 L243.0,494.48 L243.5,494.48 L244.0,494.47 L244.5,494.47 L245.0,494.46 L245.5,494.45 L246.0,494.44 L246.5,494.43 L247.0,494.42 L247.5,494.40 L248.0,494.38 L248.5,494.35 L249.0,494.32 L249.5,494.28 L250.0,494.24 L250.5,494.19 L251.0,494.13 L251.5,494.06 L252.0,493.98 L252.5,493.88 L253.0,493.77 L253.5,493.64 L254.0,493.49 L254.5,493.31 L255.0,493.11 L255.5,492.88 L256.0,492.62 L256.5,492.31 L257.0,491.97 L257.5,491.58 L258.0,491.14 L258.5,490.65 L259.0,490.09 L259.5,489.47 L260.0,488.78 L260.5,488.00 L261.0,487.15 L261.5,486.20 L262.0,485.16 L262.5,484.02 L263.0,482.77 L263.5,481.40 L264.0,479.92 L264.5,478.32 L265.0,476.59 L265.5,474.72 L266.0,472.73 L266.5,470.60 L267.0,468.33 L267.5,465.93 L268.0,463.40 L268.5,460.73 L269.0,457.94 L269.5,455.02 L270.0,451.99 L270.5,448.85 L271.0,445.62 L271.5,442.30 L272.0,438.92 L272.5,435.47 L273.0,431.99 L273.5,428.48 L274.0,424.97 L274.5,421.48 L275.0,418.02 L275.5,414.62 L276.0,411.30 L276.5,408.09 L277.0,404.99 L277.5,402.04 L278.0,399.26 L278.5,396.67 L279.0,394.28 L279.5,392.12 L280.0,390.20 L280.5,388.54 L281.0,387.15 L281.5,386.05 L282.0,385.23 L282.5,384.72 L283.0,384.51 L283.5,384.61 L284.0,385.05 L284.5,385.82 L285.0,386.92 L285.5,388.34 L286.0,390.06 L286.5,392.08 L287.0,394.36 L287.5,396.89 L288.0,399.65 L288.5,402.62 L289.0,405.77 L289.5,409.05 L290.0,412.38 L290.5,415.75 L291.0,419.16 L291.5,422.56 L292.0,425.90 L292.5,429.16 L293.0,432.34 L293.5,435.43 L294.0,438.42 L294.5,441.32 L295.0,444.11 L295.5,446.79 L296.0,449.36 L296.5,451.82 L297.0,454.16 L297.5,456.38 L298.0,458.49 L298.5,460.48 L299.0,462.35 L299.5,464.11 L300.0,465.76 L300.5,467.30 L301.0,468.75 L301.5,470.06 L302.0,471.29 L302.5,472.41 L303.0,473.43 L303.5,474.44 L304.0,475.34 L304.5,476.17 L305.0,476.91 L305.5,477.66 L306.0,478.37 L306.5,478.95 L307.0,479.41 L307.5,479.88 L308.0,480.32 L308.5,480.68 L309.0,481.14 L309.5,481.45 L310.0,481.79 L310.5,482.12 L311.0,482.68 L311.5,482.99 L312.0,483.10 L312.5,483.55 L313.0,483.83 L313.5,484.10 L314.0,484.30 L314.5,484.63 L315.0,484.94 L315.5,484.96 L316.0,485.26 L316.5,485.30 L317.0,485.43 L317.5,485.35 L318.0,485.71 L318.5,485.59 L319.0,485.19 L319.5,485.50 L320.0,485.81 L320.5,485.40 L321.0,485.53 L321.5,485.80 L322.0,485.76 L322.5,485.91 L323.0,486.25 L323.5,486.45 L324.0,486.48 L324.5,486.60 L325.0,486.74 L325.5,487.20 L326.0,487.42 L326.5,487.56 L327.0,487.42 L327.5,487.27 L328.0,487.47 L328.5,487.90 L329.0,488.25 L329.5,488.06 L330.0,488.12 L330.5,488.36 L331.0,488.64 L331.5,488.78 L332.0,488.66 L332.5,489.06 L333.0,488.90 L333.5,488.86 L334.0,488.68 L334.5,488.84 L335.0,488.85 L335.5,488.78 L336.0,489.07 L336.5,488.69 L337.0,488.64 L337.5,488.53 L338.0,488.73 L338.5,488.48 L339.0,488.69 L339.5,488.71 L340.0,488.60 L340.5,488.58 L341.0,488.92 L341.5,489.25 L342.0,489.50 L342.5,489.99 L343.0,490.13 L343.5,490.03 L344.0,490.20 L344.5,490.38 L345.0,490.48 L345.5,490.48 L346.0,490.10 L346.5,489.74 L347.0,489.51 L347.5,489.94 L348.0,489.82 L348.5,489.96 L349.0,489.77 L349.5,489.82 L350.0,490.21 L350.5,490.87 L351.0,491.29 L351.5,490.83 L352.0,490.81 L352.5,491.06 L353.0,491.17 L353.5,491.25 L354.0,491.19 L354.5,490.86 L355.0,490.67" fill="none" stroke="#d03030" stroke-width="0.8" clip-path="url(#cb)"/>
<path d="M54.5,492.70 L55.0,492.70 L55.5,492.70 L56.0,492.70 L56.5,492.70 L57.0,492.70 L57.5,492.70 L58.0,492.70 L58.5,492.70 L59.0,492.70 L59.5,492.70 L60.0,492.70 L60.5,492.70 L61.0,492.70 L61.5,492.70 L62.0,492.70 L62.5,492.70 L63.0,492.69 L63.5,492.69 L64.0,492.68 L64.5,492.67 L65.0,492.65 L65.5,492.61 L66.0,492.56 L66.5,492.47 L67.0,492.34 L67.5,492.15 L68.0,491.87 L68.5,491.47 L69.0,490.91 L69.5,490.14 L70.0,489.09 L70.5,487.69 L71.0,485.86 L71.5,483.52 L72.0,480.59 L72.5,476.97 L73.0,472.60 L73.5,467.44 L74.0,461.47 L74.5,454.73 L75.0,447.28 L75.5,439.25 L76.0,430.83 L76.5,422.25 L77.0,413.79 L77.5,405.75 L78.0,398.46 L78.5,392.22 L79.0,387.32 L79.5,383.98 L80.0,382.36 L80.5,382.49 L81.0,384.20 L81.5,387.38 L82.0,391.91 L82.5,397.50 L83.0,403.57 L83.5,410.01 L84.0,416.77 L84.5,423.73 L85.0,430.77 L85.5,437.76 L86.0,444.56 L86.5,451.03 L87.0,457.07 L87.5,462.58 L88.0,467.51 L88.5,471.84 L89.0,475.57 L89.5,478.73 L90.0,481.37 L90.5,483.53 L91.0,485.29 L91.5,486.70 L92.0,487.83 L92.5,488.72 L93.0,489.42 L93.5,489.98 L94.0,490.42 L94.5,490.77 L95.0,491.06 L95.5,491.30 L96.0,491.49 L96.5,491.66 L97.0,491.81 L97.5,491.93 L98.0,492.05 L98.5,492.15 L99.0,492.24 L99.5,492.33 L100.0,492.41 L100.5,492.49 L101.0,492.56 L101.5,492.63 L102.0,492.69 L102.5,492.75 L103.0,492.81 L103.5,492.87 L104.0,492.92 L104.5,492.98 L105.0,493.03 L105.5,493.08 L106.0,493.13 L106.5,493.17 L107.0,493.21 L107.5,493.26 L108.0,493.29 L108.5,493.33 L109.0,493.36 L109.5,493.38 L110.0,493.40 L110.5,493.40 L111.0,493.40 L111.5,493.38 L112.0,493.35 L112.5,493.29 L113.0,493.21 L113.5,493.11 L114.0,492.96 L114.5,492.78 L115.0,492.55 L115.5,492.26 L116.0,491.90 L116.5,491.47 L117.0,490.95 L117.5,490.32 L118.0,489.58 L118.5,488.72 L119.0,487.70 L119.5,486.53 L120.0,485.18 L120.5,483.64 L121.0,481.89 L121.5,479.92 L122.0,477.71 L122.5,475.25 L123.0,472.53 L123.5,469.54 L124.0,466.28 L124.5,462.75 L125.0,458.96 L125.5,454.90 L126.0,450.61 L126.5,446.09 L127.0,441.37 L127.5,436.48 L128.0,431.47 L128.5,426.36 L129.0,421.22 L129.5,416.08 L130.0,411.01 L130.5,406.07 L131.0,401.30 L131.5,396.78 L132.0,392.56 L132.5,388.70 L133.0,385.25 L133.5,382.26 L134.0,379.77 L134.5,377.83 L135.0,376.45 L135.5,375.67 L136.0,375.49 L136.5,375.90 L137.0,376.90 L137.5,378.47 L138.0,380.58 L138.5,383.20 L139.0,386.30 L139.5,389.58 L140.0,392.96 L140.5,396.46 L141.0,400.11 L141.5,403.91 L142.0,407.88 L142.5,412.01 L143.0,416.27 L143.5,420.66 L144.0,425.13 L144.5,429.64 L145.0,434.16 L145.5,438.64 L146.0,443.04 L146.5,447.31 L147.0,451.44 L147.5,455.38 L148.0,459.11 L148.5,462.61 L149.0,465.87 L149.5,468.89 L150.0,471.67 L150.5,474.20 L151.0,476.49 L151.5,478.56 L152.0,480.41 L152.5,482.06 L153.0,483.53 L153.5,484.82 L154.0,485.96 L154.5,486.96 L155.0,487.83 L155.5,488.59 L156.0,489.25 L156.5,489.83 L157.0,490.32 L157.5,490.76 L158.0,491.13 L158.5,491.45 L159.0,491.73 L159.5,491.98 L160.0,492.19 L160.5,492.38 L161.0,492.54 L161.5,492.69 L162.0,492.81 L162.5,492.93 L163.0,493.03 L163.5,493.12 L164.0,493.21 L164.5,493.28 L165.0,493.35 L165.5,493.41 L166.0,493.47 L166.5,493.53 L167.0,493.58 L167.5,493.62 L168.0,493.67 L168.5,493.71 L169.0,493.75 L169.5,493.78 L170.0,493.82 L170.5,493.85 L171.0,493.88 L171.5,493.91 L172.0,493.93 L172.5,493.96 L173.0,493.98 L173.5,494.00 L174.0,494.03 L174.5,494.05 L175.0,494.07 L175.5,494.08 L176.0,494.10 L176.5,494.12 L177.0,494.13 L177.5,494.15 L178.0,494.16 L178.5,494.17 L179.0,494.19 L179.5,494.20 L180.0,494.21 L180.5,494.22 L181.0,494.23 L181.5,494.24 L182.0,494.25 L182.5,494.26 L183.0,494.27 L183.5,494.28 L184.0,494.29 L184.5,494.29 L185.0,494.30 L185.5,494.31 L186.0,494.31 L186.5,494.32 L187.0,494.33 L187.5,494.33 L188.0,494.34 L188.5,494.34 L189.0,494.35 L189.5,494.35 L190.0,494.36 L190.5,494.36 L191.0,494.37 L191.5,494.37 L192.0,494.38 L192.5,494.38 L193.0,494.38 L193.5,494.39 L194.0,494.39 L194.5,494.39 L195.0,494.40 L195.5,494.40 L196.0,494.40 L196.5,494.41 L197.0,494.41 L197.5,494.41 L198.0,494.42 L198.5,494.42 L199.0,494.42 L199.5,494.42 L200.0,494.42 L200.5,494.43 L201.0,494.43 L201.5,494.43 L202.0,494.43 L202.5,494.44 L203.0,494.44 L203.5,494.44 L204.0,494.44 L204.5,494.44 L205.0,494.44 L205.5,494.45 L206.0,494.45 L206.5,494.45 L207.0,494.45 L207.5,494.45 L208.0,494.45 L208.5,494.45 L209.0,494.46 L209.5,494.46 L210.0,494.46 L210.5,494.46 L211.0,494.46 L211.5,494.46 L212.0,494.46 L212.5,494.46 L213.0,494.46 L213.5,494.47 L214.0,494.47 L214.5,494.47 L215.0,494.47 L215.5,494.47 L216.0,494.47 L216.5,494.47 L217.0,494.47 L217.5,494.47 L218.0,494.47 L218.5,494.47 L219.0,494.48 L219.5,494.48 L220.0,494.48 L220.5,494.48 L221.0,494.48 L221.5,494.48 L222.0,494.48 L222.5,494.48 L223.0,494.48 L223.5,494.48 L224.0,494.48 L224.5,494.48 L225.0,494.48 L225.5,494.48 L226.0,494.48 L226.5,494.48 L227.0,494.48 L227.5,494.48 L228.0,494.48 L228.5,494.49 L229.0,494.49 L229.5,494.49 L230.0,494.49 L230.5,494.49 L231.0,494.49 L231.5,494.49 L232.0,494.49 L232.5,494.49 L233.0,494.49 L233.5,494.49 L234.0,494.49 L234.5,494.49 L235.0,494.49 L235.5,494.49 L236.0,494.49 L236.5,494.49 L237.0,494.49 L237.5,494.49 L238.0,494.49 L238.5,494.49 L239.0,494.49 L239.5,494.49 L240.0,494.49 L240.5,494.49 L241.0,494.48 L241.5,494.48 L242.0,494.48 L242.5,494.48 L243.0,494.47 L243.5,494.47 L244.0,494.46 L244.5,494.45 L245.0,494.44 L245.5,494.43 L246.0,494.42 L246.5,494.40 L247.0,494.38 L247.5,494.35 L248.0,494.32 L248.5,494.29 L249.0,494.25 L249.5,494.20 L250.0,494.14 L250.5,494.07 L251.0,493.99 L251.5,493.90 L252.0,493.79 L252.5,493.66 L253.0,493.51 L253.5,493.34 L254.0,493.14 L254.5,492.91 L255.0,492.65 L255.5,492.36 L256.0,492.02 L256.5,491.64 L257.0,491.21 L257.5,490.72 L258.0,490.17 L258.5,489.56 L259.0,488.87 L259.5,488.11 L260.0,487.26 L260.5,486.33 L261.0,485.29 L261.5,484.16 L262.0,482.92 L262.5,481.57 L263.0,480.10 L263.5,478.50 L264.0,476.78 L264.5,474.93 L265.0,472.94 L265.5,470.82 L266.0,468.56 L266.5,466.17 L267.0,463.64 L267.5,460.97 L268.0,458.18 L268.5,455.26 L269.0,452.22 L269.5,449.08 L270.0,445.83 L270.5,442.50 L271.0,439.10 L271.5,435.63 L272.0,432.13 L272.5,428.59 L273.0,425.05 L273.5,421.52 L274.0,418.02 L274.5,414.58 L275.0,411.21 L275.5,407.94 L276.0,404.79 L276.5,401.78 L277.0,398.94 L277.5,396.29 L278.0,393.83 L278.5,391.61 L279.0,389.62 L279.5,387.89 L280.0,386.44 L280.5,385.26 L281.0,384.38 L281.5,383.80 L282.0,383.52 L282.5,383.56 L283.0,383.94 L283.5,384.65 L284.0,385.70 L284.5,387.07 L285.0,388.74 L285.5,390.72 L286.0,392.97 L286.5,395.47 L287.0,398.21 L287.5,401.17 L288.0,404.31 L288.5,407.60 L289.0,410.96 L289.5,414.35 L290.0,417.79 L290.5,421.23 L291.0,424.62 L291.5,427.93 L292.0,431.16 L292.5,434.30 L293.0,437.34 L293.5,440.29 L294.0,443.14 L294.5,445.87 L295.0,448.49 L295.5,451.00 L296.0,453.39 L296.5,455.67 L297.0,457.82 L297.5,459.86 L298.0,461.77 L298.5,463.58 L299.0,465.27 L299.5,466.85 L300.0,468.32 L300.5,469.70 L301.0,471.00 L301.5,472.21 L302.0,473.32 L302.5,474.34 L303.0,475.26 L303.5,476.19 L304.0,477.00 L304.5,477.74 L305.0,478.41 L305.5,478.91 L306.0,479.48 L306.5,480.06 L307.0,480.63 L307.5,480.95 L308.0,481.25 L308.5,481.59 L309.0,481.95 L309.5,482.45 L310.0,482.72 L310.5,482.90 L311.0,483.10 L311.5,483.26 L312.0,483.71 L312.5,484.13 L313.0,484.21 L313.5,484.30 L314.0,484.44 L314.5,484.51 L315.0,484.51 L315.5,484.69 L316.0,484.72 L316.5,484.65 L317.0,484.81 L317.5,485.16 L318.0,485.51 L318.5,485.69 L319.0,486.30 L319.5,486.72 L320.0,486.72 L320.5,486.76 L321.0,487.00 L321.5,487.05 L322.0,487.21 L322.5,487.30 L323.0,487.18 L323.5,486.81 L324.0,487.05 L324.5,487.45 L325.0,487.24 L325.5,487.55 L326.0,487.63 L326.5,487.53 L327.0,487.60 L327.5,487.93 L328.0,488.01 L328.5,487.94 L329.0,488.10 L329.5,488.05 L330.0,487.96 L330.5,488.19 L331.0,488.14 L331.5,488.10 L332.0,487.87 L332.5,487.58 L333.0,488.06 L333.5,487.99 L334.0,488.02 L334.5,488.33 L335.0,488.60 L335.5,488.65 L336.0,489.05 L336.5,488.98 L337.0,488.85 L337.5,489.13 L338.0,489.32 L338.5,489.18 L339.0,489.00 L339.5,489.06 L340.0,489.03 L340.5,489.20 L341.0,488.82 L341.5,488.86 L342.0,489.00 L342.5,489.15 L343.0,489.40 L343.5,489.63 L344.0,489.51 L344.5,489.84 L345.0,490.35 L345.5,490.22 L346.0,490.47 L346.5,490.53 L347.0,490.47 L347.5,490.46 L348.0,490.85 L348.5,490.92 L349.0,490.89 L349.5,491.08 L350.0,490.79 L350.5,490.53 L351.0,490.81 L351.5,490.89 L352.0,490.41 L352.5,490.39 L353.0,490.54 L353.5,490.25 L354.0,490.35 L354.5,490.66 L355.0,490.54" fill="none" stroke="#e8d840" stroke-width="0.9" stroke-dasharray="1.5,1.5" clip-path="url(#cb)"/>
<path d="M54.5,492.70 L55.0,492.70 L55.5,492.70 L56.0,492.70 L56.5,492.70 L57.0,492.70 L57.5,492.70 L58.0,492.70 L58.5,492.70 L59.0,492.70 L59.5,492.70 L60.0,492.70 L60.5,492.70 L61.0,492.70 L61.5,492.70 L62.0,492.70 L62.5,492.70 L63.0,492.70 L63.5,492.70 L64.0,492.70 L64.5,492.70 L65.0,492.70 L65.5,492.70 L66.0,492.69 L66.5,492.69 L67.0,492.68 L67.5,492.67 L68.0,492.65 L68.5,492.61 L69.0,492.55 L69.5,492.47 L70.0,492.34 L70.5,492.14 L71.0,491.86 L71.5,491.45 L72.0,490.88 L72.5,490.09 L73.0,489.02 L73.5,487.60 L74.0,485.74 L74.5,483.36 L75.0,480.37 L75.5,476.68 L76.0,472.24 L76.5,466.99 L77.0,460.91 L77.5,454.04 L78.0,446.46 L78.5,438.29 L79.0,429.71 L79.5,420.98 L80.0,412.37 L80.5,404.19 L81.0,396.76 L81.5,390.41 L82.0,385.42 L82.5,382.02 L83.0,380.37 L83.5,380.51 L84.0,382.25 L84.5,385.49 L85.0,390.10 L85.5,395.79 L86.0,401.98 L86.5,408.56 L87.0,415.45 L87.5,422.56 L88.0,429.74 L88.5,436.88 L89.0,443.81 L89.5,450.40 L90.0,456.55 L90.5,462.16 L91.0,467.18 L91.5,471.59 L92.0,475.38 L92.5,478.60 L93.0,481.27 L93.5,483.47 L94.0,485.26 L94.5,486.69 L95.0,487.84 L95.5,488.74 L96.0,489.46 L96.5,490.03 L97.0,490.48 L97.5,490.84 L98.0,491.13 L98.5,491.38 L99.0,491.58 L99.5,491.75 L100.0,491.91 L100.5,492.04 L101.0,492.16 L101.5,492.27 L102.0,492.37 L102.5,492.47 L103.0,492.55 L103.5,492.64 L104.0,492.71 L104.5,492.79 L105.0,492.86 L105.5,492.92 L106.0,492.99 L106.5,493.05 L107.0,493.11 L107.5,493.16 L108.0,493.21 L108.5,493.26 L109.0,493.30 L109.5,493.34 L110.0,493.37 L110.5,493.39 L111.0,493.41 L111.5,493.41 L112.0,493.40 L112.5,493.38 L113.0,493.33 L113.5,493.26 L114.0,493.17 L114.5,493.04 L115.0,492.87 L115.5,492.65 L116.0,492.38 L116.5,492.05 L117.0,491.64 L117.5,491.14 L118.0,490.55 L118.5,489.85 L119.0,489.02 L119.5,488.05 L120.0,486.92 L120.5,485.62 L121.0,484.14 L121.5,482.44 L122.0,480.53 L122.5,478.38 L123.0,475.98 L123.5,473.32 L124.0,470.39 L124.5,467.18 L125.0,463.70 L125.5,459.95 L126.0,455.93 L126.5,451.66 L127.0,447.15 L127.5,442.43 L128.0,437.52 L128.5,432.47 L129.0,427.31 L129.5,422.09 L130.0,416.86 L130.5,411.67 L131.0,406.58 L131.5,401.66 L132.0,396.95 L132.5,392.53 L133.0,388.45 L133.5,384.77 L134.0,381.53 L134.5,378.79 L135.0,376.59 L135.5,374.96 L136.0,373.92 L136.5,373.49 L137.0,373.67 L137.5,374.45 L138.0,375.81 L138.5,377.74 L139.0,380.20 L139.5,383.17 L140.0,386.48 L140.5,389.88 L141.0,393.40 L141.5,397.05 L142.0,400.87 L142.5,404.86 L143.0,409.01 L143.5,413.31 L144.0,417.73 L144.5,422.26 L145.0,426.84 L145.5,431.44 L146.0,436.02 L146.5,440.53 L147.0,444.94 L147.5,449.19 L148.0,453.27 L148.5,457.15 L149.0,460.80 L149.5,464.21 L150.0,467.38 L150.5,470.29 L151.0,472.96 L151.5,475.38 L152.0,477.57 L152.5,479.53 L153.0,481.29 L153.5,482.84 L154.0,484.22 L154.5,485.44 L155.0,486.51 L155.5,487.44 L156.0,488.25 L156.5,488.96 L157.0,489.57 L157.5,490.11 L158.0,490.57 L158.5,490.97 L159.0,491.31 L159.5,491.61 L160.0,491.88 L160.5,492.10 L161.0,492.30 L161.5,492.47 L162.0,492.63 L162.5,492.76 L163.0,492.88 L163.5,492.99 L164.0,493.09 L164.5,493.17 L165.0,493.25 L165.5,493.32 L166.0,493.39 L166.5,493.45 L167.0,493.51 L167.5,493.56 L168.0,493.61 L168.5,493.65 L169.0,493.69 L169.5,493.73 L170.0,493.77 L170.5,493.80 L171.0,493.84 L171.5,493.87 L172.0,493.90 L172.5,493.92 L173.0,493.95 L173.5,493.97 L174.0,494.00 L174.5,494.02 L175.0,494.04 L175.5,494.06 L176.0,494.08 L176.5,494.09 L177.0,494.11 L177.5,494.13 L178.0,494.14 L178.5,494.16 L179.0,494.17 L179.5,494.18 L180.0,494.19 L180.5,494.21 L181.0,494.22 L181.5,494.23 L182.0,494.24 L182.5,494.25 L183.0,494.26 L183.5,494.27 L184.0,494.27 L184.5,494.28 L185.0,494.29 L185.5,494.30 L186.0,494.30 L186.5,494.31 L187.0,494.32 L187.5,494.32 L188.0,494.33 L188.5,494.34 L189.0,494.34 L189.5,494.35 L190.0,494.35 L190.5,494.36 L191.0,494.36 L191.5,494.37 L192.0,494.37 L192.5,494.37 L193.0,494.38 L193.5,494.38 L194.0,494.39 L194.5,494.39 L195.0,494.39 L195.5,494.40 L196.0,494.40 L196.5,494.40 L197.0,494.41 L197.5,494.41 L198.0,494.41 L198.5,494.41 L199.0,494.42 L199.5,494.42 L200.0,494.42 L200.5,494.42 L201.0,494.43 L201.5,494.43 L202.0,494.43 L202.5,494.43 L203.0,494.43 L203.5,494.44 L204.0,494.44 L204.5,494.44 L205.0,494.44 L205.5,494.44 L206.0,494.45 L206.5,494.45 L207.0,494.45 L207.5,494.45 L208.0,494.45 L208.5,494.45 L209.0,494.45 L209.5,494.46 L210.0,494.46 L210.5,494.46 L211.0,494.46 L211.5,494.46 L212.0,494.46 L212.5,494.46 L213.0,494.46 L213.5,494.46 L214.0,494.47 L214.5,494.47 L215.0,494.47 L215.5,494.47 L216.0,494.47 L216.5,494.47 L217.0,494.47 L217.5,494.47 L218.0,494.47 L218.5,494.47 L219.0,494.47 L219.5,494.47 L220.0,494.48 L220.5,494.48 L221.0,494.48 L221.5,494.48 L222.0,494.48 L222.5,494.48 L223.0,494.48 L223.5,494.48 L224.0,494.48 L224.5,494.48 L225.0,494.48 L225.5,494.48 L226.0,494.48 L226.5,494.48 L227.0,494.48 L227.5,494.48 L228.0,494.48 L228.5,494.48 L229.0,494.49 L229.5,494.49 L230.0,494.49 L230.5,494.49 L231.0,494.49 L231.5,494.49 L232.0,494.49 L232.5,494.49 L233.0,494.49 L233.5,494.49 L234.0,494.49 L234.5,494.49 L235.0,494.49 L235.5,494.49 L236.0,494.49 L236.5,494.49 L237.0,494.49 L237.5,494.49 L238.0,494.49 L238.5,494.49 L239.0,494.49 L239.5,494.49 L240.0,494.49 L240.5,494.49 L241.0,494.49 L241.5,494.48 L242.0,494.48 L242.5,494.48 L243.0,494.48 L243.5,494.47 L244.0,494.47 L244.5,494.46 L245.0,494.45 L245.5,494.44 L246.0,494.43 L246.5,494.42 L247.0,494.40 L247.5,494.38 L248.0,494.36 L248.5,494.33 L249.0,494.30 L249.5,494.26 L250.0,494.21 L250.5,494.16 L251.0,494.09 L251.5,494.01 L252.0,493.92 L252.5,493.82 L253.0,493.69 L253.5,493.55 L254.0,493.39 L254.5,493.20 L255.0,492.98 L255.5,492.73 L256.0,492.44 L256.5,492.11 L257.0,491.74 L257.5,491.33 L258.0,490.85 L258.5,490.32 L259.0,489.73 L259.5,489.06 L260.0,488.32 L260.5,487.50 L261.0,486.59 L261.5,485.59 L262.0,484.49 L262.5,483.28 L263.0,481.96 L263.5,480.53 L264.0,478.97 L264.5,477.29 L265.0,475.48 L265.5,473.54 L266.0,471.47 L266.5,469.26 L267.0,466.91 L267.5,464.43 L268.0,461.81 L268.5,459.07 L269.0,456.20 L269.5,453.21 L270.0,450.12 L270.5,446.92 L271.0,443.64 L271.5,440.28 L272.0,436.86 L272.5,433.39 L273.0,429.89 L273.5,426.38 L274.0,422.87 L274.5,419.40 L275.0,415.97 L275.5,412.62 L276.0,409.36 L276.5,406.21 L277.0,403.20 L277.5,400.35 L278.0,397.68 L278.5,395.21 L279.0,392.96 L279.5,390.94 L280.0,389.17 L280.5,387.68 L281.0,386.46 L281.5,385.52 L282.0,384.89 L282.5,384.55 L283.0,384.53 L283.5,384.83 L284.0,385.47 L284.5,386.44 L285.0,387.74 L285.5,389.34 L286.0,391.24 L286.5,393.41 L287.0,395.85 L287.5,398.52 L288.0,401.41 L288.5,404.49 L289.0,407.73 L289.5,411.04 L290.0,414.40 L290.5,417.79 L291.0,421.21 L291.5,424.57 L292.0,427.86 L292.5,431.08 L293.0,434.20 L293.5,437.24 L294.0,440.17 L294.5,443.01 L295.0,445.73 L295.5,448.35 L296.0,450.85 L296.5,453.24 L297.0,455.51 L297.5,457.66 L298.0,459.70 L298.5,461.62 L299.0,463.42 L299.5,465.12 L300.0,466.70 L300.5,468.18 L301.0,469.55 L301.5,470.80 L302.0,471.96 L302.5,473.08 L303.0,474.12 L303.5,475.10 L304.0,475.92 L304.5,476.74 L305.0,477.41 L305.5,478.13 L306.0,478.75 L306.5,479.38 L307.0,479.87 L307.5,480.31 L308.0,480.78 L308.5,481.12 L309.0,481.59 L309.5,481.98 L310.0,482.36 L310.5,482.42 L311.0,482.69 L311.5,482.93 L312.0,483.28 L312.5,483.78 L313.0,483.88 L313.5,484.26 L314.0,484.51 L314.5,484.77 L315.0,485.01 L315.5,485.23 L316.0,485.30 L316.5,485.14 L317.0,485.64 L317.5,485.65 L318.0,485.64 L318.5,485.86 L319.0,486.20 L319.5,486.19 L320.0,486.40 L320.5,486.63 L321.0,486.54 L321.5,486.62 L322.0,486.80 L322.5,486.79 L323.0,486.87 L323.5,487.21 L324.0,487.13 L324.5,487.44 L325.0,487.72 L325.5,487.79 L326.0,487.96 L326.5,488.07 L327.0,488.27 L327.5,488.23 L328.0,488.47 L328.5,488.03 L329.0,487.96 L329.5,488.21 L330.0,488.10 L330.5,488.30 L331.0,487.93 L331.5,487.99 L332.0,487.70 L332.5,488.08 L333.0,488.00 L333.5,487.67 L334.0,487.78 L334.5,487.79 L335.0,487.96 L335.5,488.06 L336.0,488.43 L336.5,488.53 L337.0,488.77 L337.5,488.96 L338.0,489.30 L338.5,489.24 L339.0,489.69 L339.5,490.00 L340.0,489.86 L340.5,489.86 L341.0,489.91 L341.5,490.26 L342.0,490.03 L342.5,490.24 L343.0,489.96 L343.5,489.73 L344.0,490.06 L344.5,490.26 L345.0,489.97 L345.5,489.84 L346.0,490.11 L346.5,490.10 L347.0,489.99 L347.5,490.04 L348.0,490.31 L348.5,490.28 L349.0,490.66 L349.5,490.59 L350.0,490.55 L350.5,490.43 L351.0,490.78 L351.5,490.92 L352.0,490.83 L352.5,490.80 L353.0,490.79 L353.5,490.96 L354.0,491.01 L354.5,491.24 L355.0,491.10" fill="none" stroke="#8b4a20" stroke-width="0.9" stroke-dasharray="2,1" clip-path="url(#cb)"/>
<path d="M54.5,492.70 L55.0,492.70 L55.5,492.70 L56.0,492.70 L56.5,492.70 L57.0,492.70 L57.5,492.70 L58.0,492.70 L58.5,492.70 L59.0,492.70 L59.5,492.70 L60.0,492.70 L60.5,492.70 L61.0,492.70 L61.5,492.70 L62.0,492.70 L62.5,492.70 L63.0,492.70 L63.5,492.70 L64.0,492.70 L64.5,492.69 L65.0,492.69 L65.5,492.68 L66.0,492.66 L66.5,492.64 L67.0,492.60 L67.5,492.54 L68.0,492.45 L68.5,492.31 L69.0,492.10 L69.5,491.80 L70.0,491.37 L70.5,490.76 L71.0,489.93 L71.5,488.80 L72.0,487.31 L72.5,485.37 L73.0,482.90 L73.5,479.80 L74.0,476.01 L74.5,471.44 L75.0,466.07 L75.5,459.89 L76.0,452.94 L76.5,445.29 L77.0,437.09 L77.5,428.54 L78.0,419.89 L78.5,411.41 L79.0,403.43 L79.5,396.26 L80.0,390.21 L80.5,385.56 L81.0,382.53 L81.5,381.25 L82.0,381.72 L82.5,383.75 L83.0,387.25 L83.5,392.07 L84.0,397.83 L84.5,404.04 L85.0,410.63 L85.5,417.50 L86.0,424.56 L86.5,431.68 L87.0,438.71 L87.5,445.52 L88.0,451.97 L88.5,457.96 L89.0,463.41 L89.5,468.27 L90.0,472.51 L90.5,476.16 L91.0,479.23 L91.5,481.79 L92.0,483.89 L92.5,485.58 L93.0,486.94 L93.5,488.02 L94.0,488.88 L94.5,489.56 L95.0,490.09 L95.5,490.52 L96.0,490.86 L96.5,491.14 L97.0,491.37 L97.5,491.57 L98.0,491.73 L98.5,491.87 L99.0,492.00 L99.5,492.12 L100.0,492.22 L100.5,492.31 L101.0,492.40 L101.5,492.48 L102.0,492.56 L102.5,492.63 L103.0,492.70 L103.5,492.76 L104.0,492.81 L104.5,492.87 L105.0,492.91 L105.5,492.96 L106.0,492.99 L106.5,493.02 L107.0,493.04 L107.5,493.04 L108.0,493.04 L108.5,493.01 L109.0,492.97 L109.5,492.91 L110.0,492.81 L110.5,492.69 L111.0,492.52 L111.5,492.30 L112.0,492.03 L112.5,491.70 L113.0,491.29 L113.5,490.79 L114.0,490.19 L114.5,489.48 L115.0,488.64 L115.5,487.66 L116.0,486.53 L116.5,485.21 L117.0,483.71 L117.5,482.00 L118.0,480.06 L118.5,477.89 L119.0,475.47 L119.5,472.79 L120.0,469.84 L120.5,466.61 L121.0,463.12 L121.5,459.35 L122.0,455.32 L122.5,451.04 L123.0,446.53 L123.5,441.81 L124.0,436.92 L124.5,431.89 L125.0,426.76 L125.5,421.59 L126.0,416.41 L126.5,411.28 L127.0,406.27 L127.5,401.42 L128.0,396.81 L128.5,392.49 L129.0,388.53 L129.5,384.96 L130.0,381.85 L130.5,379.24 L131.0,377.17 L131.5,375.67 L132.0,374.76 L132.5,374.46 L133.0,374.76 L133.5,375.65 L134.0,377.12 L134.5,379.14 L135.0,381.68 L135.5,384.72 L136.0,388.02 L136.5,391.41 L137.0,394.92 L137.5,398.58 L138.0,402.39 L138.5,406.37 L139.0,410.50 L139.5,414.79 L140.0,419.20 L140.5,423.69 L141.0,428.24 L141.5,432.81 L142.0,437.34 L142.5,441.79 L143.0,446.13 L143.5,450.32 L144.0,454.33 L144.5,458.14 L145.0,461.71 L145.5,465.05 L146.0,468.14 L146.5,470.99 L147.0,473.58 L147.5,475.94 L148.0,478.07 L148.5,479.98 L149.0,481.68 L149.5,483.19 L150.0,484.53 L150.5,485.70 L151.0,486.74 L151.5,487.64 L152.0,488.42 L152.5,489.11 L153.0,489.70 L153.5,490.22 L154.0,490.66 L154.5,491.05 L155.0,491.38 L155.5,491.67 L156.0,491.93 L156.5,492.15 L157.0,492.34 L157.5,492.51 L158.0,492.66 L158.5,492.79 L159.0,492.90 L159.5,493.01 L160.0,493.10 L160.5,493.19 L161.0,493.27 L161.5,493.34 L162.0,493.40 L162.5,493.46 L163.0,493.52 L163.5,493.57 L164.0,493.61 L164.5,493.66 L165.0,493.70 L165.5,493.74 L166.0,493.78 L166.5,493.81 L167.0,493.84 L167.5,493.87 L168.0,493.90 L168.5,493.93 L169.0,493.95 L169.5,493.98 L170.0,494.00 L170.5,494.02 L171.0,494.04 L171.5,494.06 L172.0,494.08 L172.5,494.10 L173.0,494.11 L173.5,494.13 L174.0,494.14 L174.5,494.16 L175.0,494.17 L175.5,494.18 L176.0,494.20 L176.5,494.21 L177.0,494.22 L177.5,494.23 L178.0,494.24 L178.5,494.25 L179.0,494.26 L179.5,494.27 L180.0,494.28 L180.5,494.28 L181.0,494.29 L181.5,494.30 L182.0,494.31 L182.5,494.31 L183.0,494.32 L183.5,494.33 L184.0,494.33 L184.5,494.34 L185.0,494.34 L185.5,494.35 L186.0,494.35 L186.5,494.36 L187.0,494.36 L187.5,494.37 L188.0,494.37 L188.5,494.38 L189.0,494.38 L189.5,494.38 L190.0,494.39 L190.5,494.39 L191.0,494.39 L191.5,494.40 L192.0,494.40 L192.5,494.40 L193.0,494.41 L193.5,494.41 L194.0,494.41 L194.5,494.41 L195.0,494.42 L195.5,494.42 L196.0,494.42 L196.5,494.42 L197.0,494.43 L197.5,494.43 L198.0,494.43 L198.5,494.43 L199.0,494.43 L199.5,494.44 L200.0,494.44 L200.5,494.44 L201.0,494.44 L201.5,494.44 L202.0,494.45 L202.5,494.45 L203.0,494.45 L203.5,494.45 L204.0,494.45 L204.5,494.45 L205.0,494.45 L205.5,494.46 L206.0,494.46 L206.5,494.46 L207.0,494.46 L207.5,494.46 L208.0,494.46 L208.5,494.46 L209.0,494.46 L209.5,494.46 L210.0,494.47 L210.5,494.47 L211.0,494.47 L211.5,494.47 L212.0,494.47 L212.5,494.47 L213.0,494.47 L213.5,494.47 L214.0,494.47 L214.5,494.47 L215.0,494.47 L215.5,494.47 L216.0,494.48 L216.5,494.48 L217.0,494.48 L217.5,494.48 L218.0,494.48 L218.5,494.48 L219.0,494.48 L219.5,494.48 L220.0,494.48 L220.5,494.48 L221.0,494.48 L221.5,494.48 L222.0,494.48 L222.5,494.48 L223.0,494.48 L223.5,494.48 L224.0,494.48 L224.5,494.48 L225.0,494.49 L225.5,494.49 L226.0,494.49 L226.5,494.49 L227.0,494.49 L227.5,494.49 L228.0,494.49 L228.5,494.49 L229.0,494.49 L229.5,494.49 L230.0,494.49 L230.5,494.49 L231.0,494.49 L231.5,494.49 L232.0,494.49 L232.5,494.49 L233.0,494.49 L233.5,494.49 L234.0,494.49 L234.5,494.49 L235.0,494.49 L235.5,494.49 L236.0,494.49 L236.5,494.49 L237.0,494.49 L237.5,494.49 L238.0,494.49 L238.5,494.49 L239.0,494.49 L239.5,494.49 L240.0,494.49 L240.5,494.48 L241.0,494.48 L241.5,494.48 L242.0,494.48 L242.5,494.47 L243.0,494.47 L243.5,494.46 L244.0,494.45 L244.5,494.44 L245.0,494.43 L245.5,494.41 L246.0,494.40 L246.5,494.37 L247.0,494.35 L247.5,494.32 L248.0,494.28 L248.5,494.24 L249.0,494.19 L249.5,494.12 L250.0,494.05 L250.5,493.97 L251.0,493.87 L251.5,493.76 L252.0,493.62 L252.5,493.47 L253.0,493.29 L253.5,493.09 L254.0,492.85 L254.5,492.58 L255.0,492.28 L255.5,491.93 L256.0,491.53 L256.5,491.08 L257.0,490.58 L257.5,490.01 L258.0,489.38 L258.5,488.67 L259.0,487.89 L259.5,487.01 L260.0,486.05 L260.5,484.99 L261.0,483.83 L261.5,482.55 L262.0,481.17 L262.5,479.66 L263.0,478.02 L263.5,476.26 L264.0,474.36 L264.5,472.33 L265.0,470.16 L265.5,467.86 L266.0,465.41 L266.5,462.83 L267.0,460.12 L267.5,457.27 L268.0,454.30 L268.5,451.22 L269.0,448.02 L269.5,444.73 L270.0,441.35 L270.5,437.91 L271.0,434.40 L271.5,430.85 L272.0,427.28 L272.5,423.71 L273.0,420.15 L273.5,416.63 L274.0,413.17 L274.5,409.79 L275.0,406.51 L275.5,403.36 L276.0,400.36 L276.5,397.53 L277.0,394.89 L277.5,392.46 L278.0,390.26 L278.5,388.31 L279.0,386.62 L279.5,385.20 L280.0,384.08 L280.5,383.25 L281.0,382.72 L281.5,382.51 L282.0,382.61 L282.5,383.06 L283.0,383.85 L283.5,384.97 L284.0,386.41 L284.5,388.17 L285.0,390.21 L285.5,392.54 L286.0,395.12 L286.5,397.93 L287.0,400.95 L287.5,404.16 L288.0,407.49 L288.5,410.89 L289.0,414.32 L289.5,417.80 L290.0,421.27 L290.5,424.67 L291.0,428.00 L291.5,431.24 L292.0,434.40 L292.5,437.46 L293.0,440.42 L293.5,443.28 L294.0,446.02 L294.5,448.65 L295.0,451.16 L295.5,453.55 L296.0,455.83 L296.5,457.98 L297.0,460.02 L297.5,461.93 L298.0,463.73 L298.5,465.42 L299.0,467.00 L299.5,468.47 L300.0,469.84 L300.5,471.10 L301.0,472.26 L301.5,473.36 L302.0,474.40 L302.5,475.34 L303.0,476.25 L303.5,476.96 L304.0,477.75 L304.5,478.42 L305.0,479.09 L305.5,479.69 L306.0,480.22 L306.5,480.63 L307.0,480.97 L307.5,481.34 L308.0,481.67 L308.5,481.93 L309.0,482.24 L309.5,482.44 L310.0,482.79 L310.5,483.07 L311.0,483.41 L311.5,483.80 L312.0,484.08 L312.5,484.54 L313.0,484.82 L313.5,485.03 L314.0,485.15 L314.5,485.30 L315.0,485.29 L315.5,485.46 L316.0,485.33 L316.5,485.42 L317.0,485.17 L317.5,485.20 L318.0,485.31 L318.5,485.35 L319.0,485.53 L319.5,485.79 L320.0,485.99 L320.5,485.90 L321.0,486.00 L321.5,486.12 L322.0,486.19 L322.5,486.39 L323.0,486.48 L323.5,486.16 L324.0,486.40 L324.5,486.39 L325.0,486.88 L325.5,486.89 L326.0,486.89 L326.5,486.97 L327.0,487.24 L327.5,487.41 L328.0,487.38 L328.5,487.68 L329.0,487.58 L329.5,487.72 L330.0,487.98 L330.5,488.20 L331.0,488.21 L331.5,488.34 L332.0,488.50 L332.5,488.48 L333.0,488.50 L333.5,488.90 L334.0,488.95 L334.5,489.02 L335.0,488.94 L335.5,489.06 L336.0,489.12 L336.5,489.14 L337.0,489.47 L337.5,489.17 L338.0,488.95 L338.5,488.82 L339.0,489.03 L339.5,489.01 L340.0,489.12 L340.5,489.31 L341.0,489.27 L341.5,489.44 L342.0,489.66 L342.5,489.76 L343.0,489.68 L343.5,489.65 L344.0,489.58 L344.5,489.47 L345.0,489.71 L345.5,489.69 L346.0,490.04 L346.5,490.18 L347.0,490.15 L347.5,490.53 L348.0,490.78 L348.5,490.95 L349.0,490.85 L349.5,490.87 L350.0,490.55 L350.5,490.75 L351.0,491.35 L351.5,491.54 L352.0,491.46 L352.5,491.64 L353.0,491.52 L353.5,491.63 L354.0,491.77 L354.5,491.61 L355.0,491.36" fill="none" stroke="#d8b0e8" stroke-width="0.9" clip-path="url(#cb)"/>
<path d="M54.5,492.70 L55.0,492.70 L55.5,492.70 L56.0,492.70 L56.5,492.70 L57.0,492.70 L57.5,492.70 L58.0,492.70 L58.5,492.70 L59.0,492.70 L59.5,492.70 L60.0,492.70 L60.5,492.70 L61.0,492.70 L61.5,492.70 L62.0,492.70 L62.5,492.70 L63.0,492.70 L63.5,492.69 L64.0,492.69 L64.5,492.68 L65.0,492.66 L65.5,492.63 L66.0,492.59 L66.5,492.52 L67.0,492.42 L67.5,492.27 L68.0,492.04 L68.5,491.71 L69.0,491.25 L69.5,490.60 L70.0,489.70 L70.5,488.50 L71.0,486.91 L71.5,484.86 L72.0,482.24 L72.5,478.98 L73.0,475.00 L73.5,470.23 L74.0,464.65 L74.5,458.25 L75.0,451.09 L75.5,443.25 L76.0,434.89 L76.5,426.22 L77.0,417.50 L77.5,409.02 L78.0,401.10 L78.5,394.07 L79.0,388.23 L79.5,383.85 L80.0,381.13 L80.5,380.21 L81.0,381.01 L81.5,383.36 L82.0,387.17 L82.5,392.28 L83.0,398.20 L83.5,404.55 L84.0,411.27 L84.5,418.26 L85.0,425.41 L85.5,432.60 L86.0,439.66 L86.5,446.47 L87.0,452.90 L87.5,458.84 L88.0,464.22 L88.5,468.99 L89.0,473.15 L89.5,476.70 L90.0,479.70 L90.5,482.17 L91.0,484.20 L91.5,485.83 L92.0,487.14 L92.5,488.18 L93.0,489.00 L93.5,489.65 L94.0,490.16 L94.5,490.57 L95.0,490.90 L95.5,491.16 L96.0,491.38 L96.5,491.57 L97.0,491.73 L97.5,491.87 L98.0,491.99 L98.5,492.10 L99.0,492.20 L99.5,492.29 L100.0,492.37 L100.5,492.45 L101.0,492.52 L101.5,492.59 L102.0,492.65 L102.5,492.71 L103.0,492.76 L103.5,492.81 L104.0,492.86 L104.5,492.90 L105.0,492.93 L105.5,492.95 L106.0,492.97 L106.5,492.97 L107.0,492.97 L107.5,492.94 L108.0,492.90 L108.5,492.83 L109.0,492.73 L109.5,492.60 L110.0,492.44 L110.5,492.22 L111.0,491.95 L111.5,491.61 L112.0,491.20 L112.5,490.69 L113.0,490.09 L113.5,489.38 L114.0,488.54 L114.5,487.55 L115.0,486.40 L115.5,485.08 L116.0,483.57 L116.5,481.84 L117.0,479.89 L117.5,477.71 L118.0,475.27 L118.5,472.56 L119.0,469.59 L119.5,466.34 L120.0,462.82 L120.5,459.02 L121.0,454.96 L121.5,450.65 L122.0,446.10 L122.5,441.35 L123.0,436.42 L123.5,431.35 L124.0,426.18 L124.5,420.96 L125.0,415.74 L125.5,410.57 L126.0,405.51 L126.5,400.63 L127.0,395.99 L127.5,391.63 L128.0,387.63 L128.5,384.04 L129.0,380.90 L129.5,378.27 L130.0,376.18 L130.5,374.67 L131.0,373.75 L131.5,373.45 L132.0,373.75 L132.5,374.65 L133.0,376.13 L133.5,378.17 L134.0,380.74 L134.5,383.80 L135.0,387.13 L135.5,390.56 L136.0,394.10 L136.5,397.79 L137.0,401.65 L137.5,405.66 L138.0,409.84 L138.5,414.17 L139.0,418.62 L139.5,423.16 L140.0,427.75 L140.5,432.36 L141.0,436.93 L141.5,441.42 L142.0,445.80 L142.5,450.02 L143.0,454.06 L143.5,457.89 L144.0,461.50 L144.5,464.86 L145.0,467.98 L145.5,470.84 L146.0,473.46 L146.5,475.83 L147.0,477.98 L147.5,479.90 L148.0,481.61 L148.5,483.13 L149.0,484.48 L149.5,485.66 L150.0,486.70 L150.5,487.61 L151.0,488.40 L151.5,489.09 L152.0,489.69 L152.5,490.20 L153.0,490.65 L153.5,491.04 L154.0,491.38 L154.5,491.67 L155.0,491.92 L155.5,492.14 L156.0,492.34 L156.5,492.51 L157.0,492.65 L157.5,492.79 L158.0,492.90 L158.5,493.01 L159.0,493.10 L159.5,493.19 L160.0,493.27 L160.5,493.34 L161.0,493.40 L161.5,493.46 L162.0,493.52 L162.5,493.57 L163.0,493.61 L163.5,493.66 L164.0,493.70 L164.5,493.74 L165.0,493.78 L165.5,493.81 L166.0,493.84 L166.5,493.87 L167.0,493.90 L167.5,493.93 L168.0,493.95 L168.5,493.98 L169.0,494.00 L169.5,494.02 L170.0,494.04 L170.5,494.06 L171.0,494.08 L171.5,494.10 L172.0,494.11 L172.5,494.13 L173.0,494.14 L173.5,494.16 L174.0,494.17 L174.5,494.18 L175.0,494.20 L175.5,494.21 L176.0,494.22 L176.5,494.23 L177.0,494.24 L177.5,494.25 L178.0,494.26 L178.5,494.27 L179.0,494.28 L179.5,494.28 L180.0,494.29 L180.5,494.30 L181.0,494.31 L181.5,494.31 L182.0,494.32 L182.5,494.33 L183.0,494.33 L183.5,494.34 L184.0,494.34 L184.5,494.35 L185.0,494.35 L185.5,494.36 L186.0,494.36 L186.5,494.37 L187.0,494.37 L187.5,494.38 L188.0,494.38 L188.5,494.38 L189.0,494.39 L189.5,494.39 L190.0,494.39 L190.5,494.40 L191.0,494.40 L191.5,494.40 L192.0,494.41 L192.5,494.41 L193.0,494.41 L193.5,494.41 L194.0,494.42 L194.5,494.42 L195.0,494.42 L195.5,494.42 L196.0,494.43 L196.5,494.43 L197.0,494.43 L197.5,494.43 L198.0,494.43 L198.5,494.44 L199.0,494.44 L199.5,494.44 L200.0,494.44 L200.5,494.44 L201.0,494.45 L201.5,494.45 L202.0,494.45 L202.5,494.45 L203.0,494.45 L203.5,494.45 L204.0,494.45 L204.5,494.46 L205.0,494.46 L205.5,494.46 L206.0,494.46 L206.5,494.46 L207.0,494.46 L207.5,494.46 L208.0,494.46 L208.5,494.46 L209.0,494.47 L209.5,494.47 L210.0,494.47 L210.5,494.47 L211.0,494.47 L211.5,494.47 L212.0,494.47 L212.5,494.47 L213.0,494.47 L213.5,494.47 L214.0,494.47 L214.5,494.47 L215.0,494.48 L215.5,494.48 L216.0,494.48 L216.5,494.48 L217.0,494.48 L217.5,494.48 L218.0,494.48 L218.5,494.48 L219.0,494.48 L219.5,494.48 L220.0,494.48 L220.5,494.48 L221.0,494.48 L221.5,494.48 L222.0,494.48 L222.5,494.48 L223.0,494.48 L223.5,494.48 L224.0,494.49 L224.5,494.49 L225.0,494.49 L225.5,494.49 L226.0,494.49 L226.5,494.49 L227.0,494.49 L227.5,494.49 L228.0,494.49 L228.5,494.49 L229.0,494.49 L229.5,494.49 L230.0,494.49 L230.5,494.49 L231.0,494.49 L231.5,494.49 L232.0,494.49 L232.5,494.49 L233.0,494.49 L233.5,494.49 L234.0,494.49 L234.5,494.49 L235.0,494.49 L235.5,494.49 L236.0,494.49 L236.5,494.49 L237.0,494.49 L237.5,494.49 L238.0,494.49 L238.5,494.49 L239.0,494.49 L239.5,494.49 L240.0,494.49 L240.5,494.49 L241.0,494.49 L241.5,494.48 L242.0,494.48 L242.5,494.48 L243.0,494.47 L243.5,494.47 L244.0,494.46 L244.5,494.46 L245.0,494.45 L245.5,494.44 L246.0,494.42 L246.5,494.41 L247.0,494.39 L247.5,494.36 L248.0,494.34 L248.5,494.30 L249.0,494.26 L249.5,494.22 L250.0,494.16 L250.5,494.10 L251.0,494.02 L251.5,493.93 L252.0,493.83 L252.5,493.71 L253.0,493.56 L253.5,493.40 L254.0,493.21 L254.5,493.00 L255.0,492.75 L255.5,492.46 L256.0,492.14 L256.5,491.77 L257.0,491.36 L257.5,490.89 L258.0,490.36 L258.5,489.77 L259.0,489.11 L259.5,488.37 L260.0,487.55 L260.5,486.64 L261.0,485.64 L261.5,484.54 L262.0,483.33 L262.5,482.01 L263.0,480.58 L263.5,479.02 L264.0,477.33 L264.5,475.52 L265.0,473.57 L265.5,471.48 L266.0,469.26 L266.5,466.90 L267.0,464.40 L267.5,461.76 L268.0,458.99 L268.5,456.10 L269.0,453.08 L269.5,449.95 L270.0,446.72 L270.5,443.39 L271.0,439.98 L271.5,436.51 L272.0,432.98 L272.5,429.43 L273.0,425.85 L273.5,422.28 L274.0,418.74 L274.5,415.24 L275.0,411.81 L275.5,408.47 L276.0,405.24 L276.5,402.14 L277.0,399.21 L277.5,396.45 L278.0,393.89 L278.5,391.55 L279.0,389.45 L279.5,387.60 L280.0,386.02 L280.5,384.72 L281.0,383.71 L281.5,383.00 L282.0,382.60 L282.5,382.51 L283.0,382.75 L283.5,383.33 L284.0,384.26 L284.5,385.51 L285.0,387.08 L285.5,388.95 L286.0,391.11 L286.5,393.54 L287.0,396.21 L287.5,399.11 L288.0,402.21 L288.5,405.48 L289.0,408.84 L289.5,412.26 L290.0,415.71 L290.5,419.19 L291.0,422.64 L291.5,426.01 L292.0,429.31 L292.5,432.52 L293.0,435.64 L293.5,438.66 L294.0,441.58 L294.5,444.39 L295.0,447.08 L295.5,449.67 L296.0,452.13 L296.5,454.48 L297.0,456.70 L297.5,458.81 L298.0,460.80 L298.5,462.67 L299.0,464.42 L299.5,466.06 L300.0,467.60 L300.5,469.02 L301.0,470.35 L301.5,471.58 L302.0,472.74 L302.5,473.75 L303.0,474.70 L303.5,475.61 L304.0,476.49 L304.5,477.21 L305.0,477.86 L305.5,478.49 L306.0,479.00 L306.5,479.71 L307.0,480.25 L307.5,480.88 L308.0,481.24 L308.5,481.74 L309.0,482.18 L309.5,482.62 L310.0,483.08 L310.5,483.20 L311.0,483.33 L311.5,483.48 L312.0,483.62 L312.5,483.59 L313.0,483.63 L313.5,483.69 L314.0,483.70 L314.5,483.98 L315.0,484.20 L315.5,484.34 L316.0,484.63 L316.5,485.09 L317.0,485.42 L317.5,485.60 L318.0,485.68 L318.5,485.72 L319.0,485.83 L319.5,485.44 L320.0,485.49 L320.5,485.26 L321.0,485.34 L321.5,485.54 L322.0,485.92 L322.5,485.99 L323.0,486.11 L323.5,486.44 L324.0,486.50 L324.5,486.80 L325.0,486.80 L325.5,487.11 L326.0,486.92 L326.5,486.88 L327.0,487.07 L327.5,487.33 L328.0,487.37 L328.5,487.49 L329.0,487.68 L329.5,487.58 L330.0,487.66 L330.5,487.87 L331.0,487.79 L331.5,487.72 L332.0,487.83 L332.5,487.86 L333.0,487.88 L333.5,487.71 L334.0,488.00 L334.5,488.00 L335.0,488.19 L335.5,488.50 L336.0,488.92 L336.5,489.04 L337.0,489.43 L337.5,489.80 L338.0,489.73 L338.5,489.85 L339.0,489.85 L339.5,489.80 L340.0,489.56 L340.5,489.53 L341.0,489.37 L341.5,489.59 L342.0,489.50 L342.5,489.63 L343.0,489.88 L343.5,490.02 L344.0,490.15 L344.5,490.36 L345.0,490.27 L345.5,490.18 L346.0,490.57 L346.5,490.74 L347.0,490.79 L347.5,490.53 L348.0,490.43 L348.5,490.34 L349.0,490.46 L349.5,490.38 L350.0,490.23 L350.5,490.02 L351.0,489.93 L351.5,490.33 L352.0,490.75 L352.5,490.88 L353.0,490.83 L353.5,490.85 L354.0,490.95 L354.5,491.11 L355.0,491.15" fill="none" stroke="#5a3a98" stroke-width="0.8" clip-path="url(#cb)"/>
<path d="M54.5,492.70 L55.0,492.70 L55.5,492.70 L56.0,492.70 L56.5,492.70 L57.0,492.70 L57.5,492.70 L58.0,492.70 L58.5,492.70 L59.0,492.70 L59.5,492.70 L60.0,492.70 L60.5,492.70 L61.0,492.70 L61.5,492.70 L62.0,492.70 L62.5,492.70 L63.0,492.70 L63.5,492.70 L64.0,492.70 L64.5,492.70 L65.0,492.69 L65.5,492.69 L66.0,492.68 L66.5,492.66 L67.0,492.63 L67.5,492.59 L68.0,492.52 L68.5,492.42 L69.0,492.27 L69.5,492.04 L70.0,491.71 L70.5,491.25 L71.0,490.60 L71.5,489.70 L72.0,488.50 L72.5,486.91 L73.0,484.86 L73.5,482.24 L74.0,478.98 L74.5,475.00 L75.0,470.24 L75.5,464.65 L76.0,458.26 L76.5,451.09 L77.0,443.25 L77.5,434.89 L78.0,426.22 L78.5,417.50 L79.0,409.02 L79.5,401.11 L80.0,394.07 L80.5,388.23 L81.0,383.85 L81.5,381.14 L82.0,380.22 L82.5,381.01 L83.0,383.36 L83.5,387.17 L84.0,392.28 L84.5,398.21 L85.0,404.56 L85.5,411.28 L86.0,418.27 L86.5,425.42 L87.0,432.60 L87.5,439.67 L88.0,446.48 L88.5,452.91 L89.0,458.85 L89.5,464.23 L90.0,469.01 L90.5,473.16 L91.0,476.72 L91.5,479.71 L92.0,482.19 L92.5,484.22 L93.0,485.85 L93.5,487.16 L94.0,488.20 L94.5,489.02 L95.0,489.67 L95.5,490.19 L96.0,490.60 L96.5,490.93 L97.0,491.20 L97.5,491.42 L98.0,491.61 L98.5,491.77 L99.0,491.92 L99.5,492.04 L100.0,492.15 L100.5,492.26 L101.0,492.35 L101.5,492.44 L102.0,492.52 L102.5,492.60 L103.0,492.67 L103.5,492.74 L104.0,492.81 L104.5,492.87 L105.0,492.93 L105.5,492.98 L106.0,493.04 L106.5,493.09 L107.0,493.13 L107.5,493.17 L108.0,493.20 L108.5,493.23 L109.0,493.25 L109.5,493.25 L110.0,493.25 L110.5,493.23 L111.0,493.19 L111.5,493.13 L112.0,493.04 L112.5,492.93 L113.0,492.77 L113.5,492.57 L114.0,492.31 L114.5,492.00 L115.0,491.61 L115.5,491.14 L116.0,490.57 L116.5,489.89 L117.0,489.10 L117.5,488.16 L118.0,487.07 L118.5,485.82 L119.0,484.37 L119.5,482.72 L120.0,480.86 L120.5,478.76 L121.0,476.41 L121.5,473.81 L122.0,470.94 L122.5,467.80 L123.0,464.37 L123.5,460.68 L124.0,456.71 L124.5,452.49 L125.0,448.03 L125.5,443.35 L126.0,438.49 L126.5,433.46 L127.0,428.32 L127.5,423.11 L128.0,417.88 L128.5,412.68 L129.0,407.57 L129.5,402.61 L130.0,397.85 L130.5,393.37 L131.0,389.22 L131.5,385.45 L132.0,382.13 L132.5,379.29 L133.0,376.98 L133.5,375.23 L134.0,374.07 L134.5,373.52 L135.0,373.58 L135.5,374.24 L136.0,375.49 L136.5,377.30 L137.0,379.66 L137.5,382.53 L138.0,385.80 L138.5,389.19 L139.0,392.68 L139.5,396.31 L140.0,400.09 L140.5,404.04 L141.0,408.16 L141.5,412.43 L142.0,416.84 L142.5,421.34 L143.0,425.92 L143.5,430.52 L144.0,435.11 L144.5,439.64 L145.0,444.06 L145.5,448.35 L146.0,452.47 L146.5,456.39 L147.0,460.09 L147.5,463.55 L148.0,466.76 L148.5,469.73 L149.0,472.44 L149.5,474.91 L150.0,477.15 L150.5,479.16 L151.0,480.95 L151.5,482.55 L152.0,483.96 L152.5,485.21 L153.0,486.30 L153.5,487.26 L154.0,488.10 L154.5,488.83 L155.0,489.46 L155.5,490.01 L156.0,490.48 L156.5,490.89 L157.0,491.25 L157.5,491.56 L158.0,491.83 L158.5,492.06 L159.0,492.26 L159.5,492.44 L160.0,492.60 L160.5,492.74 L161.0,492.86 L161.5,492.97 L162.0,493.07 L162.5,493.16 L163.0,493.24 L163.5,493.31 L164.0,493.38 L164.5,493.44 L165.0,493.49 L165.5,493.55 L166.0,493.60 L166.5,493.64 L167.0,493.68 L167.5,493.72 L168.0,493.76 L168.5,493.80 L169.0,493.83 L169.5,493.86 L170.0,493.89 L170.5,493.92 L171.0,493.94 L171.5,493.97 L172.0,493.99 L172.5,494.01 L173.0,494.03 L173.5,494.05 L174.0,494.07 L174.5,494.09 L175.0,494.11 L175.5,494.12 L176.0,494.14 L176.5,494.15 L177.0,494.17 L177.5,494.18 L178.0,494.19 L178.5,494.20 L179.0,494.22 L179.5,494.23 L180.0,494.24 L180.5,494.25 L181.0,494.26 L181.5,494.26 L182.0,494.27 L182.5,494.28 L183.0,494.29 L183.5,494.30 L184.0,494.30 L184.5,494.31 L185.0,494.32 L185.5,494.32 L186.0,494.33 L186.5,494.33 L187.0,494.34 L187.5,494.35 L188.0,494.35 L188.5,494.36 L189.0,494.36 L189.5,494.37 L190.0,494.37 L190.5,494.37 L191.0,494.38 L191.5,494.38 L192.0,494.39 L192.5,494.39 L193.0,494.39 L193.5,494.40 L194.0,494.40 L194.5,494.40 L195.0,494.41 L195.5,494.41 L196.0,494.41 L196.5,494.41 L197.0,494.42 L197.5,494.42 L198.0,494.42 L198.5,494.42 L199.0,494.43 L199.5,494.43 L200.0,494.43 L200.5,494.43 L201.0,494.43 L201.5,494.44 L202.0,494.44 L202.5,494.44 L203.0,494.44 L203.5,494.44 L204.0,494.44 L204.5,494.45 L205.0,494.45 L205.5,494.45 L206.0,494.45 L206.5,494.45 L207.0,494.45 L207.5,494.45 L208.0,494.46 L208.5,494.46 L209.0,494.46 L209.5,494.46 L210.0,494.46 L210.5,494.46 L211.0,494.46 L211.5,494.46 L212.0,494.47 L212.5,494.47 L213.0,494.47 L213.5,494.47 L214.0,494.47 L214.5,494.47 L215.0,494.47 L215.5,494.47 L216.0,494.47 L216.5,494.47 L217.0,494.47 L217.5,494.47 L218.0,494.48 L218.5,494.48 L219.0,494.48 L219.5,494.48 L220.0,494.48 L220.5,494.48 L221.0,494.48 L221.5,494.48 L222.0,494.48 L222.5,494.48 L223.0,494.48 L223.5,494.48 L224.0,494.48 L224.5,494.48 L225.0,494.48 L225.5,494.48 L226.0,494.48 L226.5,494.48 L227.0,494.49 L227.5,494.49 L228.0,494.49 L228.5,494.49 L229.0,494.49 L229.5,494.49 L230.0,494.49 L230.5,494.49 L231.0,494.49 L231.5,494.49 L232.0,494.49 L232.5,494.49 L233.0,494.49 L233.5,494.49 L234.0,494.49 L234.5,494.49 L235.0,494.49 L235.5,494.49 L236.0,494.49 L236.5,494.49 L237.0,494.49 L237.5,494.49 L238.0,494.49 L238.5,494.49 L239.0,494.49 L239.5,494.49 L240.0,494.49 L240.5,494.48 L241.0,494.48 L241.5,494.48 L242.0,494.48 L242.5,494.47 L243.0,494.47 L243.5,494.46 L244.0,494.45 L244.5,494.44 L245.0,494.43 L245.5,494.42 L246.0,494.40 L246.5,494.38 L247.0,494.36 L247.5,494.33 L248.0,494.30 L248.5,494.25 L249.0,494.21 L249.5,494.15 L250.0,494.08 L250.5,494.00 L251.0,493.91 L251.5,493.80 L252.0,493.68 L252.5,493.53 L253.0,493.37 L253.5,493.17 L254.0,492.95 L254.5,492.69 L255.0,492.40 L255.5,492.07 L256.0,491.69 L256.5,491.27 L257.0,490.79 L257.5,490.25 L258.0,489.64 L258.5,488.96 L259.0,488.21 L259.5,487.37 L260.0,486.45 L260.5,485.43 L261.0,484.31 L261.5,483.08 L262.0,481.74 L262.5,480.28 L263.0,478.69 L263.5,476.98 L264.0,475.14 L264.5,473.16 L265.0,471.05 L265.5,468.80 L266.0,466.41 L266.5,463.88 L267.0,461.22 L267.5,458.42 L268.0,455.50 L268.5,452.46 L269.0,449.31 L269.5,446.06 L270.0,442.71 L270.5,439.29 L271.0,435.81 L271.5,432.27 L272.0,428.71 L272.5,425.14 L273.0,421.57 L273.5,418.03 L274.0,414.55 L274.5,411.13 L275.0,407.81 L275.5,404.61 L276.0,401.54 L276.5,398.64 L277.0,395.92 L277.5,393.40 L278.0,391.11 L278.5,389.06 L279.0,387.26 L279.5,385.73 L280.0,384.49 L280.5,383.54 L281.0,382.90 L281.5,382.56 L282.0,382.53 L282.5,382.84 L283.0,383.49 L283.5,384.48 L284.0,385.80 L284.5,387.43 L285.0,389.36 L285.5,391.58 L286.0,394.05 L286.5,396.78 L287.0,399.72 L287.5,402.85 L288.0,406.15 L288.5,409.52 L289.0,412.94 L289.5,416.40 L290.0,419.89 L290.5,423.32 L291.0,426.68 L291.5,429.96 L292.0,433.15 L292.5,436.25 L293.0,439.25 L293.5,442.15 L294.0,444.93 L294.5,447.61 L295.0,450.17 L295.5,452.61 L296.0,454.93 L296.5,457.14 L297.0,459.22 L297.5,461.18 L298.0,463.03 L298.5,464.76 L299.0,466.38 L299.5,467.89 L300.0,469.30 L300.5,470.59 L301.0,471.80 L301.5,472.88 L302.0,473.90 L302.5,474.84 L303.0,475.71 L303.5,476.51 L304.0,477.33 L304.5,478.09 L305.0,478.72 L305.5,479.40 L306.0,479.95 L306.5,480.39 L307.0,480.89 L307.5,481.35 L308.0,481.57 L308.5,481.94 L309.0,482.10 L309.5,482.38 L310.0,482.73 L310.5,482.96 L311.0,483.12 L311.5,483.38 L312.0,483.62 L312.5,483.64 L313.0,484.03 L313.5,484.12 L314.0,484.38 L314.5,484.49 L315.0,484.66 L315.5,484.89 L316.0,485.09 L316.5,485.41 L317.0,485.42 L317.5,485.67 L318.0,485.66 L318.5,486.09 L319.0,486.11 L319.5,486.30 L320.0,486.29 L320.5,486.23 L321.0,486.50 L321.5,486.40 L322.0,486.58 L322.5,486.62 L323.0,486.73 L323.5,486.62 L324.0,486.90 L324.5,487.27 L325.0,487.34 L325.5,487.47 L326.0,487.42 L326.5,487.56 L327.0,487.80 L327.5,487.82 L328.0,487.80 L328.5,487.89 L329.0,487.87 L329.5,488.02 L330.0,488.14 L330.5,488.20 L331.0,488.32 L331.5,488.65 L332.0,488.46 L332.5,488.52 L333.0,488.65 L333.5,488.62 L334.0,488.57 L334.5,488.30 L335.0,488.11 L335.5,488.29 L336.0,488.57 L336.5,488.58 L337.0,488.33 L337.5,488.66 L338.0,488.62 L338.5,488.97 L339.0,489.31 L339.5,488.94 L340.0,489.01 L340.5,488.82 L341.0,489.23 L341.5,489.18 L342.0,489.72 L342.5,489.91 L343.0,489.90 L343.5,490.20 L344.0,490.28 L344.5,490.75 L345.0,490.71 L345.5,490.79 L346.0,490.55 L346.5,490.14 L347.0,490.12 L347.5,490.26 L348.0,490.48 L348.5,490.19 L349.0,490.45 L349.5,490.45 L350.0,490.72 L350.5,491.08 L351.0,490.72 L351.5,490.74 L352.0,490.77 L352.5,490.71 L353.0,490.49 L353.5,490.42 L354.0,490.24 L354.5,490.29 L355.0,490.67" fill="none" stroke="#20286a" stroke-width="0.8" clip-path="url(#cb)"/>
<path d="M48.5,500.5 L48.5,360.5 L368.5,360.5 L368.5,500.5 Z" fill="none" stroke="#626262" stroke-width="1.15"/>
<path d="M46.5,499.31 H48.5 M46.5,497.70 H48.5 M45.5,496.10 H48.5 M46.5,494.50 H48.5 M46.5,492.89 H48.5 M46.5,491.29 H48.5 M46.5,489.68 H48.5 M45.5,488.08 H48.5 M46.5,486.48 H48.5 M46.5,484.87 H48.5 M46.5,483.27 H48.5 M46.5,481.66 H48.5 M45.5,480.06 H48.5 M46.5,478.46 H48.5 M46.5,476.85 H48.5 M46.5,475.25 H48.5 M46.5,473.64 H48.5 M45.5,472.04 H48.5 M46.5,470.44 H48.5 M46.5,468.83 H48.5 M46.5,467.23 H48.5 M46.5,465.62 H48.5 M45.5,464.02 H48.5 M46.5,462.42 H48.5 M46.5,460.81 H48.5 M46.5,459.21 H48.5 M46.5,457.60 H48.5 M45.5,456.00 H48.5 M46.5,454.40 H48.5 M46.5,452.79 H48.5 M46.5,451.19 H48.5 M46.5,449.58 H48.5 M45.5,447.98 H48.5 M46.5,446.38 H48.5 M46.5,444.77 H48.5 M46.5,443.17 H48.5 M46.5,441.56 H48.5 M45.5,439.96 H48.5 M46.5,438.36 H48.5 M46.5,436.75 H48.5 M46.5,435.15 H48.5 M46.5,433.54 H48.5 M45.5,431.94 H48.5 M46.5,430.34 H48.5 M46.5,428.73 H48.5 M46.5,427.13 H48.5 M46.5,425.52 H48.5 M45.5,423.92 H48.5 M46.5,422.32 H48.5 M46.5,420.71 H48.5 M46.5,419.11 H48.5 M46.5,417.50 H48.5 M45.5,415.90 H48.5 M46.5,414.30 H48.5 M46.5,412.69 H48.5 M46.5,411.09 H48.5 M46.5,409.48 H48.5 M45.5,407.88 H48.5 M46.5,406.28 H48.5 M46.5,404.67 H48.5 M46.5,403.07 H48.5 M46.5,401.46 H48.5 M45.5,399.86 H48.5 M46.5,398.26 H48.5 M46.5,396.65 H48.5 M46.5,395.05 H48.5 M46.5,393.44 H48.5 M45.5,391.84 H48.5 M46.5,390.24 H48.5 M46.5,388.63 H48.5 M46.5,387.03 H48.5 M46.5,385.42 H48.5 M45.5,383.82 H48.5 M46.5,382.22 H48.5 M46.5,380.61 H48.5 M46.5,379.01 H48.5 M46.5,377.40 H48.5 M45.5,375.80 H48.5 M46.5,374.20 H48.5 M46.5,372.59 H48.5 M46.5,370.99 H48.5 M46.5,369.38 H48.5 M45.5,367.78 H48.5 M46.5,366.18 H48.5 M46.5,364.57 H48.5 M46.5,362.97 H48.5" stroke="#a0a0a0" stroke-width="0.5" fill="none" opacity="0.5"/>
<text x="45.20" y="498.10" font-size="5.7" fill="#34324a" text-anchor="end" textLength="9.50" lengthAdjust="spacingAndGlyphs" >0,00</text>
<text x="45.20" y="490.08" font-size="5.7" fill="#34324a" text-anchor="end" textLength="9.50" lengthAdjust="spacingAndGlyphs" >0,20</text>
<text x="45.20" y="482.06" font-size="5.7" fill="#34324a" text-anchor="end" textLength="9.50" lengthAdjust="spacingAndGlyphs" >0,40</text>
<text x="45.20" y="474.04" font-size="5.7" fill="#34324a" text-anchor="end" textLength="9.50" lengthAdjust="spacingAndGlyphs" >0,60</text>
<text x="45.20" y="466.02" font-size="5.7" fill="#34324a" text-anchor="end" textLength="9.50" lengthAdjust="spacingAndGlyphs" >0,80</text>
<text x="45.20" y="458.00" font-size="5.7" fill="#34324a" text-anchor="end" textLength="9.50" lengthAdjust="spacingAndGlyphs" >1,00</text>
<text x="45.20" y="449.98" font-size="5.7" fill="#34324a" text-anchor="end" textLength="9.50" lengthAdjust="spacingAndGlyphs" >1,20</text>
<text x="45.20" y="441.96" font-size="5.7" fill="#34324a" text-anchor="end" textLength="9.50" lengthAdjust="spacingAndGlyphs" >1,40</text>
<text x="45.20" y="433.94" font-size="5.7" fill="#34324a" text-anchor="end" textLength="9.50" lengthAdjust="spacingAndGlyphs" >1,60</text>
<text x="45.20" y="425.92" font-size="5.7" fill="#34324a" text-anchor="end" textLength="9.50" lengthAdjust="spacingAndGlyphs" >1,80</text>
<text x="45.20" y="417.90" font-size="5.7" fill="#34324a" text-anchor="end" textLength="9.50" lengthAdjust="spacingAndGlyphs" >2,00</text>
<text x="45.20" y="409.88" font-size="5.7" fill="#34324a" text-anchor="end" textLength="9.50" lengthAdjust="spacingAndGlyphs" >2,20</text>
<text x="45.20" y="401.86" font-size="5.7" fill="#34324a" text-anchor="end" textLength="9.50" lengthAdjust="spacingAndGlyphs" >2,40</text>
<text x="45.20" y="393.84" font-size="5.7" fill="#34324a" text-anchor="end" textLength="9.50" lengthAdjust="spacingAndGlyphs" >2,60</text>
<text x="45.20" y="385.82" font-size="5.7" fill="#34324a" text-anchor="end" textLength="9.50" lengthAdjust="spacingAndGlyphs" >2,80</text>
<text x="45.20" y="377.80" font-size="5.7" fill="#34324a" text-anchor="end" textLength="9.50" lengthAdjust="spacingAndGlyphs" >3,00</text>
<text x="45.20" y="369.78" font-size="5.7" fill="#34324a" text-anchor="end" textLength="9.50" lengthAdjust="spacingAndGlyphs" >3,20</text>
<text x="48.00" y="508.80" font-size="5.7" fill="#34324a" text-anchor="middle" textLength="7.00" lengthAdjust="spacingAndGlyphs" >0.5</text>
<text x="105.10" y="508.80" font-size="5.7" fill="#34324a" text-anchor="middle" textLength="2.80" lengthAdjust="spacingAndGlyphs" >1</text>
<text x="162.20" y="508.80" font-size="5.7" fill="#34324a" text-anchor="middle" textLength="7.00" lengthAdjust="spacingAndGlyphs" >1.5</text>
<text x="219.30" y="508.80" font-size="5.7" fill="#34324a" text-anchor="middle" textLength="2.80" lengthAdjust="spacingAndGlyphs" >2</text>
<text x="276.40" y="508.80" font-size="5.7" fill="#34324a" text-anchor="middle" textLength="7.00" lengthAdjust="spacingAndGlyphs" >2.5</text>
<text x="333.50" y="508.80" font-size="5.7" fill="#34324a" text-anchor="middle" textLength="2.80" lengthAdjust="spacingAndGlyphs" >3</text>
<text x="371.30" y="501.60" font-size="5.7" fill="#34305a" text-anchor="start" textLength="3.20" lengthAdjust="spacingAndGlyphs" >0</text>
<text x="371.30" y="493.85" font-size="5.7" fill="#34305a" text-anchor="start" textLength="6.00" lengthAdjust="spacingAndGlyphs" >10</text>
<text x="371.30" y="486.10" font-size="5.7" fill="#34305a" text-anchor="start" textLength="6.00" lengthAdjust="spacingAndGlyphs" >20</text>
<text x="371.30" y="478.35" font-size="5.7" fill="#34305a" text-anchor="start" textLength="6.00" lengthAdjust="spacingAndGlyphs" >30</text>
<text x="371.30" y="470.60" font-size="5.7" fill="#34305a" text-anchor="start" textLength="6.00" lengthAdjust="spacingAndGlyphs" >40</text>
<text x="371.30" y="462.85" font-size="5.7" fill="#34305a" text-anchor="start" textLength="6.00" lengthAdjust="spacingAndGlyphs" >50</text>
<text x="371.30" y="455.10" font-size="5.7" fill="#34305a" text-anchor="start" textLength="6.00" lengthAdjust="spacingAndGlyphs" >60</text>
<text x="371.30" y="447.35" font-size="5.7" fill="#34305a" text-anchor="start" textLength="6.00" lengthAdjust="spacingAndGlyphs" >70</text>
<text x="371.30" y="439.60" font-size="5.7" fill="#34305a" text-anchor="start" textLength="6.00" lengthAdjust="spacingAndGlyphs" >80</text>
<text x="371.30" y="431.85" font-size="5.7" fill="#34305a" text-anchor="start" textLength="6.00" lengthAdjust="spacingAndGlyphs" >90</text>
<text x="371.30" y="424.10" font-size="5.7" fill="#34305a" text-anchor="start" textLength="9.00" lengthAdjust="spacingAndGlyphs" >100</text>
<text x="371.30" y="416.35" font-size="5.7" fill="#34305a" text-anchor="start" textLength="9.00" lengthAdjust="spacingAndGlyphs" >110</text>
<text x="371.30" y="408.60" font-size="5.7" fill="#34305a" text-anchor="start" textLength="9.00" lengthAdjust="spacingAndGlyphs" >120</text>
<text x="371.30" y="400.85" font-size="5.7" fill="#34305a" text-anchor="start" textLength="9.00" lengthAdjust="spacingAndGlyphs" >130</text>
<text x="371.30" y="393.10" font-size="5.7" fill="#34305a" text-anchor="start" textLength="9.00" lengthAdjust="spacingAndGlyphs" >140</text>
<text x="371.30" y="385.35" font-size="5.7" fill="#34305a" text-anchor="start" textLength="9.00" lengthAdjust="spacingAndGlyphs" >150</text>
<text x="371.30" y="377.60" font-size="5.7" fill="#34305a" text-anchor="start" textLength="9.00" lengthAdjust="spacingAndGlyphs" >160</text>
<text x="371.30" y="369.85" font-size="5.7" fill="#34305a" text-anchor="start" textLength="9.00" lengthAdjust="spacingAndGlyphs" >170</text>
<text x="371.30" y="362.10" font-size="5.7" fill="#34305a" text-anchor="start" textLength="9.00" lengthAdjust="spacingAndGlyphs" >180</text>
<text x="156.90" y="354.60" font-size="10.4" fill="#454545" text-anchor="start" textLength="101.20" lengthAdjust="spacingAndGlyphs" >PROCESS OVERVIEW</text>
<text x="346.70" y="348.30" font-size="8.5" fill="#555" text-anchor="start" textLength="49.20" lengthAdjust="spacingAndGlyphs" >Pressure [bar]</text>
<text x="23.60" y="523.10" font-size="9" fill="#555" text-anchor="start" textLength="72.30" lengthAdjust="spacingAndGlyphs" >UV Absorbance [AU]</text>
<text x="327.20" y="522.80" font-size="9" fill="#555" text-anchor="start" textLength="38.80" lengthAdjust="spacingAndGlyphs" >Time [min]</text>
<path d="M23.3,509.5 V497.5" stroke="#555" stroke-width="1"/><path d="M21.1,500.3 L23.3,496.6 L25.5,500.3 L23.3,499.5 Z" fill="#333"/>
<path d="M308.8,519.7 H319.5" stroke="#777" stroke-width="1"/><path d="M317.6,517.6 L321.3,519.7 L317.6,521.8 L318.4,519.7 Z" fill="#333"/>
<path d="M391,356 V367.5" stroke="#555" stroke-width="1"/><path d="M388.6,365.4 L391,369.2 L393.4,365.4 L391,366.4 Z" fill="#333"/>
<rect x="14.5" y="284.5" width="186.5" height="33.5" rx="5" fill="#9ec634" stroke="#6f8a3a" stroke-width="1"/>
<text x="67.90" y="304.20" font-size="11.2" fill="#2f3530" text-anchor="start" textLength="77.00" lengthAdjust="spacingAndGlyphs" stroke="#2f3530" stroke-width="0.2">BACK PRESSURE</text>
<rect x="215.0" y="284.5" width="186.5" height="33.5" rx="5" fill="#9ec634" stroke="#6f8a3a" stroke-width="1"/>
<text x="271.50" y="304.20" font-size="11.2" fill="#2f3530" text-anchor="start" textLength="69.50" lengthAdjust="spacingAndGlyphs" stroke="#2f3530" stroke-width="0.2">TEMPERATURE</text>
<rect x="415.5" y="284.5" width="186.5" height="33.5" rx="5" fill="#9ec634" stroke="#6f8a3a" stroke-width="1"/>
<text x="475.10" y="304.20" font-size="11.2" fill="#2f3530" text-anchor="start" textLength="65.10" lengthAdjust="spacingAndGlyphs" stroke="#2f3530" stroke-width="0.2">LAMP STATUS</text>
<rect x="616.0" y="284.5" width="186.5" height="33.5" rx="5" fill="#9ec634" stroke="#6f8a3a" stroke-width="1"/>
<text x="671.80" y="304.20" font-size="11.2" fill="#2f3530" text-anchor="start" textLength="72.80" lengthAdjust="spacingAndGlyphs" stroke="#2f3530" stroke-width="0.2">PEAK CONTROL</text>
<rect x="415.5" y="327" width="187" height="48" rx="5" fill="#fdc862" stroke="#8f7e5a" stroke-width="1"/>
<text x="487.90" y="353.80" font-size="10.5" fill="#2a2a2a" text-anchor="start" textLength="39.40" lengthAdjust="spacingAndGlyphs" stroke="#2a2a2a" stroke-width="0.2">CHANGE</text>
<rect x="415.5" y="432" width="187" height="97.5" rx="6" fill="#4ac3f0" stroke="#4f7a8c" stroke-width="1"/>
<text x="487.70" y="485.10" font-size="13.5" fill="#2a2a2a" text-anchor="start" textLength="39.80" lengthAdjust="spacingAndGlyphs" >START</text>
<rect x="616.5" y="327.5" width="186" height="204" fill="#fff" stroke="#7a7a7a" stroke-width="1"/>
<line x1="617" y1="350.17" x2="802" y2="350.17" stroke="#dedede" stroke-width="1"/>
<line x1="617" y1="372.83" x2="802" y2="372.83" stroke="#dedede" stroke-width="1"/>
<line x1="617" y1="395.50" x2="802" y2="395.50" stroke="#dedede" stroke-width="1"/>
<line x1="617" y1="418.17" x2="802" y2="418.17" stroke="#dedede" stroke-width="1"/>
<line x1="617" y1="440.83" x2="802" y2="440.83" stroke="#dedede" stroke-width="1"/>
<line x1="617" y1="463.50" x2="802" y2="463.50" stroke="#dedede" stroke-width="1"/>
<line x1="617" y1="486.17" x2="802" y2="486.17" stroke="#dedede" stroke-width="1"/>
<line x1="617" y1="508.83" x2="802" y2="508.83" stroke="#dedede" stroke-width="1"/>
<line x1="749.5" y1="328" x2="749.5" y2="531" stroke="#d6d6d6" stroke-width="1"/>
<path d="M803,328 V532 H617" stroke="#666" stroke-width="1" fill="none"/>
<text x="623.00" y="342.70" font-size="9" fill="#4a4a4a" text-anchor="start" textLength="50.00" lengthAdjust="spacingAndGlyphs" >Flow [ml/min]</text>
<text x="795.30" y="342.70" font-size="9" fill="#4a4a4a" text-anchor="end" textLength="19.70" lengthAdjust="spacingAndGlyphs" >170.0</text>
<text x="623.00" y="365.37" font-size="9" fill="#4a4a4a" text-anchor="start" textLength="44.40" lengthAdjust="spacingAndGlyphs" >Modifier [%]</text>
<text x="795.30" y="365.37" font-size="9" fill="#4a4a4a" text-anchor="end" textLength="11.50" lengthAdjust="spacingAndGlyphs" >8.0</text>
<text x="623.00" y="388.03" font-size="9" fill="#333" text-anchor="start" textLength="71.90" lengthAdjust="spacingAndGlyphs" >Pressure Pump [bar]</text>
<text x="795.30" y="388.03" font-size="9" fill="#4a4a4a" text-anchor="end" textLength="13.80" lengthAdjust="spacingAndGlyphs" >135</text>
<text x="623.00" y="410.70" font-size="9" fill="#4a4a4a" text-anchor="start" textLength="102.60" lengthAdjust="spacingAndGlyphs" >Pressure Modifier Pump [bar]</text>
<text x="795.30" y="410.70" font-size="9" fill="#4a4a4a" text-anchor="end" textLength="13.80" lengthAdjust="spacingAndGlyphs" >127</text>
<text x="623.00" y="433.37" font-size="9" fill="#4a4a4a" text-anchor="start" textLength="65.50" lengthAdjust="spacingAndGlyphs" >Pressure BPR [bar]</text>
<text x="795.30" y="433.37" font-size="9" fill="#4a4a4a" text-anchor="end" textLength="13.80" lengthAdjust="spacingAndGlyphs" >100</text>
<text x="623.00" y="456.03" font-size="9" fill="#4a4a4a" text-anchor="start" textLength="72.90" lengthAdjust="spacingAndGlyphs" >Wavelength UV [nm]</text>
<text x="795.30" y="456.03" font-size="9" fill="#4a4a4a" text-anchor="end" textLength="13.80" lengthAdjust="spacingAndGlyphs" >210</text>
<text x="623.00" y="478.70" font-size="9" fill="#4a4a4a" text-anchor="start" textLength="74.20" lengthAdjust="spacingAndGlyphs" >Injection Volume [µl]</text>
<text x="795.30" y="478.70" font-size="9" fill="#4a4a4a" text-anchor="end" textLength="13.80" lengthAdjust="spacingAndGlyphs" >100</text>
<text x="623.00" y="501.37" font-size="9" fill="#4a4a4a" text-anchor="start" textLength="76.00" lengthAdjust="spacingAndGlyphs" >Runtime [hh:min:sec]</text>
<text x="795.30" y="501.37" font-size="9" fill="#4a4a4a" text-anchor="end" textLength="32.30" lengthAdjust="spacingAndGlyphs" >00:29:05</text>
<text x="623.00" y="524.03" font-size="9" fill="#4a4a4a" text-anchor="start" textLength="84.50" lengthAdjust="spacingAndGlyphs" >Remaining [hh:min:sec]</text>
<text x="795.30" y="524.03" font-size="9" fill="#4a4a4a" text-anchor="end" textLength="32.30" lengthAdjust="spacingAndGlyphs" >00:14:24</text>
<rect x="818" y="12.00" width="128.5" height="98.5" rx="11" fill="#33247f"/>
<text x="881.90" y="65.20" font-size="14.3" fill="#f0eff8" text-anchor="middle" textLength="50.00" lengthAdjust="spacingAndGlyphs" >MANUAL</text>
<rect x="818" y="116.40" width="128.5" height="98.5" rx="11" fill="#33247f"/>
<text x="881.90" y="169.60" font-size="14.3" fill="#f0eff8" text-anchor="middle" textLength="72.40" lengthAdjust="spacingAndGlyphs" >PARAMETER</text>
<rect x="818" y="220.80" width="128.5" height="98.5" rx="11" fill="#33247f"/>
<text x="881.90" y="274.00" font-size="14.3" fill="#f0eff8" text-anchor="middle" textLength="75.80" lengthAdjust="spacingAndGlyphs" >COLLECTION</text>
<rect x="818" y="325.20" width="128.5" height="98.5" rx="11" fill="#33247f"/>
<text x="881.90" y="378.40" font-size="14.3" fill="#f0eff8" text-anchor="middle" textLength="47.70" lengthAdjust="spacingAndGlyphs" >SYSTEM</text>
<rect x="818.5" y="430.5" width="127.5" height="97.5" rx="11" fill="#eef6fd" stroke="#a9a9a9" stroke-width="1"/>
<text x="881.00" y="482.80" font-size="13.4" fill="#3a3a3a" text-anchor="middle" textLength="83.50" lengthAdjust="spacingAndGlyphs" >RUN METHOD</text>
</svg></body></html>
